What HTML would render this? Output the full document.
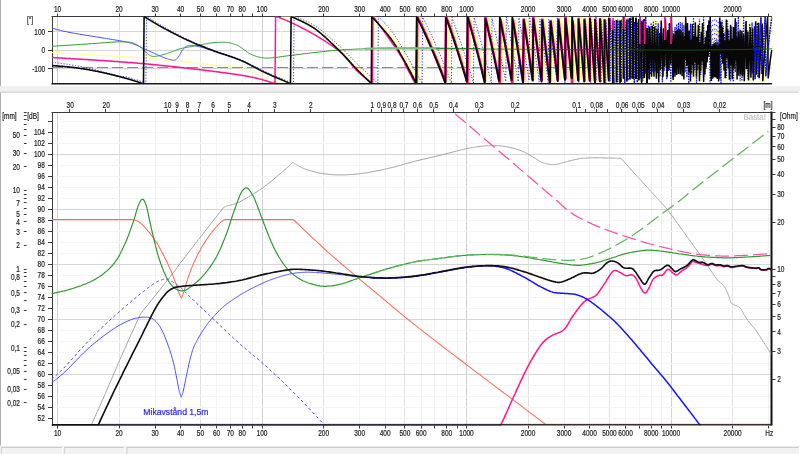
<!DOCTYPE html>
<html><head><meta charset="utf-8"><title>Basta!</title>
<style>html,body{margin:0;padding:0;background:#fff;overflow:hidden}
svg{display:block;font-family:"Liberation Sans",sans-serif}</style></head>
<body><svg width="800" height="454" viewBox="0 0 800 454">
<rect x="0.0" y="0.0" width="800.0" height="454.0" fill="#ffffff" />
<rect x="0.0" y="86.2" width="800.0" height="6.2" fill="#f0f0f0" />
<line x1="0.0" y1="92.2" x2="798.5" y2="92.2" stroke="#c4c4c4" stroke-width="0.8" />
<rect x="0.0" y="0.0" width="0.9" height="86.0" fill="#a8a8a8" />
<rect x="0.0" y="92.5" width="0.9" height="353.0" fill="#a8a8a8" />
<rect x="0.0" y="445.8" width="800.0" height="9.0" fill="#f0f0f0" />
<rect x="1.2" y="447.0" width="61.0" height="7.0" fill="#f2f2f2" />
<line x1="1.2" y1="447.4" x2="62.2" y2="447.4" stroke="#c0c0c0" stroke-width="0.8" />
<line x1="1.5" y1="447.0" x2="1.5" y2="454.0" stroke="#c8c8c8" stroke-width="0.8" />
<line x1="62.5" y1="447.0" x2="62.5" y2="454.0" stroke="#ffffff" stroke-width="1" />
<rect x="64.4" y="447.0" width="59.8" height="7.0" fill="#f2f2f2" />
<line x1="64.4" y1="447.4" x2="124.2" y2="447.4" stroke="#c0c0c0" stroke-width="0.8" />
<line x1="64.7" y1="447.0" x2="64.7" y2="454.0" stroke="#c8c8c8" stroke-width="0.8" />
<line x1="124.5" y1="447.0" x2="124.5" y2="454.0" stroke="#ffffff" stroke-width="1" />
<rect x="126.6" y="447.0" width="671.9" height="7.0" fill="#f2f2f2" />
<line x1="126.6" y1="447.4" x2="798.5" y2="447.4" stroke="#c0c0c0" stroke-width="0.8" />
<line x1="126.9" y1="447.0" x2="126.9" y2="454.0" stroke="#c8c8c8" stroke-width="0.8" />
<line x1="799.5" y1="447.0" x2="799.5" y2="454.0" stroke="#ffffff" stroke-width="1" />
<line x1="57.5" y1="16.5" x2="57.5" y2="83.5" stroke="#d0d0d0" stroke-width="1" />
<line x1="119.5" y1="16.5" x2="119.5" y2="83.5" stroke="#e1e1e1" stroke-width="1" />
<line x1="155.5" y1="16.5" x2="155.5" y2="83.5" stroke="#f3f3f3" stroke-width="1" />
<line x1="180.5" y1="16.5" x2="180.5" y2="83.5" stroke="#f3f3f3" stroke-width="1" />
<line x1="200.5" y1="16.5" x2="200.5" y2="83.5" stroke="#e1e1e1" stroke-width="1" />
<line x1="216.5" y1="16.5" x2="216.5" y2="83.5" stroke="#f3f3f3" stroke-width="1" />
<line x1="230.5" y1="16.5" x2="230.5" y2="83.5" stroke="#f3f3f3" stroke-width="1" />
<line x1="242.5" y1="16.5" x2="242.5" y2="83.5" stroke="#f3f3f3" stroke-width="1" />
<line x1="252.5" y1="16.5" x2="252.5" y2="83.5" stroke="#f3f3f3" stroke-width="1" />
<line x1="262.5" y1="16.5" x2="262.5" y2="83.5" stroke="#d0d0d0" stroke-width="1" />
<line x1="323.5" y1="16.5" x2="323.5" y2="83.5" stroke="#e1e1e1" stroke-width="1" />
<line x1="359.5" y1="16.5" x2="359.5" y2="83.5" stroke="#f3f3f3" stroke-width="1" />
<line x1="385.5" y1="16.5" x2="385.5" y2="83.5" stroke="#f3f3f3" stroke-width="1" />
<line x1="404.5" y1="16.5" x2="404.5" y2="83.5" stroke="#e1e1e1" stroke-width="1" />
<line x1="421.5" y1="16.5" x2="421.5" y2="83.5" stroke="#f3f3f3" stroke-width="1" />
<line x1="434.5" y1="16.5" x2="434.5" y2="83.5" stroke="#f3f3f3" stroke-width="1" />
<line x1="446.5" y1="16.5" x2="446.5" y2="83.5" stroke="#f3f3f3" stroke-width="1" />
<line x1="457.5" y1="16.5" x2="457.5" y2="83.5" stroke="#f3f3f3" stroke-width="1" />
<line x1="466.5" y1="16.5" x2="466.5" y2="83.5" stroke="#d0d0d0" stroke-width="1" />
<line x1="528.5" y1="16.5" x2="528.5" y2="83.5" stroke="#e1e1e1" stroke-width="1" />
<line x1="564.5" y1="16.5" x2="564.5" y2="83.5" stroke="#f3f3f3" stroke-width="1" />
<line x1="589.5" y1="16.5" x2="589.5" y2="83.5" stroke="#f3f3f3" stroke-width="1" />
<line x1="609.5" y1="16.5" x2="609.5" y2="83.5" stroke="#e1e1e1" stroke-width="1" />
<line x1="625.5" y1="16.5" x2="625.5" y2="83.5" stroke="#f3f3f3" stroke-width="1" />
<line x1="639.5" y1="16.5" x2="639.5" y2="83.5" stroke="#f3f3f3" stroke-width="1" />
<line x1="651.5" y1="16.5" x2="651.5" y2="83.5" stroke="#f3f3f3" stroke-width="1" />
<line x1="661.5" y1="16.5" x2="661.5" y2="83.5" stroke="#f3f3f3" stroke-width="1" />
<line x1="671.5" y1="16.5" x2="671.5" y2="83.5" stroke="#d0d0d0" stroke-width="1" />
<line x1="732.5" y1="16.5" x2="732.5" y2="83.5" stroke="#e1e1e1" stroke-width="1" />
<line x1="768.5" y1="16.5" x2="768.5" y2="83.5" stroke="#f3f3f3" stroke-width="1" />
<line x1="52.0" y1="31.5" x2="772.0" y2="31.5" stroke="#d4d4d4" stroke-width="1" />
<line x1="52.0" y1="50.5" x2="772.0" y2="50.5" stroke="#d4d4d4" stroke-width="1" />
<line x1="52.0" y1="68.5" x2="772.0" y2="68.5" stroke="#d4d4d4" stroke-width="1" />
<line x1="57.5" y1="112.0" x2="57.5" y2="424.0" stroke="#d0d0d0" stroke-width="1" />
<line x1="119.5" y1="112.0" x2="119.5" y2="424.0" stroke="#e1e1e1" stroke-width="1" />
<line x1="155.5" y1="112.0" x2="155.5" y2="424.0" stroke="#f3f3f3" stroke-width="1" />
<line x1="180.5" y1="112.0" x2="180.5" y2="424.0" stroke="#f3f3f3" stroke-width="1" />
<line x1="200.5" y1="112.0" x2="200.5" y2="424.0" stroke="#e1e1e1" stroke-width="1" />
<line x1="216.5" y1="112.0" x2="216.5" y2="424.0" stroke="#f3f3f3" stroke-width="1" />
<line x1="230.5" y1="112.0" x2="230.5" y2="424.0" stroke="#f3f3f3" stroke-width="1" />
<line x1="242.5" y1="112.0" x2="242.5" y2="424.0" stroke="#f3f3f3" stroke-width="1" />
<line x1="252.5" y1="112.0" x2="252.5" y2="424.0" stroke="#f3f3f3" stroke-width="1" />
<line x1="262.5" y1="112.0" x2="262.5" y2="424.0" stroke="#d0d0d0" stroke-width="1" />
<line x1="323.5" y1="112.0" x2="323.5" y2="424.0" stroke="#e1e1e1" stroke-width="1" />
<line x1="359.5" y1="112.0" x2="359.5" y2="424.0" stroke="#f3f3f3" stroke-width="1" />
<line x1="385.5" y1="112.0" x2="385.5" y2="424.0" stroke="#f3f3f3" stroke-width="1" />
<line x1="404.5" y1="112.0" x2="404.5" y2="424.0" stroke="#e1e1e1" stroke-width="1" />
<line x1="421.5" y1="112.0" x2="421.5" y2="424.0" stroke="#f3f3f3" stroke-width="1" />
<line x1="434.5" y1="112.0" x2="434.5" y2="424.0" stroke="#f3f3f3" stroke-width="1" />
<line x1="446.5" y1="112.0" x2="446.5" y2="424.0" stroke="#f3f3f3" stroke-width="1" />
<line x1="457.5" y1="112.0" x2="457.5" y2="424.0" stroke="#f3f3f3" stroke-width="1" />
<line x1="466.5" y1="112.0" x2="466.5" y2="424.0" stroke="#d0d0d0" stroke-width="1" />
<line x1="528.5" y1="112.0" x2="528.5" y2="424.0" stroke="#e1e1e1" stroke-width="1" />
<line x1="564.5" y1="112.0" x2="564.5" y2="424.0" stroke="#f3f3f3" stroke-width="1" />
<line x1="589.5" y1="112.0" x2="589.5" y2="424.0" stroke="#f3f3f3" stroke-width="1" />
<line x1="609.5" y1="112.0" x2="609.5" y2="424.0" stroke="#e1e1e1" stroke-width="1" />
<line x1="625.5" y1="112.0" x2="625.5" y2="424.0" stroke="#f3f3f3" stroke-width="1" />
<line x1="639.5" y1="112.0" x2="639.5" y2="424.0" stroke="#f3f3f3" stroke-width="1" />
<line x1="651.5" y1="112.0" x2="651.5" y2="424.0" stroke="#f3f3f3" stroke-width="1" />
<line x1="661.5" y1="112.0" x2="661.5" y2="424.0" stroke="#f3f3f3" stroke-width="1" />
<line x1="671.5" y1="112.0" x2="671.5" y2="424.0" stroke="#d0d0d0" stroke-width="1" />
<line x1="732.5" y1="112.0" x2="732.5" y2="424.0" stroke="#e1e1e1" stroke-width="1" />
<line x1="768.5" y1="112.0" x2="768.5" y2="424.0" stroke="#f3f3f3" stroke-width="1" />
<line x1="52.0" y1="418.5" x2="771.5" y2="418.5" stroke="#f4f4f4" stroke-width="1" />
<line x1="52.0" y1="407.5" x2="771.5" y2="407.5" stroke="#f4f4f4" stroke-width="1" />
<line x1="52.0" y1="396.5" x2="771.5" y2="396.5" stroke="#f4f4f4" stroke-width="1" />
<line x1="52.0" y1="385.5" x2="771.5" y2="385.5" stroke="#f4f4f4" stroke-width="1" />
<line x1="52.0" y1="374.5" x2="771.5" y2="374.5" stroke="#d5d5d5" stroke-width="1" />
<line x1="52.0" y1="363.5" x2="771.5" y2="363.5" stroke="#f4f4f4" stroke-width="1" />
<line x1="52.0" y1="352.5" x2="771.5" y2="352.5" stroke="#f4f4f4" stroke-width="1" />
<line x1="52.0" y1="341.5" x2="771.5" y2="341.5" stroke="#f4f4f4" stroke-width="1" />
<line x1="52.0" y1="330.5" x2="771.5" y2="330.5" stroke="#f4f4f4" stroke-width="1" />
<line x1="52.0" y1="319.5" x2="771.5" y2="319.5" stroke="#d5d5d5" stroke-width="1" />
<line x1="52.0" y1="308.5" x2="771.5" y2="308.5" stroke="#f4f4f4" stroke-width="1" />
<line x1="52.0" y1="297.5" x2="771.5" y2="297.5" stroke="#f4f4f4" stroke-width="1" />
<line x1="52.0" y1="286.5" x2="771.5" y2="286.5" stroke="#f4f4f4" stroke-width="1" />
<line x1="52.0" y1="275.5" x2="771.5" y2="275.5" stroke="#f4f4f4" stroke-width="1" />
<line x1="52.0" y1="264.5" x2="771.5" y2="264.5" stroke="#d5d5d5" stroke-width="1" />
<line x1="52.0" y1="253.5" x2="771.5" y2="253.5" stroke="#f4f4f4" stroke-width="1" />
<line x1="52.0" y1="242.5" x2="771.5" y2="242.5" stroke="#f4f4f4" stroke-width="1" />
<line x1="52.0" y1="231.5" x2="771.5" y2="231.5" stroke="#f4f4f4" stroke-width="1" />
<line x1="52.0" y1="220.5" x2="771.5" y2="220.5" stroke="#f4f4f4" stroke-width="1" />
<line x1="52.0" y1="209.5" x2="771.5" y2="209.5" stroke="#d5d5d5" stroke-width="1" />
<line x1="52.0" y1="198.5" x2="771.5" y2="198.5" stroke="#f4f4f4" stroke-width="1" />
<line x1="52.0" y1="187.5" x2="771.5" y2="187.5" stroke="#f4f4f4" stroke-width="1" />
<line x1="52.0" y1="176.5" x2="771.5" y2="176.5" stroke="#f4f4f4" stroke-width="1" />
<line x1="52.0" y1="165.5" x2="771.5" y2="165.5" stroke="#f4f4f4" stroke-width="1" />
<line x1="52.0" y1="154.5" x2="771.5" y2="154.5" stroke="#d5d5d5" stroke-width="1" />
<line x1="52.0" y1="143.5" x2="771.5" y2="143.5" stroke="#f4f4f4" stroke-width="1" />
<line x1="52.0" y1="132.5" x2="771.5" y2="132.5" stroke="#f4f4f4" stroke-width="1" />
<line x1="52.0" y1="121.5" x2="771.5" y2="121.5" stroke="#f4f4f4" stroke-width="1" />
<line x1="51.5" y1="16.5" x2="772.0" y2="16.5" stroke="#3a3a3a" stroke-width="1" />
<line x1="52.5" y1="16.5" x2="52.5" y2="84.0" stroke="#3a3a3a" stroke-width="1" />
<line x1="57.5" y1="13.5" x2="57.5" y2="16.5" stroke="#3a3a3a" stroke-width="1" />
<line x1="57.5" y1="425.6" x2="57.5" y2="428.5" stroke="#3a3a3a" stroke-width="1" />
<line x1="119.5" y1="13.5" x2="119.5" y2="16.5" stroke="#3a3a3a" stroke-width="1" />
<line x1="119.5" y1="425.6" x2="119.5" y2="428.5" stroke="#3a3a3a" stroke-width="1" />
<line x1="155.5" y1="13.5" x2="155.5" y2="16.5" stroke="#3a3a3a" stroke-width="1" />
<line x1="155.5" y1="425.6" x2="155.5" y2="428.5" stroke="#3a3a3a" stroke-width="1" />
<line x1="180.5" y1="13.5" x2="180.5" y2="16.5" stroke="#3a3a3a" stroke-width="1" />
<line x1="180.5" y1="425.6" x2="180.5" y2="428.5" stroke="#3a3a3a" stroke-width="1" />
<line x1="200.5" y1="13.5" x2="200.5" y2="16.5" stroke="#3a3a3a" stroke-width="1" />
<line x1="200.5" y1="425.6" x2="200.5" y2="428.5" stroke="#3a3a3a" stroke-width="1" />
<line x1="216.5" y1="13.5" x2="216.5" y2="16.5" stroke="#3a3a3a" stroke-width="1" />
<line x1="216.5" y1="425.6" x2="216.5" y2="428.5" stroke="#3a3a3a" stroke-width="1" />
<line x1="230.5" y1="13.5" x2="230.5" y2="16.5" stroke="#3a3a3a" stroke-width="1" />
<line x1="230.5" y1="425.6" x2="230.5" y2="428.5" stroke="#3a3a3a" stroke-width="1" />
<line x1="242.5" y1="13.5" x2="242.5" y2="16.5" stroke="#3a3a3a" stroke-width="1" />
<line x1="242.5" y1="425.6" x2="242.5" y2="428.5" stroke="#3a3a3a" stroke-width="1" />
<line x1="252.5" y1="13.5" x2="252.5" y2="16.5" stroke="#3a3a3a" stroke-width="1" />
<line x1="252.5" y1="425.6" x2="252.5" y2="428.5" stroke="#3a3a3a" stroke-width="1" />
<line x1="262.5" y1="13.5" x2="262.5" y2="16.5" stroke="#3a3a3a" stroke-width="1" />
<line x1="262.5" y1="425.6" x2="262.5" y2="428.5" stroke="#3a3a3a" stroke-width="1" />
<line x1="323.5" y1="13.5" x2="323.5" y2="16.5" stroke="#3a3a3a" stroke-width="1" />
<line x1="323.5" y1="425.6" x2="323.5" y2="428.5" stroke="#3a3a3a" stroke-width="1" />
<line x1="359.5" y1="13.5" x2="359.5" y2="16.5" stroke="#3a3a3a" stroke-width="1" />
<line x1="359.5" y1="425.6" x2="359.5" y2="428.5" stroke="#3a3a3a" stroke-width="1" />
<line x1="385.5" y1="13.5" x2="385.5" y2="16.5" stroke="#3a3a3a" stroke-width="1" />
<line x1="385.5" y1="425.6" x2="385.5" y2="428.5" stroke="#3a3a3a" stroke-width="1" />
<line x1="404.5" y1="13.5" x2="404.5" y2="16.5" stroke="#3a3a3a" stroke-width="1" />
<line x1="404.5" y1="425.6" x2="404.5" y2="428.5" stroke="#3a3a3a" stroke-width="1" />
<line x1="421.5" y1="13.5" x2="421.5" y2="16.5" stroke="#3a3a3a" stroke-width="1" />
<line x1="421.5" y1="425.6" x2="421.5" y2="428.5" stroke="#3a3a3a" stroke-width="1" />
<line x1="434.5" y1="13.5" x2="434.5" y2="16.5" stroke="#3a3a3a" stroke-width="1" />
<line x1="434.5" y1="425.6" x2="434.5" y2="428.5" stroke="#3a3a3a" stroke-width="1" />
<line x1="446.5" y1="13.5" x2="446.5" y2="16.5" stroke="#3a3a3a" stroke-width="1" />
<line x1="446.5" y1="425.6" x2="446.5" y2="428.5" stroke="#3a3a3a" stroke-width="1" />
<line x1="457.5" y1="13.5" x2="457.5" y2="16.5" stroke="#3a3a3a" stroke-width="1" />
<line x1="457.5" y1="425.6" x2="457.5" y2="428.5" stroke="#3a3a3a" stroke-width="1" />
<line x1="466.5" y1="13.5" x2="466.5" y2="16.5" stroke="#3a3a3a" stroke-width="1" />
<line x1="466.5" y1="425.6" x2="466.5" y2="428.5" stroke="#3a3a3a" stroke-width="1" />
<line x1="528.5" y1="13.5" x2="528.5" y2="16.5" stroke="#3a3a3a" stroke-width="1" />
<line x1="528.5" y1="425.6" x2="528.5" y2="428.5" stroke="#3a3a3a" stroke-width="1" />
<line x1="564.5" y1="13.5" x2="564.5" y2="16.5" stroke="#3a3a3a" stroke-width="1" />
<line x1="564.5" y1="425.6" x2="564.5" y2="428.5" stroke="#3a3a3a" stroke-width="1" />
<line x1="589.5" y1="13.5" x2="589.5" y2="16.5" stroke="#3a3a3a" stroke-width="1" />
<line x1="589.5" y1="425.6" x2="589.5" y2="428.5" stroke="#3a3a3a" stroke-width="1" />
<line x1="609.5" y1="13.5" x2="609.5" y2="16.5" stroke="#3a3a3a" stroke-width="1" />
<line x1="609.5" y1="425.6" x2="609.5" y2="428.5" stroke="#3a3a3a" stroke-width="1" />
<line x1="625.5" y1="13.5" x2="625.5" y2="16.5" stroke="#3a3a3a" stroke-width="1" />
<line x1="625.5" y1="425.6" x2="625.5" y2="428.5" stroke="#3a3a3a" stroke-width="1" />
<line x1="639.5" y1="13.5" x2="639.5" y2="16.5" stroke="#3a3a3a" stroke-width="1" />
<line x1="639.5" y1="425.6" x2="639.5" y2="428.5" stroke="#3a3a3a" stroke-width="1" />
<line x1="651.5" y1="13.5" x2="651.5" y2="16.5" stroke="#3a3a3a" stroke-width="1" />
<line x1="651.5" y1="425.6" x2="651.5" y2="428.5" stroke="#3a3a3a" stroke-width="1" />
<line x1="661.5" y1="13.5" x2="661.5" y2="16.5" stroke="#3a3a3a" stroke-width="1" />
<line x1="661.5" y1="425.6" x2="661.5" y2="428.5" stroke="#3a3a3a" stroke-width="1" />
<line x1="671.5" y1="13.5" x2="671.5" y2="16.5" stroke="#3a3a3a" stroke-width="1" />
<line x1="671.5" y1="425.6" x2="671.5" y2="428.5" stroke="#3a3a3a" stroke-width="1" />
<line x1="732.5" y1="13.5" x2="732.5" y2="16.5" stroke="#3a3a3a" stroke-width="1" />
<line x1="732.5" y1="425.6" x2="732.5" y2="428.5" stroke="#3a3a3a" stroke-width="1" />
<line x1="768.5" y1="13.5" x2="768.5" y2="16.5" stroke="#3a3a3a" stroke-width="1" />
<line x1="768.5" y1="425.6" x2="768.5" y2="428.5" stroke="#3a3a3a" stroke-width="1" />
<line x1="48.0" y1="31.5" x2="52.0" y2="31.5" stroke="#3a3a3a" stroke-width="1" />
<line x1="48.0" y1="50.5" x2="52.0" y2="50.5" stroke="#3a3a3a" stroke-width="1" />
<line x1="48.0" y1="68.5" x2="52.0" y2="68.5" stroke="#3a3a3a" stroke-width="1" />
<line x1="51.5" y1="112.5" x2="771.5" y2="112.5" stroke="#3a3a3a" stroke-width="1" />
<line x1="52.5" y1="112.0" x2="52.5" y2="425.6" stroke="#3a3a3a" stroke-width="1" />
<rect x="770.5" y="111.5" width="2.0" height="314.1" fill="#111" />
<line x1="167.5" y1="109.0" x2="167.5" y2="112.0" stroke="#3a3a3a" stroke-width="1" />
<line x1="105.5" y1="109.0" x2="105.5" y2="112.0" stroke="#3a3a3a" stroke-width="1" />
<line x1="69.5" y1="109.0" x2="69.5" y2="112.0" stroke="#3a3a3a" stroke-width="1" />
<line x1="371.5" y1="109.0" x2="371.5" y2="112.0" stroke="#3a3a3a" stroke-width="1" />
<line x1="310.5" y1="109.0" x2="310.5" y2="112.0" stroke="#3a3a3a" stroke-width="1" />
<line x1="274.5" y1="109.0" x2="274.5" y2="112.0" stroke="#3a3a3a" stroke-width="1" />
<line x1="248.5" y1="109.0" x2="248.5" y2="112.0" stroke="#3a3a3a" stroke-width="1" />
<line x1="228.5" y1="109.0" x2="228.5" y2="112.0" stroke="#3a3a3a" stroke-width="1" />
<line x1="212.5" y1="109.0" x2="212.5" y2="112.0" stroke="#3a3a3a" stroke-width="1" />
<line x1="198.5" y1="109.0" x2="198.5" y2="112.0" stroke="#3a3a3a" stroke-width="1" />
<line x1="187.5" y1="109.0" x2="187.5" y2="112.0" stroke="#3a3a3a" stroke-width="1" />
<line x1="176.5" y1="109.0" x2="176.5" y2="112.0" stroke="#3a3a3a" stroke-width="1" />
<line x1="576.5" y1="109.0" x2="576.5" y2="112.0" stroke="#3a3a3a" stroke-width="1" />
<line x1="514.5" y1="109.0" x2="514.5" y2="112.0" stroke="#3a3a3a" stroke-width="1" />
<line x1="478.5" y1="109.0" x2="478.5" y2="112.0" stroke="#3a3a3a" stroke-width="1" />
<line x1="453.5" y1="109.0" x2="453.5" y2="112.0" stroke="#3a3a3a" stroke-width="1" />
<line x1="433.5" y1="109.0" x2="433.5" y2="112.0" stroke="#3a3a3a" stroke-width="1" />
<line x1="417.5" y1="109.0" x2="417.5" y2="112.0" stroke="#3a3a3a" stroke-width="1" />
<line x1="403.5" y1="109.0" x2="403.5" y2="112.0" stroke="#3a3a3a" stroke-width="1" />
<line x1="391.5" y1="109.0" x2="391.5" y2="112.0" stroke="#3a3a3a" stroke-width="1" />
<line x1="381.5" y1="109.0" x2="381.5" y2="112.0" stroke="#3a3a3a" stroke-width="1" />
<line x1="719.5" y1="109.0" x2="719.5" y2="112.0" stroke="#3a3a3a" stroke-width="1" />
<line x1="683.5" y1="109.0" x2="683.5" y2="112.0" stroke="#3a3a3a" stroke-width="1" />
<line x1="657.5" y1="109.0" x2="657.5" y2="112.0" stroke="#3a3a3a" stroke-width="1" />
<line x1="637.5" y1="109.0" x2="637.5" y2="112.0" stroke="#3a3a3a" stroke-width="1" />
<line x1="621.5" y1="109.0" x2="621.5" y2="112.0" stroke="#3a3a3a" stroke-width="1" />
<line x1="607.5" y1="109.0" x2="607.5" y2="112.0" stroke="#3a3a3a" stroke-width="1" />
<line x1="596.5" y1="109.0" x2="596.5" y2="112.0" stroke="#3a3a3a" stroke-width="1" />
<line x1="585.5" y1="109.0" x2="585.5" y2="112.0" stroke="#3a3a3a" stroke-width="1" />
<line x1="48.0" y1="418.5" x2="52.0" y2="418.5" stroke="#3a3a3a" stroke-width="1" />
<line x1="48.0" y1="407.5" x2="52.0" y2="407.5" stroke="#3a3a3a" stroke-width="1" />
<line x1="48.0" y1="396.5" x2="52.0" y2="396.5" stroke="#3a3a3a" stroke-width="1" />
<line x1="48.0" y1="385.5" x2="52.0" y2="385.5" stroke="#3a3a3a" stroke-width="1" />
<line x1="48.0" y1="374.5" x2="52.0" y2="374.5" stroke="#3a3a3a" stroke-width="1" />
<line x1="48.0" y1="363.5" x2="52.0" y2="363.5" stroke="#3a3a3a" stroke-width="1" />
<line x1="48.0" y1="352.5" x2="52.0" y2="352.5" stroke="#3a3a3a" stroke-width="1" />
<line x1="48.0" y1="341.5" x2="52.0" y2="341.5" stroke="#3a3a3a" stroke-width="1" />
<line x1="48.0" y1="330.5" x2="52.0" y2="330.5" stroke="#3a3a3a" stroke-width="1" />
<line x1="48.0" y1="319.5" x2="52.0" y2="319.5" stroke="#3a3a3a" stroke-width="1" />
<line x1="48.0" y1="308.5" x2="52.0" y2="308.5" stroke="#3a3a3a" stroke-width="1" />
<line x1="48.0" y1="297.5" x2="52.0" y2="297.5" stroke="#3a3a3a" stroke-width="1" />
<line x1="48.0" y1="286.5" x2="52.0" y2="286.5" stroke="#3a3a3a" stroke-width="1" />
<line x1="48.0" y1="275.5" x2="52.0" y2="275.5" stroke="#3a3a3a" stroke-width="1" />
<line x1="48.0" y1="264.5" x2="52.0" y2="264.5" stroke="#3a3a3a" stroke-width="1" />
<line x1="48.0" y1="253.5" x2="52.0" y2="253.5" stroke="#3a3a3a" stroke-width="1" />
<line x1="48.0" y1="242.5" x2="52.0" y2="242.5" stroke="#3a3a3a" stroke-width="1" />
<line x1="48.0" y1="231.5" x2="52.0" y2="231.5" stroke="#3a3a3a" stroke-width="1" />
<line x1="48.0" y1="220.5" x2="52.0" y2="220.5" stroke="#3a3a3a" stroke-width="1" />
<line x1="48.0" y1="209.5" x2="52.0" y2="209.5" stroke="#3a3a3a" stroke-width="1" />
<line x1="48.0" y1="198.5" x2="52.0" y2="198.5" stroke="#3a3a3a" stroke-width="1" />
<line x1="48.0" y1="187.5" x2="52.0" y2="187.5" stroke="#3a3a3a" stroke-width="1" />
<line x1="48.0" y1="176.5" x2="52.0" y2="176.5" stroke="#3a3a3a" stroke-width="1" />
<line x1="48.0" y1="165.5" x2="52.0" y2="165.5" stroke="#3a3a3a" stroke-width="1" />
<line x1="48.0" y1="154.5" x2="52.0" y2="154.5" stroke="#3a3a3a" stroke-width="1" />
<line x1="48.0" y1="143.5" x2="52.0" y2="143.5" stroke="#3a3a3a" stroke-width="1" />
<line x1="48.0" y1="132.5" x2="52.0" y2="132.5" stroke="#3a3a3a" stroke-width="1" />
<line x1="48.0" y1="121.5" x2="52.0" y2="121.5" stroke="#3a3a3a" stroke-width="1" />
<line x1="23.8" y1="190.5" x2="26.6" y2="190.5" stroke="#3a3a3a" stroke-width="1" />
<line x1="23.8" y1="166.5" x2="26.6" y2="166.5" stroke="#3a3a3a" stroke-width="1" />
<line x1="23.8" y1="153.5" x2="26.6" y2="153.5" stroke="#3a3a3a" stroke-width="1" />
<line x1="23.8" y1="143.5" x2="26.6" y2="143.5" stroke="#3a3a3a" stroke-width="1" />
<line x1="23.8" y1="135.5" x2="26.6" y2="135.5" stroke="#3a3a3a" stroke-width="1" />
<line x1="23.8" y1="129.5" x2="26.6" y2="129.5" stroke="#3a3a3a" stroke-width="1" />
<line x1="23.8" y1="124.5" x2="26.6" y2="124.5" stroke="#3a3a3a" stroke-width="1" />
<line x1="23.8" y1="119.5" x2="26.6" y2="119.5" stroke="#3a3a3a" stroke-width="1" />
<line x1="23.8" y1="115.5" x2="26.6" y2="115.5" stroke="#3a3a3a" stroke-width="1" />
<line x1="23.8" y1="269.5" x2="26.6" y2="269.5" stroke="#3a3a3a" stroke-width="1" />
<line x1="23.8" y1="245.5" x2="26.6" y2="245.5" stroke="#3a3a3a" stroke-width="1" />
<line x1="23.8" y1="231.5" x2="26.6" y2="231.5" stroke="#3a3a3a" stroke-width="1" />
<line x1="23.8" y1="221.5" x2="26.6" y2="221.5" stroke="#3a3a3a" stroke-width="1" />
<line x1="23.8" y1="214.5" x2="26.6" y2="214.5" stroke="#3a3a3a" stroke-width="1" />
<line x1="23.8" y1="208.5" x2="26.6" y2="208.5" stroke="#3a3a3a" stroke-width="1" />
<line x1="23.8" y1="202.5" x2="26.6" y2="202.5" stroke="#3a3a3a" stroke-width="1" />
<line x1="23.8" y1="198.5" x2="26.6" y2="198.5" stroke="#3a3a3a" stroke-width="1" />
<line x1="23.8" y1="194.5" x2="26.6" y2="194.5" stroke="#3a3a3a" stroke-width="1" />
<line x1="23.8" y1="347.5" x2="26.6" y2="347.5" stroke="#3a3a3a" stroke-width="1" />
<line x1="23.8" y1="324.5" x2="26.6" y2="324.5" stroke="#3a3a3a" stroke-width="1" />
<line x1="23.8" y1="310.5" x2="26.6" y2="310.5" stroke="#3a3a3a" stroke-width="1" />
<line x1="23.8" y1="300.5" x2="26.6" y2="300.5" stroke="#3a3a3a" stroke-width="1" />
<line x1="23.8" y1="292.5" x2="26.6" y2="292.5" stroke="#3a3a3a" stroke-width="1" />
<line x1="23.8" y1="286.5" x2="26.6" y2="286.5" stroke="#3a3a3a" stroke-width="1" />
<line x1="23.8" y1="281.5" x2="26.6" y2="281.5" stroke="#3a3a3a" stroke-width="1" />
<line x1="23.8" y1="276.5" x2="26.6" y2="276.5" stroke="#3a3a3a" stroke-width="1" />
<line x1="23.8" y1="272.5" x2="26.6" y2="272.5" stroke="#3a3a3a" stroke-width="1" />
<line x1="23.8" y1="402.5" x2="26.6" y2="402.5" stroke="#3a3a3a" stroke-width="1" />
<line x1="23.8" y1="389.5" x2="26.6" y2="389.5" stroke="#3a3a3a" stroke-width="1" />
<line x1="23.8" y1="379.5" x2="26.6" y2="379.5" stroke="#3a3a3a" stroke-width="1" />
<line x1="23.8" y1="371.5" x2="26.6" y2="371.5" stroke="#3a3a3a" stroke-width="1" />
<line x1="23.8" y1="365.5" x2="26.6" y2="365.5" stroke="#3a3a3a" stroke-width="1" />
<line x1="23.8" y1="360.5" x2="26.6" y2="360.5" stroke="#3a3a3a" stroke-width="1" />
<line x1="23.8" y1="355.5" x2="26.6" y2="355.5" stroke="#3a3a3a" stroke-width="1" />
<line x1="23.8" y1="351.5" x2="26.6" y2="351.5" stroke="#3a3a3a" stroke-width="1" />
<line x1="23.8" y1="112.5" x2="26.6" y2="112.5" stroke="#3a3a3a" stroke-width="1" />
<line x1="771.5" y1="379.5" x2="775.5" y2="379.5" stroke="#3a3a3a" stroke-width="1" />
<line x1="771.5" y1="351.5" x2="775.5" y2="351.5" stroke="#3a3a3a" stroke-width="1" />
<line x1="771.5" y1="331.5" x2="775.5" y2="331.5" stroke="#3a3a3a" stroke-width="1" />
<line x1="771.5" y1="316.5" x2="775.5" y2="316.5" stroke="#3a3a3a" stroke-width="1" />
<line x1="771.5" y1="304.5" x2="775.5" y2="304.5" stroke="#3a3a3a" stroke-width="1" />
<line x1="771.5" y1="293.5" x2="775.5" y2="293.5" stroke="#3a3a3a" stroke-width="1" />
<line x1="771.5" y1="284.5" x2="775.5" y2="284.5" stroke="#3a3a3a" stroke-width="1" />
<line x1="771.5" y1="276.5" x2="775.5" y2="276.5" stroke="#3a3a3a" stroke-width="1" />
<line x1="771.5" y1="269.5" x2="775.5" y2="269.5" stroke="#3a3a3a" stroke-width="1" />
<line x1="771.5" y1="222.5" x2="775.5" y2="222.5" stroke="#3a3a3a" stroke-width="1" />
<line x1="771.5" y1="194.5" x2="775.5" y2="194.5" stroke="#3a3a3a" stroke-width="1" />
<line x1="771.5" y1="174.5" x2="775.5" y2="174.5" stroke="#3a3a3a" stroke-width="1" />
<line x1="771.5" y1="159.5" x2="775.5" y2="159.5" stroke="#3a3a3a" stroke-width="1" />
<line x1="771.5" y1="146.5" x2="775.5" y2="146.5" stroke="#3a3a3a" stroke-width="1" />
<line x1="771.5" y1="136.5" x2="775.5" y2="136.5" stroke="#3a3a3a" stroke-width="1" />
<line x1="771.5" y1="127.5" x2="775.5" y2="127.5" stroke="#3a3a3a" stroke-width="1" />
<line x1="771.5" y1="119.5" x2="775.5" y2="119.5" stroke="#3a3a3a" stroke-width="1" />
<line x1="771.5" y1="112.5" x2="775.5" y2="112.5" stroke="#3a3a3a" stroke-width="1" />
<clipPath id="cm"><rect x="51.5" y="112.0" width="720.0" height="314.0"/></clipPath>
<g clip-path="url(#cm)">
<path d="M91.5 424.5 L92.2 423.0 L93.0 421.3 L93.9 419.2 L94.9 416.9 L96.1 414.3 L97.3 411.6 L98.6 408.7 L99.9 405.8 L101.3 402.7 L102.6 399.7 L104.0 396.6 L105.3 393.6 L106.6 390.5 L108.0 387.4 L109.4 384.1 L110.9 380.7 L112.4 377.3 L113.9 373.8 L115.4 370.2 L116.9 366.7 L118.4 363.2 L119.9 359.7 L121.4 356.3 L122.9 352.9 L124.4 349.5 L126.0 345.9 L127.7 342.1 L129.4 338.3 L131.1 334.6 L132.8 330.9 L134.4 327.3 L135.9 323.9 L137.3 320.9 L138.6 318.1 L139.6 315.8 L140.5 313.9 L141.7 312.4 L143.2 310.5 L145.0 308.3 L147.0 305.8 L149.2 303.1 L151.5 300.2 L153.9 297.2 L156.4 294.2 L158.8 291.1 L161.2 288.1 L163.5 285.2 L165.6 282.5 L167.6 279.9 L169.6 277.3 L171.5 274.8 L173.5 272.3 L175.4 269.8 L177.3 267.2 L179.2 264.6 L181.2 262.0 L183.3 259.3 L185.4 256.5 L187.7 253.6 L190.0 250.5 L192.6 247.2 L195.4 243.5 L198.5 239.5 L201.7 235.4 L205.0 231.2 L208.2 227.1 L211.4 223.0 L214.4 219.1 L217.2 215.6 L219.7 212.4 L221.8 209.7 L223.4 207.6 L223.6 207.5 L223.8 207.4 L224.0 207.3 L224.3 207.2 L224.6 207.0 L224.9 206.9 L225.2 206.7 L225.6 206.6 L225.9 206.4 L226.3 206.3 L226.6 206.1 L227.0 206.0 L227.4 205.9 L227.7 205.8 L228.1 205.7 L228.5 205.6 L228.8 205.5 L229.2 205.4 L229.6 205.3 L230.1 205.2 L230.5 205.0 L231.0 204.9 L231.5 204.8 L232.0 204.6 L232.5 204.5 L233.0 204.3 L233.4 204.3 L233.9 204.2 L234.4 204.1 L234.9 204.0 L235.5 203.8 L236.1 203.6 L236.9 203.3 L237.8 202.9 L238.8 202.4 L240.0 201.8 L241.4 201.0 L243.0 200.2 L244.7 199.2 L246.5 198.1 L248.5 196.9 L250.5 195.7 L252.6 194.4 L254.7 193.1 L256.8 191.8 L258.8 190.5 L260.8 189.2 L262.6 187.9 L264.4 186.6 L266.2 185.2 L268.0 183.8 L269.9 182.4 L271.7 180.9 L273.4 179.5 L275.2 178.0 L276.8 176.6 L278.4 175.2 L280.0 173.9 L281.4 172.7 L282.7 171.6 L283.9 170.6 L285.1 169.5 L286.2 168.6 L287.2 167.6 L288.1 166.8 L289.0 165.9 L289.8 165.2 L290.6 164.5 L291.2 163.8 L291.8 163.2 L292.3 162.7 L292.8 162.3 L293.0 162.5 L293.3 162.6 L293.7 162.9 L294.1 163.1 L294.5 163.4 L294.9 163.7 L295.4 164.0 L295.9 164.3 L296.4 164.6 L297.0 164.9 L297.5 165.2 L298.0 165.5 L298.5 165.8 L299.0 166.1 L299.4 166.4 L299.9 166.6 L300.4 166.9 L300.9 167.2 L301.4 167.5 L302.0 167.8 L302.7 168.1 L303.5 168.4 L304.3 168.8 L305.3 169.1 L306.4 169.5 L307.6 169.8 L308.9 170.2 L310.3 170.7 L311.8 171.1 L313.3 171.5 L314.9 171.9 L316.5 172.3 L318.1 172.7 L319.7 173.0 L321.3 173.3 L322.9 173.6 L324.5 173.8 L326.1 174.0 L327.7 174.2 L329.3 174.4 L331.0 174.5 L332.6 174.7 L334.3 174.8 L336.0 174.8 L337.7 174.9 L339.5 174.9 L341.2 174.9 L343.0 174.9 L344.8 174.9 L346.6 174.8 L348.4 174.7 L350.3 174.6 L352.1 174.5 L354.0 174.3 L355.9 174.1 L357.8 173.9 L359.7 173.7 L361.7 173.5 L363.6 173.2 L365.6 172.9 L367.6 172.6 L369.7 172.2 L371.7 171.9 L373.8 171.5 L375.9 171.1 L378.0 170.7 L380.2 170.2 L382.3 169.7 L384.4 169.3 L386.6 168.8 L388.7 168.3 L390.8 167.8 L392.9 167.3 L395.0 166.8 L397.1 166.2 L399.2 165.6 L401.3 165.0 L403.4 164.4 L405.5 163.8 L407.6 163.2 L409.7 162.7 L411.8 162.1 L413.8 161.5 L415.9 161.0 L417.9 160.5 L420.0 160.0 L422.0 159.5 L424.0 159.0 L426.0 158.6 L428.0 158.1 L429.9 157.7 L431.9 157.2 L433.9 156.7 L435.9 156.3 L438.0 155.8 L440.0 155.3 L442.1 154.8 L444.2 154.2 L446.4 153.7 L448.6 153.1 L450.9 152.5 L453.1 152.0 L455.2 151.4 L457.4 150.8 L459.4 150.3 L461.4 149.8 L463.3 149.4 L465.0 149.0 L466.6 148.7 L468.1 148.3 L469.6 148.1 L470.9 147.8 L472.2 147.6 L473.4 147.4 L474.6 147.2 L475.7 147.1 L476.8 146.9 L477.9 146.8 L478.9 146.6 L480.0 146.5 L481.0 146.4 L481.9 146.2 L482.8 146.1 L483.6 146.0 L484.4 146.0 L485.1 145.9 L485.9 145.8 L486.7 145.8 L487.5 145.7 L488.4 145.7 L489.3 145.7 L490.3 145.7 L491.4 145.7 L492.5 145.7 L493.7 145.7 L494.9 145.7 L496.1 145.7 L497.3 145.7 L498.6 145.8 L499.9 145.9 L501.3 146.0 L502.6 146.1 L503.9 146.3 L505.3 146.5 L506.7 146.8 L508.1 147.0 L509.5 147.3 L511.0 147.7 L512.5 148.0 L514.0 148.4 L515.5 148.8 L517.0 149.3 L518.5 149.8 L520.0 150.3 L521.5 150.9 L523.0 151.5 L524.5 152.2 L526.1 153.0 L527.6 153.9 L529.3 154.8 L530.9 155.7 L532.5 156.7 L534.0 157.7 L535.5 158.6 L536.9 159.5 L538.2 160.3 L539.4 161.0 L540.5 161.6 L541.4 162.1 L542.2 162.4 L542.9 162.7 L543.5 163.0 L544.0 163.1 L544.5 163.3 L544.9 163.4 L545.3 163.5 L545.7 163.5 L546.1 163.6 L546.5 163.7 L547.0 163.8 L547.5 163.9 L548.0 164.0 L548.5 164.1 L549.0 164.2 L549.5 164.3 L550.0 164.4 L550.5 164.5 L551.0 164.5 L551.5 164.5 L552.0 164.6 L552.5 164.6 L553.0 164.6 L553.5 164.6 L554.0 164.6 L554.5 164.5 L555.0 164.5 L555.5 164.4 L556.0 164.4 L556.5 164.3 L557.0 164.2 L557.5 164.1 L558.0 164.0 L558.5 163.9 L559.0 163.8 L559.5 163.7 L560.0 163.6 L560.4 163.5 L560.8 163.3 L561.3 163.2 L561.7 163.1 L562.2 162.9 L562.7 162.8 L563.3 162.6 L564.0 162.4 L564.8 162.2 L565.6 162.0 L566.6 161.8 L567.6 161.5 L568.8 161.2 L570.0 160.9 L571.3 160.5 L572.7 160.2 L574.0 159.8 L575.4 159.5 L576.8 159.2 L578.1 158.9 L579.4 158.7 L580.7 158.5 L581.9 158.3 L583.1 158.2 L584.4 158.1 L585.6 158.0 L586.8 158.0 L588.0 157.9 L589.2 157.9 L590.3 157.9 L591.5 157.8 L592.7 157.8 L593.8 157.8 L595.0 157.8 L596.1 157.8 L597.3 157.8 L598.4 157.8 L599.5 157.8 L600.6 157.8 L601.7 157.8 L602.9 157.9 L603.9 157.9 L605.0 157.9 L606.1 158.0 L607.2 158.0 L608.3 158.0 L609.4 158.0 L610.6 158.0 L611.8 158.1 L613.0 158.1 L614.3 158.1 L615.5 158.2 L616.6 158.2 L617.7 158.2 L618.7 158.2 L619.6 158.3 L620.4 158.3 L621.0 158.3 L621.6 159.0 L622.4 159.9 L623.4 161.0 L624.5 162.2 L625.6 163.5 L626.8 164.8 L628.1 166.2 L629.4 167.7 L630.7 169.1 L631.9 170.5 L633.1 171.8 L634.2 173.0 L635.2 174.2 L636.3 175.3 L637.3 176.4 L638.3 177.5 L639.3 178.6 L640.3 179.7 L641.3 180.8 L642.3 181.9 L643.3 183.0 L644.3 184.1 L645.3 185.2 L646.3 186.3 L647.3 187.4 L648.3 188.5 L649.4 189.7 L650.4 190.8 L651.5 192.0 L652.5 193.1 L653.5 194.2 L654.5 195.3 L655.5 196.4 L656.5 197.5 L657.5 198.6 L658.4 199.6 L659.3 200.6 L660.2 201.5 L661.0 202.4 L661.8 203.3 L662.6 204.2 L663.4 205.0 L664.2 205.9 L665.0 206.8 L665.7 207.7 L666.5 208.6 L667.3 209.5 L668.1 210.5 L668.9 211.5 L669.7 212.6 L670.5 213.7 L671.3 214.8 L672.1 215.9 L673.0 217.0 L673.8 218.1 L674.6 219.3 L675.4 220.4 L676.2 221.5 L677.0 222.7 L677.8 223.8 L678.6 224.9 L679.4 226.0 L680.2 227.1 L680.9 228.1 L681.7 229.2 L682.5 230.3 L683.3 231.4 L684.1 232.5 L684.9 233.6 L685.7 234.8 L686.6 236.0 L687.5 237.2 L688.4 238.5 L689.4 239.8 L690.4 241.2 L691.4 242.7 L692.5 244.1 L693.5 245.6 L694.6 247.1 L695.6 248.5 L696.7 250.0 L697.7 251.4 L698.7 252.8 L699.6 254.1 L700.5 255.4 L701.4 256.7 L702.3 257.9 L703.1 259.2 L704.0 260.4 L704.8 261.6 L705.6 262.8 L706.4 264.0 L707.2 265.2 L708.0 266.3 L708.7 267.4 L709.5 268.5 L710.2 269.6 L711.0 270.7 L711.7 271.7 L712.4 272.8 L713.1 273.9 L713.8 274.9 L714.5 275.9 L715.1 276.8 L715.8 277.7 L716.4 278.5 L716.9 279.3 L717.5 280.0 L718.0 280.6 L718.5 281.1 L719.0 281.6 L719.4 282.0 L719.9 282.3 L720.3 282.6 L720.7 282.9 L721.0 283.2 L721.4 283.5 L721.8 283.8 L722.1 284.1 L722.5 284.5 L722.9 284.9 L723.2 285.3 L723.5 285.8 L723.9 286.2 L724.2 286.7 L724.5 287.1 L724.8 287.6 L725.1 288.1 L725.4 288.5 L725.7 289.0 L726.0 289.5 L726.2 290.0 L726.5 290.5 L726.8 291.0 L727.0 291.6 L727.3 292.1 L727.5 292.7 L727.7 293.2 L728.0 293.8 L728.2 294.3 L728.4 294.9 L728.6 295.4 L728.8 296.0 L729.0 296.5 L729.2 297.0 L729.4 297.6 L729.5 298.1 L729.7 298.7 L729.8 299.2 L730.0 299.8 L730.1 300.3 L730.3 300.8 L730.4 301.3 L730.6 301.7 L730.8 302.1 L731.0 302.5 L731.2 302.8 L731.4 303.1 L731.7 303.4 L731.9 303.6 L732.2 303.8 L732.4 304.0 L732.7 304.1 L733.0 304.3 L733.2 304.4 L733.5 304.5 L733.7 304.7 L734.0 304.8 L734.2 304.9 L734.5 305.0 L734.7 305.1 L735.0 305.2 L735.2 305.2 L735.5 305.3 L735.7 305.3 L735.9 305.4 L736.2 305.5 L736.5 305.6 L736.7 305.7 L737.0 305.8 L737.3 306.0 L737.6 306.1 L737.9 306.3 L738.2 306.5 L738.5 306.7 L738.9 306.9 L739.2 307.1 L739.5 307.4 L739.8 307.6 L740.1 307.9 L740.4 308.2 L740.7 308.5 L741.0 308.8 L741.2 309.2 L741.4 309.5 L741.6 309.9 L741.8 310.3 L742.0 310.7 L742.2 311.1 L742.4 311.6 L742.6 312.0 L742.9 312.5 L743.2 313.1 L743.5 313.6 L743.9 314.2 L744.2 314.8 L744.7 315.5 L745.1 316.2 L745.5 316.9 L746.0 317.6 L746.5 318.3 L747.0 319.1 L747.5 319.8 L748.0 320.6 L748.5 321.3 L749.0 322.0 L749.5 322.7 L750.1 323.4 L750.7 324.1 L751.2 324.8 L751.8 325.4 L752.4 326.1 L753.0 326.8 L753.6 327.5 L754.2 328.3 L754.8 329.0 L755.4 329.7 L756.0 330.5 L756.6 331.3 L757.1 332.1 L757.7 332.9 L758.2 333.7 L758.7 334.5 L759.3 335.3 L759.8 336.1 L760.3 337.0 L760.9 337.9 L761.5 338.8 L762.1 339.7 L762.7 340.7 L763.4 341.8 L764.1 342.9 L764.9 344.2 L765.7 345.5 L766.5 346.8 L767.4 348.1 L768.2 349.4 L768.9 350.6 L769.6 351.7 L770.3 352.7 L770.8 353.5 L771.2 354.2" fill="none" stroke="#a4a4a4" stroke-width="1" stroke-linejoin="round" />
<path d="M51.5 219.6 L131.0 219.6 L131.2 219.6 L131.5 219.7 L131.9 219.7 L132.3 219.8 L132.7 219.8 L133.2 219.9 L133.7 219.9 L134.1 220.0 L134.6 220.1 L135.1 220.2 L135.6 220.3 L136.0 220.5 L136.4 220.7 L136.8 220.9 L137.2 221.1 L137.7 221.3 L138.1 221.5 L138.5 221.7 L138.9 222.0 L139.3 222.3 L139.8 222.6 L140.2 222.9 L140.6 223.2 L141.0 223.5 L141.4 223.8 L141.8 224.2 L142.2 224.6 L142.6 224.9 L143.0 225.3 L143.4 225.7 L143.8 226.1 L144.3 226.6 L144.7 227.0 L145.1 227.5 L145.5 228.0 L146.0 228.5 L146.5 229.0 L146.9 229.6 L147.4 230.2 L147.9 230.8 L148.4 231.4 L148.9 232.0 L149.4 232.6 L150.0 233.3 L150.5 234.0 L151.0 234.6 L151.5 235.3 L152.0 236.0 L152.5 236.7 L153.0 237.4 L153.5 238.1 L154.0 238.7 L154.4 239.4 L154.9 240.2 L155.4 240.9 L155.9 241.6 L156.4 242.4 L156.9 243.3 L157.5 244.1 L158.0 245.0 L158.6 245.9 L159.1 246.9 L159.7 248.0 L160.3 249.0 L160.9 250.1 L161.5 251.2 L162.1 252.4 L162.7 253.5 L163.3 254.7 L163.9 255.8 L164.4 256.9 L165.0 258.0 L165.5 259.1 L166.1 260.2 L166.6 261.2 L167.1 262.3 L167.6 263.4 L168.1 264.5 L168.6 265.6 L169.1 266.7 L169.6 267.8 L170.1 268.8 L170.5 269.9 L171.0 271.0 L171.5 272.1 L171.9 273.2 L172.4 274.3 L172.8 275.5 L173.3 276.6 L173.7 277.8 L174.1 278.9 L174.5 280.0 L174.9 281.0 L175.3 282.1 L175.7 283.1 L176.0 284.0 L176.3 284.9 L176.6 285.8 L176.9 286.6 L177.2 287.4 L177.4 288.2 L177.7 289.0 L177.9 289.7 L178.1 290.4 L178.4 291.1 L178.6 291.8 L178.8 292.4 L179.0 293.0 L179.2 293.6 L179.4 294.1 L179.7 294.7 L179.9 295.2 L180.1 295.7 L180.3 296.1 L180.5 296.5 L180.7 296.9 L180.8 297.3 L181.0 297.6 L181.1 297.9 L181.2 298.1 L181.3 297.9 L181.4 297.6 L181.6 297.3 L181.8 297.0 L181.9 296.7 L182.1 296.3 L182.3 295.9 L182.6 295.4 L182.8 294.9 L183.0 294.3 L183.3 293.7 L183.5 293.0 L183.7 292.2 L184.0 291.4 L184.3 290.5 L184.5 289.6 L184.8 288.6 L185.1 287.6 L185.4 286.5 L185.7 285.4 L186.0 284.3 L186.3 283.2 L186.7 282.1 L187.0 281.0 L187.4 279.9 L187.7 278.8 L188.1 277.6 L188.5 276.4 L188.9 275.3 L189.3 274.1 L189.8 272.9 L190.2 271.7 L190.6 270.5 L191.1 269.3 L191.5 268.1 L192.0 267.0 L192.5 265.9 L192.9 264.8 L193.4 263.7 L193.9 262.6 L194.4 261.5 L194.9 260.4 L195.4 259.3 L195.9 258.2 L196.4 257.2 L196.9 256.1 L197.5 255.0 L198.0 254.0 L198.5 253.0 L199.1 251.9 L199.7 250.9 L200.3 249.9 L200.8 248.8 L201.4 247.8 L202.0 246.8 L202.6 245.8 L203.2 244.8 L203.8 243.9 L204.4 242.9 L205.0 242.0 L205.6 241.1 L206.2 240.2 L206.8 239.3 L207.4 238.4 L208.0 237.5 L208.6 236.7 L209.2 235.9 L209.7 235.0 L210.3 234.2 L210.9 233.5 L211.5 232.7 L212.0 232.0 L212.5 231.3 L213.1 230.6 L213.6 230.0 L214.1 229.3 L214.7 228.7 L215.2 228.1 L215.7 227.5 L216.2 227.0 L216.7 226.5 L217.1 225.9 L217.6 225.5 L218.0 225.0 L218.4 224.6 L218.8 224.2 L219.2 223.8 L219.5 223.4 L219.9 223.1 L220.2 222.8 L220.5 222.5 L220.8 222.2 L221.1 221.9 L221.4 221.7 L221.7 221.4 L222.0 221.2 L222.3 221.0 L222.6 220.8 L222.9 220.6 L223.2 220.4 L223.5 220.3 L223.8 220.2 L224.0 220.0 L224.3 219.9 L224.5 219.8 L224.7 219.7 L224.9 219.7 L225.0 219.6 L293.3 219.6 L294.8 221.0 L296.7 222.8 L298.9 224.9 L301.4 227.3 L304.1 229.9 L307.0 232.6 L309.9 235.3 L312.8 238.1 L315.6 240.7 L318.3 243.2 L320.8 245.5 L322.9 247.5 L324.8 249.2 L326.5 250.8 L328.1 252.3 L329.7 253.6 L331.1 254.9 L332.5 256.1 L333.8 257.2 L335.1 258.3 L336.4 259.5 L337.7 260.6 L339.1 261.8 L340.5 263.0 L341.9 264.3 L343.4 265.5 L344.8 266.7 L346.1 267.9 L347.5 269.1 L348.9 270.2 L350.3 271.4 L351.8 272.7 L353.3 273.9 L354.8 275.2 L356.4 276.5 L358.0 277.9 L359.7 279.3 L361.5 280.8 L363.4 282.4 L365.3 283.9 L367.2 285.6 L369.2 287.2 L371.2 288.8 L373.1 290.4 L375.1 292.0 L377.0 293.6 L378.9 295.2 L380.7 296.7 L382.4 298.1 L384.0 299.5 L385.5 300.7 L386.9 302.0 L388.3 303.2 L389.7 304.4 L391.2 305.7 L392.8 307.0 L394.5 308.4 L396.4 310.0 L398.5 311.7 L400.8 313.6 L403.3 315.6 L406.0 317.8 L408.8 320.0 L411.7 322.3 L414.7 324.7 L417.9 327.3 L421.2 329.9 L424.7 332.6 L428.3 335.4 L432.0 338.3 L435.9 341.4 L440.0 344.5 L444.3 347.8 L449.0 351.4 L453.9 355.1 L459.0 359.0 L464.3 363.0 L469.6 367.1 L475.0 371.1 L480.3 375.1 L485.6 379.1 L490.6 382.9 L495.5 386.6 L500.0 390.0 L504.4 393.3 L508.9 396.7 L513.4 400.1 L517.8 403.4 L522.1 406.7 L526.2 409.8 L530.2 412.8 L533.9 415.6 L537.3 418.2 L540.3 420.4 L542.9 422.4 L545.0 424.0" fill="none" stroke="#ff6a5a" stroke-width="1.05" stroke-linejoin="round" />
<path d="M51.5 293.7 L52.2 293.6 L53.0 293.4 L54.0 293.2 L55.1 292.9 L56.3 292.7 L57.5 292.4 L58.8 292.1 L60.1 291.8 L61.5 291.5 L62.7 291.2 L64.0 290.9 L65.1 290.6 L66.2 290.3 L67.3 290.0 L68.3 289.7 L69.4 289.4 L70.4 289.1 L71.5 288.8 L72.5 288.5 L73.5 288.2 L74.6 287.9 L75.6 287.5 L76.7 287.2 L77.7 286.8 L78.8 286.4 L79.8 286.1 L80.9 285.7 L81.9 285.3 L83.0 284.9 L84.0 284.5 L85.1 284.1 L86.1 283.7 L87.2 283.3 L88.2 282.8 L89.3 282.3 L90.3 281.8 L91.3 281.3 L92.4 280.7 L93.4 280.2 L94.5 279.6 L95.5 279.1 L96.5 278.5 L97.6 277.8 L98.6 277.2 L99.7 276.5 L100.7 275.8 L101.8 275.0 L102.8 274.2 L103.9 273.4 L104.9 272.5 L106.0 271.6 L107.1 270.6 L108.2 269.7 L109.3 268.7 L110.3 267.6 L111.4 266.5 L112.4 265.4 L113.4 264.2 L114.4 263.0 L115.4 261.7 L116.3 260.4 L117.2 258.9 L118.1 257.5 L119.0 255.9 L119.9 254.3 L120.7 252.7 L121.5 251.1 L122.3 249.4 L123.1 247.8 L123.9 246.1 L124.7 244.4 L125.4 242.8 L126.1 241.2 L126.8 239.5 L127.5 237.8 L128.2 236.0 L128.9 234.3 L129.5 232.6 L130.1 230.9 L130.7 229.2 L131.3 227.5 L131.9 225.8 L132.5 224.2 L133.0 222.7 L133.5 221.2 L134.0 219.6 L134.5 218.1 L135.0 216.6 L135.4 215.1 L135.8 213.6 L136.2 212.2 L136.6 210.9 L137.0 209.6 L137.3 208.4 L137.7 207.4 L138.0 206.4 L138.3 205.6 L138.6 204.8 L138.8 204.2 L139.0 203.7 L139.3 203.2 L139.5 202.8 L139.6 202.4 L139.8 202.1 L140.0 201.8 L140.2 201.6 L140.3 201.3 L140.5 201.0 L140.7 200.7 L140.8 200.5 L141.0 200.2 L141.1 200.0 L141.3 199.9 L141.4 199.7 L141.6 199.6 L141.7 199.5 L141.9 199.4 L142.0 199.4 L142.1 199.3 L142.3 199.3 L142.5 199.3 L142.6 199.3 L142.8 199.3 L142.9 199.4 L143.0 199.4 L143.2 199.5 L143.4 199.6 L143.5 199.8 L143.7 200.0 L143.8 200.2 L144.0 200.5 L144.2 200.8 L144.4 201.1 L144.6 201.4 L144.7 201.8 L144.9 202.1 L145.1 202.5 L145.3 202.9 L145.5 203.4 L145.7 204.0 L146.0 204.7 L146.2 205.5 L146.5 206.5 L146.8 207.6 L147.1 208.9 L147.5 210.4 L147.9 212.1 L148.2 213.9 L148.6 215.8 L149.1 217.8 L149.5 219.9 L149.9 222.0 L150.4 224.1 L150.9 226.2 L151.3 228.3 L151.8 230.3 L152.3 232.3 L152.8 234.4 L153.3 236.5 L153.8 238.7 L154.3 240.8 L154.8 243.0 L155.3 245.2 L155.9 247.3 L156.4 249.4 L157.0 251.5 L157.5 253.5 L158.1 255.4 L158.7 257.3 L159.3 259.1 L159.9 261.0 L160.5 262.8 L161.1 264.6 L161.8 266.3 L162.4 268.0 L163.0 269.6 L163.7 271.2 L164.3 272.7 L165.0 274.1 L165.6 275.5 L166.2 276.8 L166.8 278.0 L167.5 279.1 L168.1 280.2 L168.7 281.2 L169.3 282.2 L169.9 283.1 L170.6 283.9 L171.2 284.7 L171.9 285.4 L172.5 286.1 L173.2 286.8 L173.9 287.4 L174.6 288.0 L175.3 288.5 L176.0 289.0 L176.8 289.4 L177.5 289.8 L178.3 290.1 L179.0 290.3 L179.8 290.5 L180.5 290.7 L181.3 290.8 L182.0 290.8 L182.7 290.8 L183.4 290.7 L184.1 290.5 L184.8 290.3 L185.5 290.1 L186.2 289.8 L186.9 289.4 L187.6 289.0 L188.3 288.5 L189.1 288.0 L189.9 287.4 L190.8 286.8 L191.7 286.1 L192.7 285.4 L193.7 284.6 L194.7 283.8 L195.7 282.9 L196.8 282.0 L197.9 281.0 L199.0 280.0 L200.1 278.9 L201.2 277.8 L202.2 276.7 L203.3 275.5 L204.4 274.3 L205.4 273.0 L206.5 271.7 L207.6 270.3 L208.7 268.9 L209.8 267.4 L210.8 265.9 L211.9 264.4 L212.9 262.8 L213.9 261.2 L214.9 259.6 L215.9 257.9 L216.8 256.2 L217.7 254.4 L218.6 252.6 L219.5 250.7 L220.4 248.8 L221.2 246.9 L222.0 245.0 L222.8 243.0 L223.6 241.1 L224.4 239.1 L225.2 237.2 L225.9 235.3 L226.6 233.4 L227.3 231.5 L228.0 229.5 L228.7 227.6 L229.3 225.6 L229.9 223.7 L230.5 221.8 L231.1 219.9 L231.7 218.0 L232.3 216.2 L232.9 214.4 L233.5 212.7 L234.1 211.0 L234.7 209.3 L235.3 207.7 L235.9 206.0 L236.4 204.4 L237.0 202.8 L237.6 201.3 L238.1 199.9 L238.6 198.5 L239.1 197.3 L239.6 196.1 L240.0 195.1 L240.4 194.2 L240.8 193.4 L241.1 192.8 L241.4 192.2 L241.7 191.7 L242.0 191.3 L242.2 190.9 L242.5 190.6 L242.7 190.3 L243.0 190.1 L243.2 189.8 L243.5 189.5 L243.8 189.2 L244.0 189.0 L244.3 188.7 L244.5 188.6 L244.7 188.4 L244.9 188.2 L245.2 188.1 L245.4 188.0 L245.6 188.0 L245.8 187.9 L246.1 187.9 L246.3 187.9 L246.5 187.9 L246.8 187.9 L247.0 188.0 L247.2 188.1 L247.4 188.2 L247.6 188.3 L247.9 188.5 L248.1 188.6 L248.3 188.8 L248.5 189.0 L248.8 189.3 L249.0 189.5 L249.2 189.8 L249.5 190.1 L249.7 190.4 L250.0 190.7 L250.2 191.1 L250.5 191.5 L250.7 191.9 L251.0 192.3 L251.2 192.7 L251.5 193.1 L251.7 193.6 L252.0 194.0 L252.2 194.4 L252.4 194.8 L252.6 195.1 L252.8 195.4 L253.0 195.7 L253.2 196.0 L253.4 196.4 L253.7 196.9 L253.9 197.5 L254.2 198.2 L254.6 199.0 L255.0 200.0 L255.5 201.2 L256.0 202.5 L256.5 203.9 L257.1 205.4 L257.7 207.1 L258.4 208.8 L259.0 210.6 L259.7 212.4 L260.4 214.3 L261.1 216.2 L261.9 218.1 L262.6 220.0 L263.4 221.9 L264.1 224.0 L265.0 226.1 L265.8 228.3 L266.6 230.5 L267.5 232.8 L268.4 235.0 L269.2 237.2 L270.1 239.3 L271.0 241.4 L271.9 243.3 L272.7 245.2 L273.5 247.0 L274.4 248.6 L275.2 250.3 L276.0 251.9 L276.9 253.4 L277.7 254.9 L278.5 256.3 L279.4 257.7 L280.2 259.0 L281.0 260.3 L281.9 261.6 L282.7 262.8 L283.5 264.0 L284.3 265.1 L285.2 266.2 L286.0 267.2 L286.8 268.1 L287.6 269.1 L288.4 270.0 L289.3 270.8 L290.1 271.7 L291.0 272.5 L291.9 273.3 L292.8 274.1 L293.7 274.9 L294.7 275.6 L295.6 276.3 L296.6 277.0 L297.6 277.7 L298.6 278.3 L299.6 278.9 L300.7 279.5 L301.8 280.1 L302.9 280.7 L304.1 281.2 L305.3 281.7 L306.6 282.2 L307.9 282.7 L309.3 283.2 L310.8 283.7 L312.3 284.1 L313.8 284.6 L315.3 284.9 L316.8 285.3 L318.4 285.6 L319.9 285.9 L321.4 286.1 L322.9 286.2 L324.4 286.3 L325.9 286.3 L327.4 286.2 L328.9 286.1 L330.4 286.0 L331.9 285.8 L333.3 285.6 L334.8 285.3 L336.3 285.1 L337.7 284.8 L339.1 284.5 L340.5 284.2 L341.8 283.9 L343.2 283.5 L344.5 283.1 L345.7 282.7 L347.0 282.3 L348.2 281.8 L349.4 281.4 L350.7 280.9 L351.9 280.4 L353.1 280.0 L354.3 279.5 L355.6 279.1 L356.8 278.7 L358.1 278.3 L359.3 277.9 L360.4 277.5 L361.6 277.1 L362.8 276.7 L364.1 276.3 L365.3 275.9 L366.6 275.4 L367.9 275.0 L369.3 274.6 L370.7 274.1 L372.2 273.6 L373.7 273.1 L375.3 272.6 L376.8 272.1 L378.5 271.6 L380.1 271.0 L381.8 270.5 L383.5 269.9 L385.3 269.4 L387.1 268.9 L388.9 268.3 L390.8 267.8 L392.7 267.3 L394.7 266.7 L396.7 266.2 L398.8 265.6 L401.0 265.1 L403.1 264.5 L405.3 264.0 L407.4 263.4 L409.6 262.9 L411.7 262.5 L413.8 262.0 L415.9 261.6 L417.9 261.2 L420.0 260.9 L422.0 260.6 L424.0 260.3 L426.0 260.0 L428.0 259.8 L429.9 259.5 L431.9 259.3 L433.9 259.0 L435.9 258.8 L438.0 258.6 L440.0 258.3 L442.1 258.0 L444.1 257.8 L446.2 257.5 L448.3 257.2 L450.3 256.9 L452.4 256.6 L454.5 256.4 L456.6 256.1 L458.7 255.9 L460.8 255.7 L462.9 255.5 L465.0 255.3 L467.1 255.1 L469.2 255.0 L471.3 254.9 L473.4 254.8 L475.5 254.7 L477.6 254.6 L479.8 254.6 L481.9 254.5 L484.0 254.5 L486.1 254.5 L488.2 254.5 L490.3 254.5 L492.4 254.5 L494.5 254.6 L496.6 254.6 L498.7 254.7 L500.8 254.8 L502.9 254.8 L505.0 255.0 L507.0 255.1 L509.1 255.2 L511.2 255.4 L513.3 255.6 L515.4 255.8 L517.5 256.0 L519.6 256.3 L521.8 256.6 L524.0 257.0 L526.1 257.3 L528.3 257.7 L530.4 258.0 L532.5 258.4 L534.6 258.8 L536.6 259.1 L538.6 259.5 L540.5 259.8 L542.4 260.1 L544.2 260.4 L545.9 260.7 L547.7 261.1 L549.4 261.4 L551.0 261.7 L552.7 262.0 L554.3 262.3 L555.9 262.5 L557.5 262.8 L559.0 263.1 L560.6 263.3 L562.2 263.5 L563.7 263.8 L565.2 264.0 L566.7 264.2 L568.1 264.5 L569.6 264.7 L571.0 264.9 L572.4 265.0 L573.9 265.2 L575.3 265.2 L576.7 265.3 L578.2 265.3 L579.7 265.3 L581.2 265.2 L582.7 265.0 L584.2 264.9 L585.7 264.7 L587.2 264.5 L588.6 264.2 L590.1 263.9 L591.6 263.7 L593.0 263.4 L594.4 263.1 L595.8 262.8 L597.1 262.5 L598.5 262.2 L599.8 261.8 L601.0 261.5 L602.3 261.1 L603.5 260.7 L604.7 260.3 L606.0 259.9 L607.2 259.5 L608.4 259.1 L609.6 258.7 L610.9 258.3 L612.1 257.9 L613.4 257.5 L614.6 257.1 L615.8 256.7 L617.0 256.2 L618.2 255.8 L619.4 255.4 L620.7 255.0 L621.9 254.6 L623.2 254.2 L624.6 253.8 L626.0 253.5 L627.5 253.2 L629.0 252.8 L630.6 252.5 L632.2 252.2 L633.9 251.9 L635.6 251.6 L637.3 251.3 L639.0 251.0 L640.6 250.8 L642.2 250.6 L643.7 250.4 L645.2 250.3 L646.6 250.2 L647.9 250.2 L649.1 250.1 L650.4 250.2 L651.5 250.2 L652.7 250.3 L653.9 250.3 L655.0 250.5 L656.3 250.6 L657.5 250.7 L658.9 250.8 L660.3 251.0 L661.8 251.2 L663.4 251.4 L665.0 251.6 L666.6 251.8 L668.3 252.1 L670.0 252.4 L671.8 252.7 L673.5 253.0 L675.3 253.2 L677.0 253.5 L678.7 253.8 L680.4 254.0 L682.1 254.2 L683.8 254.5 L685.5 254.7 L687.3 254.9 L689.0 255.2 L690.8 255.4 L692.5 255.6 L694.2 255.8 L695.8 256.0 L697.4 256.2 L699.0 256.3 L700.5 256.5 L701.9 256.6 L703.3 256.8 L704.6 256.9 L705.9 257.0 L707.1 257.1 L708.4 257.1 L709.6 257.2 L710.8 257.3 L711.9 257.3 L713.1 257.4 L714.4 257.4 L715.6 257.5 L716.8 257.6 L718.1 257.6 L719.3 257.7 L720.4 257.7 L721.6 257.7 L722.8 257.8 L724.1 257.8 L725.3 257.8 L726.6 257.8 L727.9 257.8 L729.3 257.8 L730.7 257.8 L732.2 257.8 L733.8 257.7 L735.4 257.7 L737.0 257.6 L738.7 257.5 L740.4 257.4 L742.1 257.3 L743.9 257.2 L745.6 257.1 L747.4 257.0 L749.1 256.9 L750.8 256.8 L752.6 256.7 L754.5 256.6 L756.4 256.4 L758.4 256.3 L760.4 256.1 L762.4 256.0 L764.3 255.8 L766.1 255.7 L767.8 255.6 L769.2 255.5 L770.5 255.4 L771.5 255.3" fill="none" stroke="#2f9a2f" stroke-width="1.2" stroke-linejoin="round" />
<path d="M355.6 279.1 L356.3 278.9 L357.2 278.6 L358.2 278.2 L359.3 277.9 L360.6 277.4 L361.9 277.0 L363.3 276.5 L364.7 276.0 L366.2 275.6 L367.7 275.1 L369.2 274.6 L370.7 274.1 L372.2 273.6 L373.7 273.1 L375.3 272.6 L376.8 272.1 L378.5 271.6 L380.1 271.0 L381.8 270.5 L383.5 269.9 L385.3 269.4 L387.1 268.9 L388.9 268.3 L390.8 267.8 L392.7 267.3 L394.7 266.7 L396.7 266.2 L398.8 265.6 L401.0 265.1 L403.1 264.5 L405.3 264.0 L407.4 263.4 L409.6 262.9 L411.7 262.5 L413.8 262.0 L415.9 261.6 L417.9 261.2 L420.0 260.9 L422.0 260.6 L424.0 260.3 L426.0 260.0 L428.0 259.8 L429.9 259.5 L431.9 259.3 L433.9 259.0 L435.9 258.8 L438.0 258.6 L440.0 258.3 L442.1 258.0 L444.1 257.8 L446.2 257.5 L448.3 257.2 L450.3 256.9 L452.4 256.7 L454.5 256.4 L456.6 256.1 L458.7 255.9 L460.8 255.7 L462.9 255.5 L465.0 255.3 L467.1 255.1 L469.2 255.0 L471.3 254.9 L473.4 254.7 L475.5 254.6 L477.6 254.6 L479.8 254.5 L481.9 254.4 L484.0 254.4 L486.1 254.3 L488.2 254.3 L490.3 254.3 L492.4 254.3 L494.5 254.3 L496.6 254.4 L498.7 254.4 L500.8 254.5 L502.9 254.6 L505.0 254.6 L507.0 254.7 L509.1 254.9 L511.2 255.0 L513.3 255.1 L515.4 255.3 L517.5 255.5 L519.7 255.7 L521.9 255.9 L524.1 256.2 L526.4 256.5 L528.6 256.8 L530.8 257.1 L532.9 257.3 L534.9 257.6 L536.9 257.9 L538.8 258.1 L540.5 258.3 L542.1 258.5 L543.6 258.6 L545.0 258.8 L546.3 258.9 L547.5 259.1 L548.7 259.2 L549.8 259.3 L550.9 259.4 L552.1 259.5 L553.2 259.6 L554.4 259.7 L555.6 259.8 L556.9 259.9 L558.1 260.0 L559.4 260.1 L560.6 260.1 L561.9 260.2 L563.2 260.3 L564.4 260.3 L565.7 260.4 L566.9 260.4 L568.2 260.4 L569.4 260.3 L570.7 260.3 L572.0 260.2 L573.2 260.2 L574.5 260.1 L575.7 259.9 L577.0 259.8 L578.2 259.7 L579.4 259.5 L580.7 259.3 L581.9 259.1 L583.2 258.9 L584.4 258.6 L585.7 258.3 L587.0 258.0 L588.2 257.6 L589.5 257.2 L590.7 256.8 L592.0 256.4 L593.2 255.9 L594.5 255.4 L595.8 254.9 L597.0 254.4 L598.3 253.9 L599.5 253.3 L600.8 252.8 L602.1 252.2 L603.3 251.7 L604.6 251.1 L605.8 250.5 L607.1 249.8 L608.3 249.2 L609.6 248.6 L610.9 247.9 L612.1 247.2 L613.4 246.6 L614.6 245.9 L615.9 245.2 L617.1 244.5 L618.4 243.9 L619.6 243.2 L620.8 242.5 L622.0 241.9 L623.2 241.2 L624.4 240.5 L625.7 239.7 L626.9 239.0 L628.2 238.2 L629.6 237.3 L631.0 236.4 L632.5 235.4 L634.0 234.4 L635.6 233.2 L637.3 232.1 L639.0 230.9 L640.7 229.7 L642.4 228.4 L644.0 227.2 L645.7 226.0 L647.3 224.8 L648.8 223.7 L650.3 222.6 L651.7 221.6 L653.1 220.6 L654.4 219.6 L655.7 218.6 L656.9 217.6 L658.1 216.7 L659.4 215.8 L660.6 214.9 L661.7 214.0 L662.9 213.1 L664.1 212.2 L665.3 211.3 L666.5 210.4 L667.6 209.6 L668.6 208.9 L669.7 208.1 L670.7 207.4 L671.8 206.7 L672.8 205.9 L673.9 205.1 L675.1 204.3 L676.3 203.4 L677.6 202.4 L679.0 201.3 L680.3 200.2 L681.5 199.3 L682.6 198.4 L683.7 197.4 L684.8 196.5 L686.1 195.4 L687.5 194.2 L689.2 192.8 L691.3 191.2 L693.7 189.2 L696.6 186.9 L700.0 184.2 L704.3 180.9 L709.4 176.9 L715.4 172.3 L721.8 167.3 L728.6 162.1 L735.5 156.7 L742.3 151.5 L748.8 146.4 L754.9 141.7 L760.3 137.6 L764.8 134.1 L768.3 131.4" fill="none" stroke="#5cb85c" stroke-width="1.25" stroke-dasharray="14 5" stroke-linejoin="round" />
<path d="M455.0 113.8 L457.1 115.6 L459.8 117.9 L462.9 120.5 L466.3 123.4 L470.1 126.6 L474.1 130.0 L478.3 133.6 L482.6 137.2 L487.0 141.0 L491.4 144.7 L495.8 148.4 L500.0 152.0 L504.3 155.7 L509.0 159.6 L513.8 163.8 L518.8 168.1 L523.9 172.4 L528.9 176.8 L533.9 181.0 L538.7 185.1 L543.2 189.0 L547.3 192.5 L551.1 195.7 L554.3 198.5 L557.0 200.8 L559.2 202.8 L561.0 204.4 L562.4 205.7 L563.6 206.8 L564.6 207.8 L565.5 208.6 L566.4 209.3 L567.2 210.1 L568.2 210.8 L569.3 211.6 L570.7 212.6 L572.2 213.6 L573.8 214.6 L575.5 215.6 L577.1 216.5 L578.8 217.5 L580.5 218.4 L582.2 219.3 L584.0 220.1 L585.7 221.0 L587.4 221.8 L589.1 222.6 L590.8 223.4 L592.5 224.2 L594.1 224.9 L595.8 225.6 L597.5 226.3 L599.2 227.0 L600.8 227.7 L602.5 228.3 L604.2 228.9 L605.9 229.6 L607.5 230.2 L609.2 230.8 L610.9 231.4 L612.6 232.0 L614.3 232.6 L615.9 233.2 L617.6 233.8 L619.3 234.4 L621.0 234.9 L622.7 235.5 L624.4 236.1 L626.0 236.6 L627.7 237.1 L629.4 237.7 L631.0 238.2 L632.6 238.7 L634.3 239.2 L635.9 239.7 L637.5 240.2 L639.1 240.7 L640.6 241.2 L642.2 241.7 L643.8 242.2 L645.4 242.6 L647.0 243.1 L648.7 243.5 L650.3 244.0 L651.9 244.4 L653.6 244.9 L655.3 245.3 L656.9 245.8 L658.6 246.2 L660.3 246.6 L662.0 247.0 L663.7 247.4 L665.4 247.8 L667.0 248.2 L668.7 248.6 L670.4 249.0 L672.1 249.4 L673.8 249.8 L675.5 250.2 L677.2 250.6 L678.9 251.0 L680.6 251.3 L682.3 251.7 L684.0 252.1 L685.7 252.4 L687.3 252.7 L688.9 253.0 L690.5 253.3 L692.0 253.6 L693.6 253.8 L695.1 254.0 L696.5 254.2 L698.0 254.4 L699.4 254.5 L700.8 254.7 L702.3 254.8 L703.7 254.9 L705.1 255.1 L706.5 255.2 L708.0 255.3 L709.5 255.4 L710.9 255.5 L712.3 255.6 L713.8 255.7 L715.2 255.8 L716.6 255.8 L718.1 255.9 L719.5 255.9 L721.0 256.0 L722.5 256.0 L724.0 256.0 L725.6 256.0 L727.2 256.0 L728.7 256.0 L730.3 255.9 L731.9 255.9 L733.5 255.9 L735.2 255.8 L736.8 255.7 L738.5 255.7 L740.3 255.6 L742.0 255.5 L743.8 255.4 L745.7 255.3 L747.7 255.2 L749.9 255.0 L752.2 254.9 L754.7 254.7 L757.1 254.5 L759.6 254.4 L761.9 254.2 L764.2 254.0 L766.3 253.8 L768.1 253.7 L769.7 253.6 L770.9 253.5" fill="none" stroke="#ff4fa8" stroke-width="1.25" stroke-dasharray="14 5" stroke-linejoin="round" />
<path d="M51.5 379.5 L52.1 378.9 L52.8 378.3 L53.7 377.5 L54.6 376.7 L55.6 375.8 L56.7 374.8 L57.9 373.7 L59.2 372.5 L60.6 371.2 L62.0 369.8 L63.5 368.3 L65.1 366.7 L66.8 364.9 L68.6 362.9 L70.6 360.7 L72.6 358.4 L74.8 356.0 L77.0 353.5 L79.2 351.0 L81.5 348.5 L83.7 346.0 L86.0 343.6 L88.2 341.2 L90.3 339.0 L92.4 336.9 L94.5 334.8 L96.6 332.7 L98.7 330.7 L100.8 328.7 L102.9 326.7 L104.9 324.7 L107.0 322.8 L109.1 320.9 L111.2 319.0 L113.3 317.1 L115.4 315.2 L117.5 313.3 L119.7 311.3 L122.0 309.4 L124.3 307.4 L126.5 305.5 L128.8 303.6 L131.0 301.7 L133.1 299.9 L135.2 298.2 L137.1 296.6 L138.9 295.1 L140.5 293.8 L142.0 292.6 L143.3 291.5 L144.5 290.6 L145.5 289.7 L146.5 289.0 L147.4 288.3 L148.3 287.7 L149.1 287.1 L149.8 286.5 L150.6 286.0 L151.3 285.5 L152.0 285.0 L152.7 284.5 L153.3 284.1 L153.9 283.7 L154.4 283.3 L154.9 283.0 L155.3 282.7 L155.8 282.5 L156.2 282.2 L156.6 282.0 L157.1 281.8 L157.6 281.5 L158.1 281.3 L158.6 281.1 L159.2 280.8 L159.8 280.6 L160.3 280.3 L160.9 280.1 L161.5 279.9 L162.1 279.7 L162.7 279.5 L163.2 279.4 L163.8 279.3 L164.4 279.2 L165.0 279.2 L165.6 279.2 L166.1 279.3 L166.7 279.4 L167.3 279.5 L167.8 279.7 L168.4 279.8 L169.0 280.1 L169.5 280.3 L170.1 280.6 L170.7 280.9 L171.4 281.2 L172.0 281.5 L172.7 281.9 L173.3 282.2 L174.0 282.6 L174.7 283.1 L175.4 283.5 L176.2 284.0 L176.9 284.5 L177.6 285.1 L178.4 285.6 L179.1 286.2 L179.9 286.8 L180.7 287.5 L181.4 288.2 L182.1 288.8 L182.8 289.4 L183.4 290.1 L184.0 290.7 L184.7 291.4 L185.5 292.2 L186.3 293.1 L187.2 294.0 L188.2 295.1 L189.4 296.3 L190.8 297.6 L192.4 299.1 L194.1 300.8 L196.0 302.6 L198.1 304.6 L200.2 306.7 L202.5 308.8 L204.8 310.9 L207.1 313.1 L209.3 315.3 L211.6 317.4 L213.8 319.5 L215.9 321.5 L218.0 323.4 L220.0 325.4 L222.0 327.3 L224.1 329.2 L226.1 331.2 L228.1 333.1 L230.2 335.0 L232.2 336.8 L234.1 338.7 L236.1 340.5 L238.1 342.3 L240.0 344.0 L241.9 345.7 L243.8 347.3 L245.7 348.9 L247.5 350.5 L249.4 352.1 L251.2 353.6 L253.1 355.1 L254.9 356.6 L256.7 358.1 L258.5 359.6 L260.2 361.2 L262.0 362.7 L263.8 364.3 L265.5 365.8 L267.3 367.4 L269.0 368.9 L270.7 370.5 L272.4 372.1 L274.1 373.6 L275.8 375.2 L277.5 376.7 L279.1 378.3 L280.8 379.8 L282.4 381.4 L284.0 382.9 L285.6 384.4 L287.1 385.9 L288.6 387.4 L290.1 388.9 L291.6 390.4 L293.1 391.9 L294.6 393.4 L296.2 395.0 L297.7 396.6 L299.3 398.3 L301.0 400.0 L302.8 401.8 L304.6 403.8 L306.6 405.9 L308.6 408.0 L310.7 410.2 L312.7 412.4 L314.7 414.5 L316.7 416.6 L318.5 418.6 L320.2 420.4 L321.7 422.1 L323.0 423.5 L324.1 424.8 L325.1 425.9 L326.0 426.9 L326.7 427.8 L327.3 428.5 L327.9 429.2 L328.3 429.8 L328.7 430.4 L329.1 430.8 L329.4 431.2 L329.7 431.6 L330.0 432.0" fill="none" stroke="#4a4aff" stroke-width="1" stroke-dasharray="3 2.5" stroke-linejoin="round" />
<path d="M51.5 382.8 L52.1 382.3 L52.8 381.8 L53.7 381.1 L54.6 380.4 L55.6 379.7 L56.7 378.8 L57.9 377.9 L59.2 376.8 L60.6 375.7 L62.0 374.5 L63.5 373.2 L65.1 371.7 L66.8 370.1 L68.6 368.3 L70.6 366.3 L72.6 364.1 L74.8 361.9 L77.0 359.6 L79.2 357.3 L81.5 355.0 L83.7 352.8 L86.0 350.6 L88.2 348.5 L90.3 346.6 L92.4 344.8 L94.6 343.0 L96.8 341.2 L99.0 339.5 L101.1 337.8 L103.3 336.1 L105.5 334.5 L107.6 333.0 L109.7 331.6 L111.7 330.2 L113.6 328.9 L115.4 327.7 L117.1 326.6 L118.8 325.6 L120.4 324.6 L122.0 323.8 L123.5 323.0 L125.0 322.3 L126.4 321.6 L127.8 321.0 L129.1 320.5 L130.4 319.9 L131.7 319.5 L133.0 319.0 L134.2 318.6 L135.4 318.3 L136.6 318.0 L137.7 317.8 L138.8 317.6 L139.9 317.4 L140.9 317.3 L141.9 317.3 L142.8 317.2 L143.8 317.2 L144.6 317.2 L145.5 317.2 L146.3 317.2 L147.0 317.2 L147.7 317.2 L148.4 317.3 L149.0 317.3 L149.6 317.4 L150.1 317.6 L150.7 317.8 L151.2 318.0 L151.8 318.3 L152.4 318.6 L153.0 319.0 L153.6 319.5 L154.3 319.9 L154.9 320.5 L155.5 321.1 L156.2 321.7 L156.8 322.4 L157.4 323.1 L158.1 323.9 L158.7 324.7 L159.3 325.7 L160.0 326.6 L160.6 327.7 L161.2 328.9 L161.9 330.1 L162.5 331.5 L163.2 333.0 L163.9 334.5 L164.5 336.1 L165.2 337.7 L165.8 339.2 L166.4 340.8 L167.0 342.4 L167.6 343.9 L168.1 345.3 L168.6 346.7 L169.1 348.0 L169.5 349.4 L170.0 350.7 L170.4 352.0 L170.8 353.2 L171.2 354.5 L171.6 355.8 L171.9 357.1 L172.3 358.4 L172.6 359.7 L173.0 361.0 L173.3 362.3 L173.7 363.7 L174.0 365.0 L174.3 366.4 L174.6 367.8 L174.9 369.2 L175.2 370.5 L175.5 371.9 L175.7 373.2 L176.0 374.5 L176.2 375.8 L176.5 377.0 L176.7 378.2 L177.0 379.4 L177.2 380.6 L177.4 381.8 L177.6 382.9 L177.8 384.0 L178.0 385.1 L178.2 386.2 L178.4 387.2 L178.6 388.2 L178.8 389.1 L179.0 390.0 L179.2 390.8 L179.4 391.6 L179.6 392.4 L179.8 393.1 L180.0 393.8 L180.3 394.5 L180.5 395.1 L180.6 395.6 L180.8 396.1 L181.0 396.6 L181.1 397.0 L181.2 397.3 L181.3 397.0 L181.4 396.6 L181.6 396.2 L181.8 395.8 L181.9 395.3 L182.1 394.7 L182.3 394.1 L182.6 393.4 L182.8 392.7 L183.0 391.9 L183.3 391.0 L183.5 390.0 L183.7 388.9 L184.0 387.8 L184.3 386.5 L184.5 385.2 L184.8 383.8 L185.1 382.4 L185.4 380.9 L185.7 379.3 L186.0 377.8 L186.3 376.2 L186.7 374.6 L187.0 373.0 L187.4 371.4 L187.7 369.6 L188.1 367.8 L188.5 366.0 L188.9 364.1 L189.4 362.2 L189.8 360.4 L190.2 358.5 L190.7 356.8 L191.1 355.1 L191.6 353.5 L192.0 352.0 L192.4 350.7 L192.9 349.4 L193.3 348.3 L193.7 347.2 L194.1 346.2 L194.6 345.3 L195.0 344.3 L195.5 343.4 L196.0 342.5 L196.5 341.5 L197.0 340.5 L197.6 339.4 L198.2 338.3 L198.9 337.1 L199.6 335.9 L200.3 334.7 L201.1 333.5 L201.8 332.2 L202.6 331.0 L203.4 329.8 L204.2 328.6 L205.0 327.5 L205.8 326.4 L206.5 325.3 L207.2 324.3 L208.0 323.3 L208.7 322.4 L209.4 321.4 L210.2 320.5 L210.9 319.7 L211.6 318.8 L212.4 317.9 L213.1 317.1 L213.8 316.3 L214.6 315.5 L215.3 314.7 L216.0 313.9 L216.8 313.1 L217.5 312.4 L218.2 311.6 L219.0 310.9 L219.7 310.2 L220.4 309.5 L221.2 308.8 L221.9 308.1 L222.6 307.5 L223.4 306.8 L224.1 306.2 L224.8 305.6 L225.6 305.0 L226.3 304.4 L227.0 303.9 L227.8 303.3 L228.5 302.8 L229.2 302.3 L230.0 301.7 L230.7 301.2 L231.4 300.7 L232.2 300.2 L232.9 299.7 L233.6 299.2 L234.4 298.7 L235.1 298.2 L235.8 297.7 L236.6 297.2 L237.3 296.8 L238.0 296.3 L238.8 295.8 L239.5 295.3 L240.2 294.9 L241.0 294.4 L241.7 294.0 L242.4 293.6 L243.2 293.1 L243.9 292.7 L244.6 292.3 L245.4 291.9 L246.1 291.5 L246.8 291.1 L247.6 290.7 L248.3 290.3 L249.0 289.9 L249.8 289.5 L250.5 289.1 L251.2 288.7 L252.0 288.3 L252.7 288.0 L253.5 287.6 L254.2 287.2 L255.0 286.8 L255.7 286.5 L256.4 286.1 L257.2 285.8 L257.9 285.4 L258.7 285.0 L259.4 284.7 L260.1 284.4 L260.9 284.0 L261.6 283.7 L262.3 283.3 L263.1 283.0 L263.8 282.7 L264.5 282.4 L265.3 282.0 L266.0 281.7 L266.7 281.4 L267.5 281.1 L268.2 280.8 L268.9 280.5 L269.7 280.2 L270.4 279.9 L271.1 279.7 L271.9 279.4 L272.6 279.1 L273.3 278.9 L274.1 278.6 L274.8 278.3 L275.5 278.1 L276.3 277.8 L277.0 277.6 L277.7 277.4 L278.5 277.1 L279.2 276.9 L279.9 276.7 L280.7 276.4 L281.4 276.2 L282.1 276.0 L282.9 275.8 L283.6 275.6 L284.3 275.4 L285.1 275.2 L285.8 275.0 L286.5 274.8 L287.3 274.6 L288.0 274.5 L288.7 274.3 L289.5 274.1 L290.2 274.0 L290.9 273.8 L291.7 273.7 L292.4 273.6 L293.1 273.4 L293.9 273.3 L294.6 273.2 L295.3 273.1 L296.1 273.0 L296.8 272.9 L297.6 272.8 L298.3 272.7 L299.1 272.6 L299.8 272.6 L300.5 272.5 L301.3 272.4 L302.0 272.4 L302.8 272.3 L303.5 272.3 L304.2 272.3 L305.0 272.2 L305.7 272.2 L306.4 272.2 L307.1 272.2 L307.8 272.2 L308.5 272.2 L309.2 272.2 L310.0 272.2 L310.7 272.2 L311.5 272.3 L312.3 272.3 L313.1 272.3 L313.9 272.4 L314.7 272.4 L315.5 272.4 L316.3 272.5 L317.1 272.6 L318.0 272.6 L318.9 272.7 L319.8 272.7 L320.8 272.8 L321.9 272.9 L323.0 273.0 L324.2 273.1 L325.6 273.2 L327.0 273.3 L328.4 273.5 L329.9 273.6 L331.5 273.7 L333.0 273.9 L334.6 274.0 L336.1 274.2 L337.6 274.3 L339.1 274.4 L340.5 274.6 L341.8 274.8 L343.2 274.9 L344.4 275.1 L345.7 275.3 L347.0 275.4 L348.2 275.6 L349.4 275.8 L350.7 276.0 L351.9 276.1 L353.1 276.3 L354.3 276.5 L355.6 276.6 L356.9 276.7 L358.3 276.9 L359.7 277.0 L361.2 277.1 L362.7 277.2 L364.1 277.3 L365.5 277.4 L366.8 277.5 L368.0 277.6 L369.1 277.7 L370.0 277.7 L370.7 277.8" fill="none" stroke="#4a4aff" stroke-width="1" stroke-linejoin="round" />
<path d="M497.0 428.0 L497.2 427.9 L497.3 427.9 L497.5 427.9 L497.7 427.9 L498.0 427.9 L498.3 427.8 L498.6 427.7 L498.9 427.4 L499.4 427.0 L499.8 426.3 L500.4 425.5 L501.0 424.4 L501.7 423.0 L502.5 421.4 L503.3 419.6 L504.3 417.6 L505.2 415.4 L506.3 413.1 L507.3 410.7 L508.4 408.3 L509.5 405.8 L510.6 403.3 L511.8 400.8 L512.9 398.3 L514.1 395.8 L515.3 393.2 L516.5 390.4 L517.8 387.6 L519.1 384.8 L520.4 381.9 L521.7 379.1 L523.0 376.3 L524.3 373.6 L525.6 371.0 L526.9 368.4 L528.1 366.1 L529.3 363.9 L530.5 361.7 L531.7 359.5 L532.9 357.5 L534.1 355.5 L535.2 353.6 L536.4 351.7 L537.5 350.0 L538.6 348.3 L539.6 346.8 L540.7 345.3 L541.7 344.0 L542.7 342.8 L543.6 341.8 L544.5 340.9 L545.3 340.1 L546.1 339.4 L546.9 338.8 L547.7 338.2 L548.5 337.7 L549.3 337.2 L550.1 336.7 L551.0 336.2 L551.9 335.6 L552.8 335.0 L553.8 334.6 L554.8 334.1 L555.8 333.7 L556.9 333.4 L557.9 333.0 L558.9 332.6 L560.0 332.2 L560.9 331.7 L561.9 331.1 L562.8 330.5 L563.7 329.8 L564.5 329.0 L565.3 328.1 L566.1 327.1 L566.8 326.0 L567.5 324.9 L568.2 323.8 L568.8 322.6 L569.5 321.4 L570.2 320.3 L570.8 319.1 L571.5 318.0 L572.2 317.0 L572.9 316.0 L573.6 314.9 L574.4 313.9 L575.1 312.9 L575.9 311.8 L576.6 310.8 L577.3 309.8 L578.0 308.9 L578.7 307.9 L579.4 307.1 L580.1 306.3 L580.7 305.5 L581.3 304.8 L581.8 304.2 L582.4 303.6 L582.9 303.1 L583.4 302.6 L583.8 302.1 L584.3 301.7 L584.8 301.3 L585.3 300.9 L585.8 300.5 L586.4 300.1 L587.0 299.7 L587.6 299.3 L588.3 299.0 L589.1 298.7 L589.8 298.4 L590.6 298.1 L591.3 297.9 L592.1 297.6 L592.9 297.3 L593.6 296.9 L594.4 296.5 L595.1 296.1 L595.8 295.5 L596.5 294.9 L597.1 294.2 L597.8 293.4 L598.4 292.6 L599.0 291.8 L599.6 290.9 L600.2 290.0 L600.8 289.1 L601.4 288.2 L602.1 287.2 L602.7 286.3 L603.3 285.4 L603.9 284.4 L604.6 283.4 L605.3 282.4 L606.0 281.3 L606.7 280.1 L607.4 279.0 L608.1 278.0 L608.7 276.9 L609.3 276.0 L609.9 275.1 L610.4 274.3 L610.9 273.6 L611.3 273.0 L611.7 272.6 L612.0 272.2 L612.2 271.9 L612.5 271.7 L612.7 271.5 L612.8 271.3 L613.0 271.2 L613.2 271.1 L613.4 271.0 L613.6 270.9 L613.8 270.8 L614.0 270.7 L614.2 270.6 L614.4 270.6 L614.7 270.5 L614.9 270.5 L615.1 270.5 L615.3 270.5 L615.5 270.5 L615.7 270.6 L616.0 270.6 L616.2 270.7 L616.5 270.8 L616.8 270.9 L617.1 271.0 L617.5 271.2 L617.8 271.3 L618.2 271.5 L618.5 271.7 L618.9 271.9 L619.3 272.1 L619.7 272.3 L620.1 272.5 L620.5 272.7 L620.9 272.9 L621.3 273.1 L621.7 273.4 L622.1 273.6 L622.5 273.9 L622.9 274.2 L623.3 274.5 L623.8 274.8 L624.2 275.0 L624.6 275.2 L625.1 275.4 L625.5 275.6 L626.0 275.7 L626.5 275.7 L627.0 275.7 L627.5 275.6 L628.1 275.5 L628.6 275.4 L629.2 275.2 L629.7 275.1 L630.2 274.9 L630.8 274.8 L631.3 274.8 L631.7 274.8 L632.2 274.9 L632.6 275.1 L633.0 275.2 L633.4 275.5 L633.7 275.7 L634.0 276.0 L634.4 276.3 L634.7 276.7 L635.0 277.1 L635.3 277.5 L635.7 278.0 L636.0 278.5 L636.4 279.1 L636.8 279.8 L637.2 280.5 L637.6 281.4 L638.1 282.3 L638.5 283.2 L639.0 284.2 L639.4 285.1 L639.9 286.1 L640.3 287.0 L640.7 287.8 L641.1 288.6 L641.5 289.2 L641.9 289.8 L642.2 290.3 L642.5 290.8 L642.8 291.3 L643.1 291.7 L643.4 292.0 L643.7 292.4 L644.0 292.6 L644.3 292.8 L644.6 293.0 L644.9 293.0 L645.2 293.0 L645.5 292.9 L645.8 292.7 L646.1 292.4 L646.4 292.1 L646.8 291.7 L647.1 291.2 L647.4 290.7 L647.7 290.2 L648.0 289.6 L648.3 289.1 L648.7 288.5 L649.0 287.9 L649.3 287.3 L649.7 286.6 L650.0 285.8 L650.3 285.1 L650.7 284.2 L651.0 283.4 L651.4 282.6 L651.7 281.8 L652.1 281.0 L652.5 280.3 L652.9 279.7 L653.3 279.1 L653.7 278.6 L654.2 278.2 L654.7 277.7 L655.2 277.4 L655.7 277.0 L656.2 276.7 L656.7 276.4 L657.2 276.2 L657.7 276.0 L658.1 275.8 L658.6 275.6 L659.0 275.4 L659.4 275.3 L659.7 275.2 L660.1 275.2 L660.4 275.2 L660.7 275.3 L660.9 275.3 L661.2 275.4 L661.5 275.4 L661.8 275.4 L662.1 275.3 L662.4 275.2 L662.8 275.0 L663.2 274.7 L663.6 274.2 L664.0 273.7 L664.4 273.1 L664.8 272.5 L665.2 271.9 L665.6 271.3 L666.1 270.7 L666.5 270.2 L666.9 269.8 L667.4 269.5 L667.8 269.3 L668.2 269.3 L668.7 269.4 L669.1 269.6 L669.5 269.9 L670.0 270.2 L670.4 270.6 L670.9 271.0 L671.3 271.5 L671.7 271.9 L672.1 272.3 L672.5 272.6 L672.9 272.9 L673.3 273.1 L673.6 273.4 L673.9 273.7 L674.2 273.9 L674.5 274.1 L674.8 274.4 L675.0 274.6 L675.3 274.7 L675.6 274.9 L675.9 274.9 L676.2 274.9 L676.6 274.9 L677.0 274.8 L677.4 274.6 L677.8 274.3 L678.2 274.0 L678.7 273.6 L679.1 273.3 L679.5 272.9 L680.0 272.4 L680.4 272.0 L680.9 271.7 L681.3 271.3 L681.7 271.0 L682.1 270.7 L682.5 270.5 L682.9 270.2 L683.3 270.0 L683.7 269.8 L684.1 269.5 L684.4 269.3 L684.8 269.1 L685.2 268.9 L685.5 268.6 L685.9 268.4 L686.2 268.1 L686.6 267.8 L686.9 267.5 L687.3 267.2 L687.6 266.9 L687.9 266.6 L688.3 266.3 L688.6 266.0 L688.9 265.7 L689.2 265.4 L689.5 265.1 L689.7 264.8 L690.0 264.5 L690.2 264.2 L690.5 263.9 L690.7 263.6 L690.9 263.3 L691.1 263.0 L691.2 262.7 L691.4 262.4 L691.6 262.2 L691.8 261.9 L692.0 261.8 L692.3 261.6 L692.5 261.5 L692.8 261.4 L693.1 261.4 L693.3 261.5 L693.7 261.6 L694.0 261.7 L694.3 261.8 L694.6 261.9 L695.0 262.1 L695.3 262.2 L695.6 262.4 L695.9 262.5 L696.2 262.6 L696.6 262.7 L696.9 262.8 L697.2 262.8 L697.5 262.9 L697.7 263.0 L698.0 263.1 L698.3 263.1 L698.7 263.2 L699.0 263.3 L699.3 263.4 L699.6 263.5 L700.0 263.6 L700.4 263.7 L700.8 263.8 L701.2 264.0 L701.6 264.1 L702.1 264.3 L702.5 264.4 L703.0 264.6 L703.4 264.7 L703.9 264.9 L704.3 265.0 L704.6 265.1 L705.0 265.2 L705.3 265.3 L705.6 265.3 L705.9 265.4 L706.1 265.5 L706.3 265.5 L706.6 265.5 L706.8 265.5 L707.0 265.6 L707.2 265.6 L707.5 265.6 L707.7 265.5 L708.0 265.5 L708.3 265.4 L708.6 265.4 L708.9 265.2 L709.2 265.1 L709.6 265.0 L709.9 264.8 L710.3 264.7 L710.6 264.6 L711.0 264.4 L711.3 264.4 L711.7 264.3 L712.0 264.3 L712.3 264.3 L712.7 264.4 L713.1 264.5 L713.4 264.7 L713.8 264.8 L714.1 265.0 L714.5 265.2 L714.9 265.3 L715.2 265.5 L715.6 265.6 L715.9 265.7 L716.2 265.8 L716.6 265.8 L716.9 265.8 L717.2 265.8 L717.5 265.8 L717.8 265.7 L718.2 265.7 L718.5 265.6 L718.8 265.6 L719.1 265.5 L719.4 265.5 L719.7 265.5 L720.0 265.5 L720.3 265.6 L720.6 265.6 L720.9 265.7 L721.2 265.9 L721.6 266.0 L721.9 266.1 L722.2 266.2 L722.5 266.4 L722.8 266.5 L723.1 266.6 L723.4 266.7 L723.8 266.7 L724.1 266.7 L724.4 266.7 L724.7 266.7 L725.0 266.6 L725.3 266.5 L725.6 266.4 L725.9 266.4 L726.2 266.3 L726.6 266.2 L726.9 266.2 L727.2 266.2 L727.5 266.2 L727.8 266.2 L728.1 266.3 L728.4 266.4 L728.7 266.5 L729.0 266.7 L729.3 266.8 L729.6 266.9 L729.9 267.1 L730.2 267.2 L730.6 267.3 L730.9 267.4 L731.2 267.4 L731.6 267.4 L732.0 267.4 L732.4 267.4 L732.8 267.3 L733.2 267.2 L733.6 267.2 L734.0 267.1 L734.4 267.0 L734.9 266.9 L735.3 266.8 L735.8 266.8 L736.2 266.7 L736.7 266.6 L737.2 266.6 L737.8 266.5 L738.3 266.4 L738.9 266.3 L739.5 266.2 L740.0 266.1 L740.6 266.1 L741.1 266.0 L741.6 266.0 L742.1 266.0 L742.5 266.0 L742.9 266.0 L743.3 266.1 L743.6 266.2 L743.9 266.3 L744.2 266.4 L744.5 266.6 L744.7 266.7 L745.0 266.8 L745.3 267.0 L745.6 267.1 L745.9 267.2 L746.2 267.3 L746.6 267.4 L747.0 267.5 L747.4 267.5 L747.8 267.6 L748.2 267.7 L748.7 267.8 L749.1 267.8 L749.5 267.9 L750.0 267.9 L750.4 268.0 L750.8 268.0 L751.2 268.1 L751.7 268.1 L752.1 268.2 L752.6 268.2 L753.0 268.3 L753.5 268.3 L753.9 268.4 L754.3 268.4 L754.8 268.4 L755.2 268.5 L755.6 268.5 L755.9 268.5 L756.2 268.5 L756.5 268.5 L756.8 268.5 L757.1 268.4 L757.3 268.3 L757.5 268.3 L757.7 268.2 L757.8 268.1 L758.0 268.1 L758.2 268.1 L758.4 268.0 L758.5 268.1 L758.8 268.1 L759.0 268.2 L759.1 268.3 L759.3 268.5 L759.5 268.6 L759.7 268.8 L759.8 269.0 L760.0 269.2 L760.2 269.4 L760.4 269.6 L760.7 269.8 L761.0 269.9 L761.2 270.0 L761.6 270.1 L762.0 270.1 L762.4 270.2 L762.8 270.2 L763.3 270.2 L763.8 270.2 L764.2 270.2 L764.7 270.2 L765.1 270.1 L765.5 270.1 L765.9 270.0 L766.2 270.0 L766.5 269.9 L766.8 269.9 L767.0 269.8 L767.3 269.6 L767.5 269.5 L767.6 269.4 L767.8 269.3 L768.0 269.1 L768.2 269.0 L768.3 269.0 L768.5 268.9 L768.8 268.9 L769.0 268.9 L769.2 269.0 L769.5 269.0 L769.8 269.1 L770.0 269.3 L770.3 269.4 L770.5 269.5 L770.8 269.6 L771.0 269.8 L771.2 269.9 L771.4 269.9 L771.5 270.0" fill="none" stroke="#ff1493" stroke-width="1.5" stroke-linejoin="round" />
<path d="M370.7 277.8 L371.7 277.8 L372.8 277.9 L374.2 277.9 L375.7 278.0 L377.4 278.1 L379.2 278.1 L381.1 278.2 L383.0 278.2 L385.0 278.3 L386.9 278.3 L388.9 278.2 L390.8 278.2 L392.7 278.1 L394.7 278.0 L396.7 277.9 L398.8 277.8 L401.0 277.6 L403.1 277.5 L405.3 277.3 L407.4 277.1 L409.6 276.9 L411.7 276.7 L413.8 276.4 L415.9 276.2 L417.9 275.9 L420.0 275.6 L422.0 275.3 L424.0 275.0 L426.0 274.7 L428.0 274.3 L429.9 273.9 L431.9 273.6 L433.9 273.2 L435.9 272.8 L438.0 272.5 L440.0 272.1 L442.1 271.7 L444.1 271.3 L446.2 270.9 L448.4 270.5 L450.5 270.1 L452.6 269.7 L454.7 269.3 L456.8 268.9 L458.9 268.5 L461.0 268.2 L463.0 267.9 L465.0 267.6 L467.0 267.3 L469.0 267.1 L471.0 266.9 L472.9 266.6 L474.9 266.4 L476.8 266.3 L478.7 266.1 L480.6 266.0 L482.4 265.9 L484.2 265.8 L486.0 265.8 L487.7 265.8 L489.3 265.8 L490.9 265.9 L492.5 266.0 L493.9 266.1 L495.4 266.2 L496.8 266.4 L498.2 266.6 L499.6 266.9 L501.0 267.2 L502.4 267.5 L503.8 267.9 L505.3 268.3 L506.8 268.8 L508.2 269.3 L509.7 269.9 L511.2 270.6 L512.7 271.3 L514.2 272.0 L515.6 272.7 L517.1 273.5 L518.6 274.3 L520.1 275.0 L521.5 275.8 L523.0 276.6 L524.5 277.4 L526.0 278.2 L527.5 279.1 L529.0 280.0 L530.6 280.9 L532.1 281.8 L533.6 282.7 L535.0 283.6 L536.5 284.5 L537.9 285.3 L539.2 286.0 L540.5 286.7 L541.7 287.3 L542.9 287.9 L544.0 288.5 L545.0 289.0 L546.1 289.5 L547.1 290.0 L548.0 290.4 L549.0 290.8 L550.0 291.2 L551.0 291.6 L552.0 291.9 L553.0 292.2 L554.1 292.5 L555.1 292.7 L556.2 292.8 L557.3 293.0 L558.4 293.1 L559.4 293.1 L560.5 293.2 L561.6 293.2 L562.6 293.3 L563.6 293.3 L564.6 293.4 L565.6 293.5 L566.5 293.6 L567.4 293.6 L568.3 293.7 L569.2 293.7 L570.0 293.8 L570.8 293.8 L571.6 293.9 L572.4 294.0 L573.2 294.0 L574.1 294.2 L574.9 294.3 L575.7 294.5 L576.5 294.7 L577.4 295.0 L578.2 295.2 L579.0 295.5 L579.9 295.8 L580.7 296.1 L581.5 296.5 L582.4 296.8 L583.2 297.2 L584.0 297.6 L584.9 298.1 L585.7 298.5 L586.5 299.0 L587.4 299.5 L588.2 300.0 L589.1 300.6 L589.9 301.1 L590.8 301.7 L591.6 302.4 L592.4 303.0 L593.3 303.6 L594.1 304.2 L595.0 304.9 L595.8 305.5 L596.6 306.1 L597.5 306.8 L598.3 307.4 L599.1 308.0 L599.9 308.7 L600.7 309.4 L601.6 310.0 L602.4 310.7 L603.2 311.4 L604.1 312.1 L604.9 312.9 L605.8 313.6 L606.7 314.3 L607.5 315.1 L608.4 315.8 L609.2 316.5 L610.1 317.2 L611.0 318.0 L611.9 318.8 L612.8 319.6 L613.8 320.5 L614.8 321.5 L615.9 322.6 L617.0 323.7 L618.2 325.0 L619.5 326.3 L620.8 327.7 L622.2 329.2 L623.6 330.8 L625.1 332.4 L626.6 334.1 L628.1 335.7 L629.5 337.4 L631.0 339.1 L632.5 340.8 L633.9 342.4 L635.3 344.0 L636.7 345.7 L638.1 347.4 L639.5 349.0 L640.9 350.7 L642.3 352.4 L643.8 354.2 L645.2 355.9 L646.6 357.6 L648.0 359.3 L649.4 361.0 L650.8 362.7 L652.2 364.4 L653.6 366.1 L655.0 367.7 L656.5 369.4 L657.9 371.1 L659.3 372.7 L660.7 374.4 L662.1 376.1 L663.6 377.8 L665.0 379.5 L666.4 381.2 L667.8 383.0 L669.2 384.8 L670.7 386.6 L672.1 388.5 L673.5 390.3 L675.0 392.2 L676.4 394.1 L677.8 396.0 L679.3 397.8 L680.7 399.7 L682.0 401.5 L683.4 403.3 L684.7 405.0 L686.0 406.7 L687.3 408.4 L688.7 410.2 L690.0 411.9 L691.3 413.6 L692.5 415.3 L693.8 416.9 L694.9 418.4 L696.1 419.9 L697.1 421.3 L698.1 422.6 L699.0 423.7 L699.8 424.7 L700.5 425.7 L701.2 426.5 L701.8 427.2 L702.4 427.9 L702.9 428.5 L703.3 429.1 L703.8 429.5 L704.1 430.0 L704.4 430.3 L704.7 430.7 L705.0 431.0" fill="none" stroke="#1414ff" stroke-width="1.5" stroke-linejoin="round" />
<path d="M98.3 424.8 L99.0 423.3 L99.9 421.4 L100.9 419.2 L102.1 416.7 L103.3 414.0 L104.7 411.1 L106.0 408.1 L107.5 405.1 L108.9 402.1 L110.3 399.1 L111.6 396.3 L112.9 393.6 L114.1 391.0 L115.4 388.4 L116.7 385.8 L118.0 383.1 L119.3 380.5 L120.6 377.9 L121.9 375.3 L123.1 372.7 L124.4 370.2 L125.6 367.7 L126.8 365.3 L128.0 362.9 L129.2 360.5 L130.4 358.1 L131.6 355.7 L132.8 353.2 L134.0 350.9 L135.2 348.5 L136.3 346.3 L137.4 344.2 L138.3 342.3 L139.2 340.6 L139.9 339.2 L140.5 338.0 L140.9 337.3 L141.3 336.3 L141.9 335.2 L142.5 334.0 L143.1 332.6 L143.8 331.2 L144.5 329.7 L145.3 328.2 L146.0 326.8 L146.7 325.3 L147.4 324.0 L148.0 322.7 L148.6 321.5 L149.2 320.3 L149.8 319.0 L150.4 317.8 L151.0 316.6 L151.6 315.4 L152.2 314.3 L152.8 313.2 L153.4 312.1 L153.9 311.0 L154.5 310.0 L155.0 309.0 L155.5 308.1 L156.0 307.2 L156.5 306.4 L157.0 305.6 L157.5 304.8 L158.0 304.0 L158.4 303.3 L158.9 302.6 L159.3 302.0 L159.8 301.3 L160.2 300.7 L160.6 300.1 L161.0 299.5 L161.4 298.9 L161.8 298.4 L162.2 297.9 L162.6 297.4 L163.0 296.9 L163.3 296.5 L163.7 296.1 L164.0 295.7 L164.4 295.3 L164.7 294.9 L165.0 294.5 L165.3 294.1 L165.6 293.8 L165.8 293.5 L166.1 293.2 L166.3 293.0 L166.6 292.7 L166.8 292.5 L167.1 292.2 L167.3 292.0 L167.6 291.8 L167.8 291.5 L168.1 291.3 L168.4 291.1 L168.7 290.8 L169.0 290.6 L169.3 290.4 L169.6 290.1 L169.9 289.9 L170.3 289.7 L170.6 289.5 L170.9 289.3 L171.3 289.1 L171.6 288.9 L172.0 288.7 L172.4 288.5 L172.7 288.4 L173.0 288.2 L173.3 288.1 L173.6 287.9 L173.9 287.8 L174.2 287.6 L174.6 287.5 L175.1 287.4 L175.6 287.3 L176.3 287.1 L177.0 287.0 L177.8 286.9 L178.7 286.7 L179.6 286.6 L180.5 286.5 L181.6 286.4 L182.6 286.2 L183.8 286.1 L185.0 286.0 L186.3 285.9 L187.7 285.8 L189.2 285.6 L190.8 285.5 L192.5 285.4 L194.3 285.2 L196.3 285.1 L198.4 285.0 L200.5 284.9 L202.7 284.8 L204.9 284.6 L207.2 284.5 L209.4 284.3 L211.6 284.2 L213.8 284.0 L215.9 283.8 L217.9 283.6 L220.0 283.4 L222.0 283.1 L224.0 282.9 L226.0 282.7 L228.0 282.4 L229.9 282.1 L231.9 281.8 L233.9 281.5 L235.9 281.2 L238.0 280.8 L240.0 280.4 L242.1 280.0 L244.1 279.5 L246.2 279.0 L248.3 278.4 L250.3 277.9 L252.4 277.3 L254.5 276.7 L256.6 276.2 L258.7 275.6 L260.8 275.1 L262.9 274.6 L265.0 274.1 L267.1 273.6 L269.3 273.2 L271.5 272.7 L273.8 272.3 L276.0 271.9 L278.3 271.5 L280.5 271.1 L282.6 270.7 L284.7 270.4 L286.7 270.1 L288.6 269.8 L290.3 269.6 L291.9 269.4 L293.4 269.3 L294.7 269.2 L296.0 269.2 L297.1 269.2 L298.3 269.2 L299.4 269.3 L300.5 269.3 L301.6 269.4 L302.8 269.5 L304.0 269.5 L305.3 269.6 L306.7 269.7 L308.1 269.8 L309.5 269.8 L311.0 270.0 L312.4 270.1 L313.9 270.2 L315.4 270.3 L316.9 270.5 L318.4 270.6 L319.9 270.8 L321.4 270.9 L322.9 271.1 L324.4 271.3 L325.9 271.5 L327.4 271.7 L328.9 271.9 L330.4 272.1 L331.9 272.3 L333.3 272.5 L334.8 272.7 L336.3 273.0 L337.7 273.2 L339.1 273.4 L340.5 273.6 L341.8 273.8 L343.2 274.0 L344.5 274.2 L345.7 274.4 L347.0 274.6 L348.2 274.8 L349.4 275.0 L350.7 275.2 L351.9 275.4 L353.1 275.6 L354.3 275.7 L355.6 275.9 L356.8 276.1 L358.1 276.2 L359.3 276.4 L360.4 276.5 L361.6 276.6 L362.8 276.8 L364.1 276.9 L365.3 277.0 L366.6 277.1 L367.9 277.2 L369.3 277.3 L370.7 277.4 L372.2 277.5 L373.7 277.6 L375.3 277.7 L376.8 277.7 L378.5 277.8 L380.1 277.9 L381.8 277.9 L383.5 278.0 L385.3 278.0 L387.1 278.0 L388.9 277.9 L390.8 277.9 L392.7 277.8 L394.7 277.7 L396.7 277.6 L398.8 277.5 L401.0 277.4 L403.1 277.2 L405.3 277.0 L407.4 276.8 L409.6 276.6 L411.7 276.4 L413.8 276.1 L415.9 275.9 L417.9 275.6 L420.0 275.3 L422.0 275.0 L424.0 274.7 L426.0 274.4 L428.0 274.0 L429.9 273.6 L431.9 273.3 L433.9 272.9 L435.9 272.5 L438.0 272.2 L440.0 271.8 L442.1 271.4 L444.1 271.0 L446.2 270.6 L448.4 270.2 L450.5 269.8 L452.6 269.4 L454.7 269.0 L456.8 268.6 L458.9 268.2 L461.0 267.9 L463.0 267.6 L465.0 267.3 L467.0 267.1 L469.0 266.8 L471.0 266.6 L472.9 266.4 L474.9 266.2 L476.8 266.1 L478.7 266.0 L480.6 265.8 L482.4 265.8 L484.2 265.7 L486.0 265.6 L487.7 265.6 L489.3 265.6 L490.9 265.6 L492.5 265.6 L493.9 265.7 L495.4 265.7 L496.8 265.8 L498.2 265.9 L499.6 266.0 L501.0 266.2 L502.4 266.4 L503.8 266.6 L505.3 266.8 L506.8 267.1 L508.2 267.4 L509.7 267.7 L511.2 268.0 L512.7 268.4 L514.2 268.8 L515.6 269.2 L517.1 269.6 L518.6 270.1 L520.1 270.5 L521.5 271.0 L523.0 271.4 L524.5 271.9 L526.0 272.3 L527.5 272.8 L529.0 273.4 L530.6 273.9 L532.1 274.4 L533.6 275.0 L535.0 275.5 L536.5 276.0 L537.9 276.5 L539.2 277.0 L540.5 277.4 L541.7 277.8 L542.9 278.2 L544.1 278.6 L545.2 279.0 L546.3 279.4 L547.4 279.7 L548.4 280.1 L549.4 280.4 L550.3 280.7 L551.3 280.9 L552.1 281.2 L553.0 281.4 L553.8 281.6 L554.5 281.8 L555.2 281.9 L555.8 282.1 L556.4 282.2 L556.9 282.3 L557.5 282.4 L558.1 282.4 L558.6 282.4 L559.2 282.4 L559.9 282.3 L560.6 282.2 L561.4 282.0 L562.1 281.8 L563.0 281.6 L563.8 281.3 L564.6 281.0 L565.5 280.6 L566.4 280.3 L567.2 279.9 L568.1 279.5 L569.0 279.1 L569.9 278.8 L570.7 278.4 L571.5 278.0 L572.4 277.6 L573.3 277.2 L574.2 276.7 L575.1 276.3 L575.9 275.8 L576.8 275.4 L577.6 274.9 L578.5 274.5 L579.2 274.2 L580.0 273.9 L580.7 273.6 L581.4 273.4 L582.0 273.2 L582.5 273.1 L583.1 273.0 L583.6 273.0 L584.1 272.9 L584.6 272.9 L585.0 272.9 L585.5 272.9 L586.0 272.9 L586.5 272.9 L587.0 272.9 L587.5 272.9 L588.0 272.9 L588.5 273.0 L589.1 273.1 L589.6 273.1 L590.1 273.2 L590.6 273.3 L591.1 273.3 L591.6 273.3 L592.2 273.3 L592.7 273.2 L593.3 273.1 L593.9 272.9 L594.5 272.7 L595.1 272.4 L595.8 272.1 L596.4 271.7 L597.1 271.4 L597.8 271.0 L598.4 270.6 L599.0 270.2 L599.7 269.7 L600.2 269.3 L600.8 268.9 L601.3 268.5 L601.8 268.0 L602.3 267.5 L602.8 267.0 L603.3 266.5 L603.7 266.0 L604.1 265.5 L604.6 265.0 L605.0 264.5 L605.4 264.1 L605.9 263.7 L606.3 263.3 L606.7 263.0 L607.1 262.7 L607.6 262.4 L608.0 262.1 L608.4 261.9 L608.7 261.7 L609.1 261.5 L609.6 261.3 L610.0 261.2 L610.4 261.1 L610.8 261.0 L611.3 261.0 L611.8 261.0 L612.3 261.0 L612.8 261.1 L613.3 261.2 L613.8 261.3 L614.4 261.4 L614.9 261.6 L615.5 261.8 L616.0 262.0 L616.5 262.3 L617.1 262.5 L617.6 262.8 L618.1 263.1 L618.6 263.5 L619.1 263.9 L619.7 264.4 L620.2 264.9 L620.7 265.4 L621.2 265.9 L621.7 266.3 L622.2 266.8 L622.8 267.2 L623.3 267.5 L623.9 267.8 L624.5 268.0 L625.1 268.1 L625.8 268.2 L626.4 268.2 L627.1 268.2 L627.8 268.2 L628.5 268.1 L629.1 268.1 L629.8 268.1 L630.4 268.1 L630.9 268.2 L631.4 268.3 L631.8 268.5 L632.2 268.6 L632.6 268.8 L632.9 269.0 L633.2 269.3 L633.5 269.5 L633.7 269.8 L634.0 270.1 L634.3 270.4 L634.5 270.8 L634.9 271.2 L635.2 271.6 L635.6 272.1 L636.0 272.6 L636.4 273.2 L636.8 273.9 L637.2 274.5 L637.7 275.2 L638.1 275.9 L638.5 276.6 L639.0 277.3 L639.4 277.9 L639.8 278.5 L640.2 279.1 L640.6 279.6 L641.0 280.2 L641.4 280.8 L641.7 281.4 L642.1 282.0 L642.5 282.5 L642.9 283.0 L643.2 283.4 L643.6 283.8 L644.0 284.0 L644.3 284.2 L644.7 284.2 L645.1 284.1 L645.4 283.8 L645.8 283.4 L646.1 283.0 L646.5 282.4 L646.8 281.8 L647.2 281.1 L647.5 280.5 L647.9 279.8 L648.2 279.1 L648.6 278.5 L649.0 277.9 L649.4 277.3 L649.8 276.7 L650.2 276.1 L650.6 275.5 L651.0 274.8 L651.4 274.2 L651.8 273.6 L652.2 273.0 L652.6 272.4 L653.1 271.9 L653.5 271.5 L654.0 271.1 L654.5 270.8 L655.0 270.6 L655.5 270.5 L656.0 270.4 L656.5 270.3 L657.0 270.3 L657.6 270.3 L658.1 270.3 L658.6 270.2 L659.2 270.1 L659.7 270.0 L660.3 269.8 L660.9 269.5 L661.5 269.1 L662.1 268.7 L662.7 268.3 L663.3 267.8 L663.9 267.3 L664.5 266.8 L665.1 266.4 L665.7 266.0 L666.3 265.7 L666.8 265.4 L667.3 265.3 L667.8 265.3 L668.2 265.4 L668.6 265.5 L669.0 265.7 L669.3 266.0 L669.6 266.3 L670.0 266.6 L670.3 267.0 L670.6 267.4 L670.9 267.7 L671.3 268.0 L671.6 268.3 L671.9 268.6 L672.2 268.9 L672.6 269.2 L672.9 269.6 L673.2 270.0 L673.5 270.3 L673.8 270.6 L674.1 270.9 L674.4 271.2 L674.7 271.4 L675.0 271.5 L675.4 271.6 L675.8 271.6 L676.2 271.5 L676.6 271.3 L677.0 271.1 L677.5 270.9 L677.9 270.6 L678.4 270.3 L678.8 270.0 L679.2 269.7 L679.6 269.4 L680.0 269.2 L680.4 269.0 L680.7 268.8 L681.1 268.7 L681.4 268.5 L681.7 268.4 L682.0 268.3 L682.3 268.1 L682.6 268.0 L682.9 267.9 L683.1 267.7 L683.4 267.6 L683.7 267.5 L684.0 267.3 L684.3 267.1 L684.6 267.0 L684.9 266.8 L685.2 266.6 L685.5 266.4 L685.8 266.2 L686.1 266.1 L686.4 265.9 L686.7 265.7 L686.9 265.4 L687.2 265.2 L687.5 265.0 L687.8 264.8 L688.0 264.5 L688.3 264.2 L688.6 264.0 L688.8 263.7 L689.1 263.4 L689.3 263.1 L689.6 262.8 L689.8 262.5 L690.0 262.3 L690.3 262.0 L690.5 261.8 L690.7 261.6 L690.9 261.4 L691.2 261.1 L691.4 260.9 L691.6 260.7 L691.8 260.5 L692.0 260.3 L692.2 260.2 L692.4 260.0 L692.6 259.9 L692.8 259.8 L693.0 259.8 L693.2 259.7 L693.4 259.7 L693.7 259.8 L693.9 259.9 L694.1 259.9 L694.4 260.1 L694.6 260.2 L694.8 260.3 L695.1 260.4 L695.3 260.6 L695.6 260.7 L695.8 260.8 L696.0 260.9 L696.3 261.0 L696.5 261.2 L696.7 261.3 L697.0 261.4 L697.2 261.6 L697.4 261.7 L697.7 261.8 L697.9 262.0 L698.2 262.1 L698.5 262.2 L698.8 262.2 L699.1 262.3 L699.4 262.3 L699.8 262.4 L700.1 262.4 L700.5 262.4 L700.9 262.4 L701.3 262.4 L701.7 262.4 L702.0 262.4 L702.4 262.4 L702.7 262.4 L703.0 262.5 L703.3 262.6 L703.5 262.7 L703.7 262.8 L704.0 262.9 L704.2 263.0 L704.4 263.1 L704.5 263.2 L704.7 263.4 L704.9 263.5 L705.1 263.6 L705.3 263.7 L705.5 263.8 L705.7 263.9 L705.9 264.0 L706.1 264.1 L706.4 264.2 L706.6 264.3 L706.8 264.4 L707.0 264.5 L707.2 264.6 L707.4 264.6 L707.6 264.7 L707.8 264.7 L708.0 264.8 L708.2 264.7 L708.4 264.7 L708.5 264.7 L708.7 264.6 L708.9 264.5 L709.0 264.5 L709.2 264.4 L709.4 264.3 L709.5 264.2 L709.7 264.1 L709.8 264.1 L710.0 264.0 L710.2 263.9 L710.3 263.9 L710.5 263.8 L710.7 263.8 L710.8 263.7 L711.0 263.7 L711.2 263.6 L711.3 263.6 L711.5 263.5 L711.7 263.5 L711.8 263.5 L712.0 263.5 L712.2 263.5 L712.3 263.6 L712.5 263.6 L712.7 263.7 L712.8 263.7 L713.0 263.8 L713.1 263.9 L713.3 264.0 L713.5 264.1 L713.7 264.2 L713.8 264.2 L714.0 264.3 L714.2 264.4 L714.3 264.4 L714.5 264.5 L714.7 264.6 L714.8 264.6 L715.0 264.7 L715.2 264.8 L715.4 264.8 L715.6 264.9 L715.8 264.9 L716.0 265.0 L716.2 265.0 L716.5 265.0 L716.8 265.0 L717.1 265.0 L717.4 264.9 L717.7 264.9 L718.0 264.8 L718.4 264.8 L718.7 264.8 L719.0 264.7 L719.4 264.7 L719.7 264.7 L720.0 264.8 L720.3 264.8 L720.6 264.9 L720.9 265.0 L721.2 265.1 L721.6 265.2 L721.9 265.4 L722.2 265.5 L722.5 265.6 L722.8 265.8 L723.1 265.9 L723.4 265.9 L723.8 266.0 L724.1 266.0 L724.4 266.0 L724.7 266.0 L725.0 265.9 L725.3 265.9 L725.6 265.8 L725.9 265.7 L726.2 265.7 L726.6 265.6 L726.9 265.6 L727.2 265.6 L727.5 265.6 L727.8 265.7 L728.1 265.7 L728.4 265.9 L728.7 266.0 L729.0 266.1 L729.3 266.3 L729.6 266.4 L729.9 266.5 L730.2 266.7 L730.6 266.8 L730.9 266.9 L731.2 266.9 L731.6 266.9 L732.0 266.9 L732.4 266.9 L732.8 266.8 L733.2 266.8 L733.6 266.7 L734.0 266.6 L734.4 266.5 L734.9 266.5 L735.3 266.4 L735.8 266.3 L736.2 266.2 L736.7 266.2 L737.2 266.1 L737.8 266.0 L738.3 266.0 L738.9 265.9 L739.5 265.8 L740.0 265.7 L740.6 265.7 L741.1 265.6 L741.6 265.6 L742.1 265.6 L742.5 265.6 L742.9 265.6 L743.3 265.7 L743.6 265.8 L743.9 265.9 L744.2 266.0 L744.5 266.2 L744.7 266.3 L745.0 266.4 L745.3 266.6 L745.6 266.7 L745.9 266.8 L746.2 266.9 L746.6 267.0 L747.0 267.1 L747.4 267.2 L747.8 267.2 L748.2 267.3 L748.7 267.4 L749.1 267.5 L749.5 267.5 L750.0 267.6 L750.4 267.6 L750.8 267.7 L751.2 267.8 L751.7 267.8 L752.1 267.8 L752.6 267.9 L753.0 267.9 L753.5 268.0 L753.9 268.0 L754.3 268.0 L754.8 268.1 L755.2 268.1 L755.6 268.1 L755.9 268.1 L756.2 268.1 L756.5 268.1 L756.8 268.1 L757.1 268.0 L757.3 268.0 L757.5 267.9 L757.7 267.8 L757.8 267.8 L758.0 267.7 L758.2 267.7 L758.4 267.7 L758.5 267.7 L758.8 267.8 L759.0 267.8 L759.1 268.0 L759.3 268.1 L759.5 268.3 L759.7 268.5 L759.8 268.7 L760.0 268.8 L760.2 269.0 L760.4 269.2 L760.7 269.4 L761.0 269.5 L761.2 269.6 L761.6 269.7 L762.0 269.7 L762.4 269.8 L762.8 269.8 L763.3 269.8 L763.8 269.8 L764.2 269.8 L764.7 269.8 L765.1 269.7 L765.5 269.7 L765.9 269.6 L766.2 269.6 L766.5 269.5 L766.8 269.5 L767.0 269.4 L767.3 269.2 L767.5 269.1 L767.6 269.0 L767.8 268.9 L768.0 268.7 L768.2 268.6 L768.3 268.6 L768.5 268.5 L768.8 268.5 L769.0 268.5 L769.2 268.6 L769.5 268.6 L769.8 268.7 L770.0 268.9 L770.3 269.0 L770.5 269.1 L770.8 269.2 L771.0 269.4 L771.2 269.5 L771.4 269.5 L771.5 269.6" fill="none" stroke="#111" stroke-width="1.65" stroke-linejoin="round" />
<line x1="98.5" y1="425.3" x2="500.5" y2="425.3" stroke="#a00050" stroke-width="1.0" />
<line x1="500.5" y1="425.3" x2="771.5" y2="425.3" stroke="#8c8c00" stroke-width="1.0" />
<line x1="98.5" y1="424.4" x2="771.5" y2="424.4" stroke="#1c1c1c" stroke-width="1.0" />
<line x1="51.5" y1="424.9" x2="99.0" y2="424.9" stroke="#111" stroke-width="1.8" />
</g>
<clipPath id="ct"><rect x="52.0" y="16.5" width="720.8" height="68.0"/></clipPath>
<g clip-path="url(#ct)">
<path d="M52.0 52.5 L52.6 52.5 L53.2 52.6 L53.8 52.6 L54.4 52.6 L55.0 52.7 L55.6 52.7 L56.2 52.8 L56.8 52.8 L57.4 52.8 L58.0 52.9 L58.6 52.9 L59.2 52.9 L59.8 53.0 L60.4 53.0 L61.0 53.0 L61.6 53.1 L62.2 53.1 L62.8 53.1 L63.4 53.2 L64.0 53.2 L64.6 53.2 L65.2 53.3 L65.8 53.3 L66.4 53.3 L67.0 53.4 L67.5 53.4 L68.1 53.4 L68.7 53.5 L69.3 53.5 L69.9 53.5 L70.5 53.6 L71.1 53.6 L71.7 53.6 L72.3 53.7 L72.9 53.7 L73.5 53.7 L74.1 53.8 L74.7 53.8 L75.3 53.8 L75.9 53.9 L76.5 53.9 L77.1 53.9 L77.7 54.0 L78.3 54.0 L78.9 54.0 L79.5 54.1 L80.1 54.1 L80.7 54.1 L81.3 54.2 L81.9 54.2 L82.5 54.2 L83.1 54.3 L83.7 54.3 L84.3 54.3 L84.9 54.4 L85.5 54.4 L86.1 54.4 L86.7 54.5 L87.3 54.5 L87.9 54.5 L88.5 54.6 L89.1 54.6 L89.7 54.6 L90.3 54.7 L90.9 54.7 L91.5 54.7 L92.1 54.8 L92.7 54.8 L93.3 54.9 L93.9 54.9 L94.5 54.9 L95.0 55.0 L95.6 55.0 L96.2 55.0 L96.8 55.1 L97.4 55.1 L98.0 55.1 L98.6 55.2 L99.2 55.2 L99.8 55.2 L100.4 55.3 L101.0 55.3 L101.6 55.3 L102.2 55.4 L102.8 55.4 L103.4 55.4 L104.0 55.5 L104.6 55.5 L105.2 55.5 L105.8 55.6 L106.4 55.6 L107.0 55.6 L107.6 55.7 L108.2 55.7 L108.8 55.7 L109.4 55.8 L110.0 55.8 L110.6 55.8 L111.2 55.9 L111.8 55.9 L112.4 55.9 L113.0 56.0 L113.6 56.0 L114.2 56.0 L114.8 56.1 L115.4 56.1 L116.0 56.1 L116.6 56.2 L117.2 56.2 L117.8 56.2 L118.4 56.3 L119.0 56.3 L119.6 56.3 L120.2 56.4 L120.8 56.4 L121.4 56.4 L122.0 56.5 L122.5 56.5 L123.1 56.5 L123.7 56.6 L124.3 56.6 L124.9 56.6 L125.5 56.7 L126.1 56.7 L126.7 56.7 L127.3 56.8 L127.9 56.8 L128.5 56.8 L129.1 56.9 L129.7 56.9 L130.3 57.0 L130.9 57.0 L131.5 57.0 L132.1 57.1 L132.7 57.1 L133.3 57.1 L133.9 57.2 L134.5 57.2 L135.1 57.2 L135.7 57.3 L136.3 57.3 L136.9 57.3 L137.5 57.4 L138.1 57.4 L138.7 57.4 L139.3 57.5 L139.9 57.5 L140.5 57.5 L141.1 57.6 L141.7 57.7 L142.3 57.7 L142.9 57.8 L143.5 57.8 L144.1 57.9 L144.7 58.0 L145.3 58.0 L145.9 58.1 L146.5 58.1 L147.1 58.2 L147.7 58.3 L148.3 58.3 L148.9 58.4 L149.5 58.4 L150.1 58.5 L150.6 58.6 L151.2 58.6 L151.8 58.7 L152.4 58.7 L153.0 58.8 L153.6 58.9 L154.2 58.9 L154.8 59.0 L155.4 59.0 L156.0 59.1 L156.6 59.2 L157.2 59.2 L157.8 59.3 L158.4 59.3 L159.0 59.4 L159.6 59.5 L160.2 59.5 L160.8 59.6 L161.4 59.6 L162.0 59.7 L162.6 59.8 L163.2 59.8 L163.8 59.9 L164.4 59.9 L165.0 60.0 L165.6 60.1 L166.2 60.1 L166.8 60.2 L167.4 60.2 L168.0 60.3 L168.6 60.4 L169.2 60.4 L169.8 60.5 L170.4 60.5 L171.0 60.6 L171.6 60.7 L172.2 60.7 L172.8 60.8 L173.4 60.8 L174.0 60.9 L174.6 61.0 L175.2 61.0 L175.8 61.1 L176.4 61.1 L177.0 61.2 L177.6 61.3 L178.1 61.3 L178.7 61.4 L179.3 61.4 L179.9 61.5 L180.5 61.6 L181.1 61.6 L181.7 61.7 L182.3 61.7 L182.9 61.8 L183.5 61.9 L184.1 61.9 L184.7 62.0 L185.3 62.0 L185.9 62.1 L186.5 62.2 L187.1 62.2 L187.7 62.3 L188.3 62.3 L188.9 62.4 L189.5 62.5 L190.1 62.5 L190.7 62.6 L191.3 62.6 L191.9 62.7 L192.5 62.7 L193.1 62.8 L193.7 62.9 L194.3 62.9 L194.9 63.0 L195.5 63.0 L196.1 63.1 L196.7 63.2 L197.3 63.2 L197.9 63.3 L198.5 63.3 L199.1 63.4 L199.7 63.5 L200.3 63.5 L200.9 63.6 L201.5 63.6 L202.1 63.7 L202.7 63.8 L203.3 63.8 L203.9 63.9 L204.5 63.9 L205.1 64.0 L205.6 64.1 L206.2 64.1 L206.8 64.2 L207.4 64.2 L208.0 64.3 L208.6 64.4 L209.2 64.4 L209.8 64.5 L210.4 64.5 L211.0 64.6 L211.6 64.7 L212.2 64.7 L212.8 64.8 L213.4 64.8 L214.0 64.9 L214.6 65.0 L215.2 65.0 L215.8 65.1 L216.4 65.1 L217.0 65.2 L217.6 65.3 L218.2 65.3 L218.8 65.4 L219.4 65.4 L220.0 65.5 L220.6 65.6 L221.2 65.6 L221.8 65.7 L222.4 65.7 L223.0 65.8 L223.6 65.9 L224.2 65.9 L224.8 66.0 L225.4 66.0 L226.0 66.1 L226.6 66.2 L227.2 66.2 L227.8 66.3 L228.4 66.3 L229.0 66.4 L229.6 66.5 L230.2 66.5 L230.8 66.6 L231.4 66.6 L232.0 66.7 L232.6 66.8 L233.1 66.8 L233.7 66.9 L234.3 66.9 L234.9 67.0 L235.5 67.1 L236.1 67.1 L236.7 67.2 L237.3 67.2 L237.9 67.3 L238.5 67.4 L239.1 67.4 L239.7 67.5 L240.3 67.6 L240.9 67.9 L241.5 68.1 L242.1 68.3 L242.7 68.6 L243.3 68.8 L243.9 69.1 L244.5 69.3 L245.1 69.5 L245.7 69.8 L246.3 70.0 L246.9 70.2 L247.5 70.5 L248.1 70.7 L248.7 70.9 L249.3 71.2 L249.9 71.4 L250.5 71.7 L251.1 71.9 L251.7 72.1 L252.3 72.4 L252.9 72.6 L253.5 72.8 L254.1 73.1 L254.7 73.3 L255.3 73.6 L255.9 73.8 L256.5 74.0 L257.1 74.3 L257.7 74.5 L258.3 74.7 L258.9 75.0 L259.5 75.2 L260.1 75.4 L260.7 75.7 L261.2 75.9 L261.8 76.2 L262.4 76.4 L263.0 76.6 L263.6 76.9 L264.2 77.1 L264.8 77.3 L265.4 77.6 L266.0 77.8 L266.6 78.1 L267.2 78.3 L267.8 78.5 L268.4 78.8 L269.0 79.0 L269.6 79.2 L270.2 79.5 L270.8 79.7 L271.4 79.9 L272.0 80.2 L272.6 80.4 L273.2 80.7 L273.8 80.9 L274.4 81.1 L275.0 81.4 L275.6 81.6 L276.2 81.8 L276.8 82.1 L277.4 82.3 L278.0 82.6 L278.6 82.8 L279.2 83.0 L279.8 83.3 L280.4 83.5 L281.0 83.7 L281.6 16.3 L282.2 16.3 L282.8 16.3 L283.4 16.3 L284.0 16.3 L284.6 16.3 L285.2 16.3 L285.8 16.3 L286.4 16.3 L287.0 16.3 L287.6 16.3 L288.2 16.3 L288.7 16.3 L289.3 16.3 L289.9 16.3 L290.5 16.3 L291.1 16.3 L291.7 16.3 L292.3 16.3 L292.9 16.3 L293.5 16.3 L294.1 16.6 L294.7 16.9 L295.3 17.2 L295.9 17.5 L296.5 17.7 L297.1 18.0 L297.7 18.3 L298.3 18.5 L298.9 18.8 L299.5 19.1 L300.1 19.3 L300.7 19.6 L301.3 19.9 L301.9 20.2 L302.5 20.5 L303.1 20.7 L303.7 21.0 L304.3 21.3 L304.9 21.6 L305.5 21.9 L306.1 22.2 L306.7 22.5 L307.3 22.8 L307.9 23.1 L308.5 23.4 L309.1 23.7 L309.7 24.0 L310.3 24.3 L310.9 24.6 L311.5 25.0 L312.1 25.3 L312.7 25.7 L313.3 26.0 L313.9 26.4 L314.5 26.7 L315.1 27.1 L315.7 27.5 L316.2 27.9 L316.8 28.3 L317.4 28.7 L318.0 29.1 L318.6 29.6 L319.2 30.0 L319.8 30.5 L320.4 30.9 L321.0 31.4 L321.6 31.9 L322.2 32.4 L322.8 32.9 L323.4 33.4 L324.0 33.9 L324.6 34.4 L325.2 34.9 L325.8 35.4 L326.4 35.9 L327.0 36.5 L327.6 37.0 L328.2 37.6 L328.8 38.1 L329.4 38.6 L330.0 39.2 L330.6 39.7 L331.2 40.3 L331.8 40.9 L332.4 41.4 L333.0 42.0 L333.6 42.6 L334.2 43.1 L334.8 43.7 L335.4 44.3 L336.0 44.9 L336.6 45.4 L337.2 46.0 L337.8 46.6 L338.4 47.2 L339.0 47.8 L339.6 48.3 L340.2 48.9 L340.8 49.5 L341.4 50.1 L342.0 50.7 L342.6 51.3 L343.2 51.8 L343.8 52.4 L344.3 53.0 L344.9 53.6 L345.5 54.2 L346.1 54.9 L346.7 55.5 L347.3 56.1 L347.9 56.7 L348.5 57.4 L349.1 58.0 L349.7 58.7 L350.3 59.3 L350.9 60.0 L351.5 60.6 L352.1 61.3 L352.7 61.9 L353.3 62.6 L353.9 63.3 L354.5 63.9 L355.1 64.6 L355.7 65.3 L356.3 65.9 L356.9 66.6 L357.5 67.2 L358.1 67.9 L358.7 68.5 L359.3 69.1 L359.9 69.8 L360.5 70.4 L361.1 71.0 L361.7 71.6 L362.3 72.2 L362.9 72.8 L363.5 73.4 L364.1 74.0 L364.7 74.6 L365.3 75.2 L365.9 75.8 L366.5 76.4 L367.1 77.0 L367.7 77.6 L368.3 78.2 L368.9 78.7 L369.5 79.3 L370.1 79.9 L370.7 80.5 L371.3 81.1 L371.8 81.7 L372.4 82.2 L373.0 82.8 L373.6 83.4 L374.2 16.4 L374.8 17.1 L375.4 17.7 L376.0 18.4 L376.6 19.1 L377.2 19.7 L377.8 20.4 L378.4 21.0 L379.0 21.7 L379.6 22.4 L380.2 23.0 L380.8 23.7 L381.4 24.3 L382.0 25.0 L382.6 25.7 L383.2 26.3 L383.8 27.0 L384.4 27.7 L385.0 28.4" fill="none" stroke="#ffffa0" stroke-width="1.1" stroke-linejoin="bevel"/>
<path d="M384.4 27.7 L385.0 28.4 L385.6 29.0 L386.2 29.7 L386.8 30.4 L387.4 31.1 L388.0 31.8 L388.6 32.5 L389.2 33.2 L389.8 34.0 L390.4 34.7 L391.0 35.4 L391.6 36.2 L392.2 37.0 L392.8 37.7 L393.4 38.6 L394.0 39.4 L394.6 40.2 L395.2 41.1 L395.8 41.9 L396.4 42.8 L397.0 43.7 L397.6 44.6 L398.2 45.6 L398.8 46.6 L399.3 47.5 L399.9 48.5 L400.5 49.5 L401.1 50.6 L401.7 51.6 L402.3 52.7 L402.9 53.7 L403.5 54.7 L404.1 55.8 L404.7 56.8 L405.3 57.9 L405.9 59.0 L406.5 60.0 L407.1 61.1 L407.7 62.2 L408.3 63.3 L408.9 64.5 L409.5 65.6 L410.1 66.7 L410.7 67.8 L411.3 69.0 L411.9 70.1 L412.5 71.2 L413.1 72.4 L413.7 73.5 L414.3 74.7 L414.9 75.8 L415.5 77.0 L416.1 78.2 L416.7 79.3 L417.3 80.5 L417.9 81.6 L418.5 82.8 L419.1 16.3 L419.7 17.5 L420.3 18.7 L420.9 19.9 L421.5 21.1 L422.1 22.3 L422.7 23.5 L423.3 24.7 L423.9 25.9 L424.5 27.2 L425.1 28.4 L425.7 29.7 L426.3 31.0 L426.8 32.2 L427.4 33.5 L428.0 34.8 L428.6 36.1 L429.2 37.4 L429.8 38.7 L430.4 40.1 L431.0 41.4 L431.6 42.7 L432.2 44.1 L432.8 45.5 L433.4 46.8 L434.0 48.2 L434.6 49.6 L435.2 51.0 L435.8 52.4 L436.4 53.8 L437.0 55.3 L437.6 56.7 L438.2 58.2 L438.8 59.6 L439.4 61.1 L440.0 62.6 L440.6 64.1 L441.2 65.6 L441.8 67.1 L442.4 68.6 L443.0 70.1 L443.6 71.7 L444.2 73.2 L444.8 74.8 L445.4 76.3 L446.0 77.9 L446.6 79.5 L447.2 81.1 L447.8 82.7 L448.4 16.8 L449.0 18.5 L449.6 20.1 L450.2 21.8 L450.8 23.5 L451.4 25.1 L452.0 26.8 L452.6 28.5 L453.2 30.2 L453.8 32.0 L454.4 33.7 L454.9 35.5 L455.5 37.2 L456.1 39.0 L456.7 40.8 L457.3 42.6 L457.9 44.4 L458.5 46.2 L459.1 48.0 L459.7 49.9 L460.3 51.8 L460.9 53.6 L461.5 55.5 L462.1 57.4 L462.7 59.3 L463.3 61.2 L463.9 63.2 L464.5 65.1 L465.1 67.1 L465.7 69.1 L466.3 71.0 L466.9 73.0 L467.5 75.1 L468.1 77.1 L468.7 79.1 L469.3 81.2 L469.9 83.3 L470.5 17.8 L471.1 19.9 L471.7 22.1 L472.3 24.2 L472.9 26.3 L473.5 28.5 L474.1 30.6 L474.7 32.8 L475.3 35.0 L475.9 37.2 L476.5 39.5 L477.1 41.7 L477.7 44.0 L478.3 46.3 L478.9 48.5 L479.5 50.9 L480.1 53.2 L480.7 55.5 L481.3 57.9 L481.9 60.2 L482.4 62.6 L483.0 65.0 L483.6 67.4 L484.2 69.9 L484.8 72.3 L485.4 74.8 L486.0 77.3 L486.6 79.8 L487.2 82.3 L487.8 17.3 L488.4 19.9 L489.0 22.4 L489.6 25.0 L490.2 27.6 L490.8 30.2 L491.4 32.9 L492.0 35.5 L492.6 38.2 L493.2 40.9 L493.8 43.6 L494.4 46.3 L495.0 49.1 L495.6 51.9 L496.2 54.6 L496.8 57.4 L497.4 60.3 L498.0 63.1 L498.6 66.0 L499.2 68.8 L499.8 71.7 L500.4 74.7 L501.0 77.6 L501.6 80.6 L502.2 83.5 L502.8 19.0 L503.4 22.0 L504.0 25.1 L504.6 28.1 L505.2 31.2 L505.8 34.3 L506.4 37.4 L507.0 40.6 L507.6 43.8 L508.2 46.9 L508.8 50.1 L509.4 53.4 L509.9 56.6 L510.5 59.9 L511.1 63.2 L511.7 66.5 L512.3 69.8 L512.9 73.2 L513.5 76.6 L514.1 80.0 L514.7 83.4 L515.3 19.4 L515.9 22.9 L516.5 26.4 L517.1 29.9 L517.7 33.4 L518.3 37.0 L518.9 40.6 L519.5 44.2 L520.1 47.9 L520.7 51.5 L521.3 55.2 L521.9 58.9 L522.5 62.7 L523.1 66.5 L523.7 70.2 L524.3 74.1 L524.9 77.9 L525.5 81.8 L526.1 18.2 L526.7 22.1 L527.3 26.1 L527.9 30.0 L528.5 34.0 L529.1 38.1 L529.7 42.1 L530.3 46.2 L530.9 50.3 L531.5 54.5 L532.1 58.6 L532.7 62.8 L533.3 67.1 L533.9 71.3 L534.5 75.6 L535.1 79.9 L535.7 16.8 L536.3 21.1 L536.9 25.5 L537.5 30.0 L538.0 34.4 L538.6 38.9 L539.2 43.4 L539.8 48.0 L540.4 52.6 L541.0 57.2 L541.6 61.8 L542.2 66.5 L542.8 71.2 L543.4 75.9 L544.0 80.7 L544.6 18.0 L545.2 22.8 L545.8 27.7 L546.4 32.6 L547.0 37.5 L547.6 42.5 L548.2 47.5 L548.8 52.5 L549.4 57.6 L550.0 62.7 L550.6 67.8 L551.2 72.5 L551.8 77.3 L552.4 82.1 L553.0 19.4 L553.6 24.2 L554.2 29.1 L554.8 34.1 L555.4 39.0 L556.0 44.0 L556.6 49.1 L557.2 54.1 L557.8 59.2 L558.4 64.4 L559.0 69.5 L559.6 74.7 L560.2 80.0 L560.8 17.7 L561.4 23.0 L562.0 28.4 L562.6 33.8 L563.2 39.2 L563.8 44.6 L564.4 50.1 L565.0 55.6 L565.5 61.2 L566.1 66.8 L566.7 72.5 L567.3 78.1 L567.9 78.5 L567.9 16.3 L567.9 16.3 L568.5 22.1 L569.1 27.9 L569.7 33.7 L570.3 39.6 L570.9 45.5 L571.5 51.5 L572.1 57.5 L572.7 63.5 L573.3 69.6 L573.9 75.7 L574.5 81.8 L574.7 82.2 L574.7 19.7 L575.1 20.5 L575.7 26.8 L576.3 33.0 L576.9 39.4 L577.5 45.7 L578.1 52.1 L578.7 58.6 L579.3 65.1 L579.9 71.6 L580.5 78.2 L581.0 79.8 L581.0 17.0 L581.1 17.3 L581.7 24.0 L582.3 30.7 L582.9 37.5 L583.5 44.3 L584.1 51.2 L584.7 58.1 L585.3 65.0 L585.9 72.0 L586.5 79.0 L586.9 81.0 L586.9 17.7 L587.1 18.6 L587.7 25.8 L588.3 33.0 L588.9 40.2 L589.5 47.5 L590.1 54.8 L590.7 62.2 L591.3 69.6 L591.9 77.1 L592.4 80.5 L592.4 16.7 L592.5 17.1 L593.0 24.7 L593.6 32.4 L594.2 40.0 L594.8 47.8 L595.4 55.6 L596.0 63.4 L596.6 71.3 L597.2 79.3 L597.6 81.7 L597.6 17.8 L597.8 19.8 L598.4 27.8 L599.0 35.9 L599.6 44.1 L600.2 52.3 L600.8 60.6 L601.4 68.9 L602.0 77.3 L602.5 80.9 L602.5 17.2 L602.6 18.3 L603.2 26.8 L603.8 35.3 L604.4 43.9 L605.0 52.6 L605.6 61.4 L606.2 70.2 L606.8 79.0 L607.1 81.6 L607.1 18.1 L607.4 20.4 L608.0 29.4 L608.6 38.4 L609.2 47.5 L609.8 56.7 L610.4 65.9 L611.0 75.2 L611.5 79.9 L611.5 16.6 L611.6 17.0 L612.2 26.6 L612.8 37.0 L613.4 47.4 L614.0 57.9 L614.6 68.4 L615.2 79.1 L615.4 81.6 L615.4 19.0 L615.8 22.3 L616.4 33.0 L617.0 43.9 L617.6 54.8 L618.2 65.8 L618.8 76.8 L619.1 80.6 L619.1 18.2 L619.4 20.5 L620.0 31.7 L620.5 43.0 L621.1 54.4 L621.7 65.8 L622.3 77.3 L622.7 80.9 L622.7 18.6 L622.9 21.4 L623.5 33.1 L624.1 44.9 L624.7 56.7 L625.3 68.6 L625.9 80.6 L626.1 82.3 L626.1 20.3 L626.5 25.2 L627.1 37.3 L627.7 49.6 L628.3 61.9 L628.9 74.3 L629.4 79.5 L629.4 17.6 L629.5 19.3 L630.1 31.9 L630.7 44.5 L631.3 57.3 L631.9 70.1 L632.5 83.0 L632.5 83.4 L632.5 21.8 L633.1 28.5 L633.7 41.6 L634.3 54.8 L634.9 68.1 L635.5 81.4 L635.6 82.7 L635.6 21.3 L636.1 27.4 L636.7 40.9 L637.3 54.6 L637.9 68.3 L638.5 82.1 L638.6 83.0 L638.6 21.8 L639.1 28.5 L639.7 42.5 L640.3 56.6 L640.9 70.8 L641.4 77.9 L641.4 16.9 L641.5 17.6 L642.1 32.0 L642.7 46.5 L643.3 61.1 L643.9 75.7 L644.2 79.3 L644.2 20.0 L644.5 23.0 L645.1 37.9 L645.7 52.9 L646.3 68.0 L646.9 83.2 L646.9 83.3 L646.9 27.9 L647.5 30.9 L648.1 46.3 L648.6 61.8 L649.2 77.4 L649.5 77.5 L649.5 25.5 L649.8 25.6 L650.4 41.4 L651.0 57.3 L651.6 73.4 L652.2 22.0 L652.8 38.2 L653.4 54.6 L654.0 71.1 L654.6 20.1 L655.2 36.9 L655.8 53.8 L656.4 70.8 L657.0 20.4 L657.6 37.7 L658.2 55.1 L658.8 72.5 L659.4 22.6 L660.0 40.4 L660.6 58.2 L661.2 76.1 L661.8 26.7 L662.4 44.9 L663.0 63.2 L663.6 81.7 L664.2 32.7 L664.8 51.4 L665.4 70.3 L666.0 21.7 L666.6 40.8 L667.2 60.0 L667.8 79.3 L668.4 31.2 L669.0 50.8 L669.6 70.6 L670.2 22.9 L670.8 42.9 L671.4 63.0 L672.0 83.3 L672.6 36.1 L673.2 56.7 L673.8 77.3 L674.4 30.6 L675.0 51.6 L675.6 72.7 L676.1 26.4 L676.7 47.8 L677.3 69.3 L677.9 23.4 L678.5 45.2 L679.1 67.2 L679.7 21.8 L680.3 44.0 L680.9 66.3 L681.5 21.2 L682.1 43.8 L682.7 66.6 L683.3 22.0 L683.9 45.0 L684.5 68.2 L685.1 24.1 L685.7 47.6 L686.3 71.3 L686.9 27.6 L687.5 51.6 L688.1 75.8 L688.7 32.6 L689.3 57.1 L689.9 81.7 L690.5 39.0 L691.1 64.0 L691.7 21.7 L692.3 47.0 L692.9 72.5 L693.5 30.7 L694.1 56.5 L694.7 82.5 L695.3 41.2 L695.9 67.6 L696.5 26.6 L697.1 53.4 L697.7 80.3 L698.3 39.8 L698.9 67.1 L699.5 27.1 L700.1 54.7 L700.7 82.5 L701.3 43.1 L701.9 71.3 L702.5 32.2 L703.1 60.7 L703.6 22.0 L704.2 51.0 L704.8 80.2 L705.4 42.0 L706.0 71.6 L706.6 33.9 L707.2 63.8 L707.8 26.5 L708.4 56.9 L709.0 20.0 L709.6 50.7 L710.2 81.7 L710.8 45.4 L711.4 76.8 L712.0 41.0 L712.6 72.8 L713.2 37.4 L713.8 69.6 L714.4 34.6 L715.0 67.3 L715.6 32.7 L716.2 65.9 L716.8 31.8 L717.4 65.4 L718.0 31.7 L718.6 65.7 L719.2 32.5 L719.8 67.0 L720.4 34.3 L721.0 69.3 L721.6 37.0 L722.2 72.5 L722.8 40.7 L723.4 76.6 L724.0 45.3 L724.6 81.7 L725.2 50.9 L725.8 20.3 L726.4 57.5 L727.0 27.4 L727.6 65.1 L728.2 35.5 L728.8 73.7 L729.4 44.6 L730.0 83.3 L730.6 54.8 L731.2 26.5 L731.7 66.0 L732.3 38.2 L732.9 78.3 L733.5 51.1 L734.1 24.1 L734.7 65.0 L735.3 38.6 L735.9 80.0 L736.5 54.2 L737.1 28.6 L737.7 70.9 L738.3 45.9 L738.9 21.2 L739.5 64.3 L740.1 40.2 L740.7 16.4 L741.3 60.4 L741.9 37.1 L742.5 81.7 L743.1 59.1 L743.7 36.8 L744.3 82.3 L744.9 60.6 L745.5 39.2 L746.1 18.1 L746.7 64.8 L747.3 44.3 L747.9 24.2 L748.5 71.9 L749.1 52.4 L749.7 33.2 L750.3 81.9 L750.9 63.3 L751.5 45.2 L752.1 27.3 L752.7 77.3 L753.3 60.1 L753.9 43.3 L754.5 26.8 L755.1 78.1 L755.7 62.3 L756.3 46.8 L756.9 31.7 L757.5 17.0 L758.1 70.1 L758.7 56.1 L759.2 42.4 L759.8 29.1 L760.4 83.6 L761.0 71.0 L761.6 58.8 L762.2 47.0 L762.8 35.5 L763.4 24.5 L764.0 81.3 L764.6 70.9 L765.2 61.0 L765.8 51.5 L766.4 42.3 L767.0 33.6 L767.6 25.2 L768.2 17.2 L768.8 77.2 L769.4 70.0 L770.0 63.3 L770.6 57.0 L771.2 51.0 L771.8 45.5" fill="none" stroke="#ffff9a" stroke-width="1.9" stroke-linejoin="bevel"/>
<path d="M52.0 28.2 L52.8 28.4 L53.8 28.7 L55.0 29.0 L56.2 29.3 L57.6 29.7 L59.1 30.0 L60.7 30.4 L62.4 30.9 L64.2 31.3 L66.1 31.7 L68.0 32.1 L70.0 32.5 L72.1 32.9 L74.4 33.3 L76.8 33.7 L79.4 34.2 L82.0 34.6 L84.7 35.0 L87.4 35.5 L90.1 35.9 L92.7 36.3 L95.3 36.7 L97.7 37.1 L100.0 37.5 L102.2 37.9 L104.3 38.2 L106.4 38.5 L108.4 38.9 L110.4 39.2 L112.3 39.5 L114.2 39.8 L116.0 40.1 L117.8 40.4 L119.4 40.7 L121.0 41.0 L122.5 41.3 L123.9 41.6 L125.2 41.8 L126.4 42.1 L127.5 42.4 L128.5 42.6 L129.5 42.8 L130.5 43.1 L131.4 43.3 L132.3 43.6 L133.2 43.9 L134.1 44.2 L135.0 44.5 L135.9 44.8 L136.8 45.2 L137.7 45.6 L138.6 46.0 L139.5 46.5 L140.3 46.9 L141.1 47.3 L141.9 47.8 L142.7 48.2 L143.5 48.6 L144.3 49.0 L145.0 49.3 L145.7 49.6 L146.4 49.9 L147.0 50.2 L147.6 50.4 L148.2 50.7 L148.8 50.9 L149.3 51.2 L149.9 51.4 L150.5 51.6 L151.1 51.9 L151.8 52.2 L152.5 52.5 L153.3 52.8 L154.1 53.2 L154.9 53.6 L155.7 54.0 L156.6 54.4 L157.5 54.8 L158.4 55.2 L159.3 55.6 L160.1 56.0 L160.9 56.4 L161.7 56.7 L162.5 57.0 L163.2 57.3 L163.9 57.6 L164.6 57.8 L165.3 58.1 L165.9 58.3 L166.6 58.5 L167.2 58.7 L167.8 58.9 L168.4 59.1 L168.9 59.2 L169.5 59.4 L170.0 59.5 L170.5 59.6 L171.0 59.7 L171.5 59.9 L171.9 60.0 L172.3 60.1 L172.7 60.1 L173.1 60.2 L173.5 60.2 L173.9 60.2 L174.3 60.2 L174.6 60.1 L175.0 60.0 L175.4 59.8 L175.7 59.7 L176.0 59.4 L176.4 59.2 L176.7 58.9 L177.0 58.6 L177.3 58.2 L177.6 57.9 L177.9 57.5 L178.2 57.1 L178.5 56.7 L178.8 56.3 L179.1 55.9 L179.4 55.4 L179.7 54.9 L180.0 54.3 L180.3 53.8 L180.6 53.2 L180.9 52.6 L181.2 52.0 L181.5 51.5 L181.8 51.0 L182.1 50.5 L182.5 50.0 L182.9 49.6 L183.3 49.1 L183.7 48.7 L184.1 48.3 L184.5 47.9 L184.9 47.5 L185.4 47.2 L185.8 46.8 L186.2 46.5 L186.7 46.3 L187.1 46.0 L187.5 45.8 L187.9 45.6 L188.3 45.5 L188.6 45.4 L189.0 45.3 L189.3 45.3 L189.7 45.3 L190.1 45.3 L190.5 45.3 L190.9 45.3 L191.4 45.4 L191.9 45.4 L192.5 45.5 L193.2 45.6 L193.8 45.7 L194.6 45.8 L195.4 45.9 L196.2 46.1 L197.0 46.2 L197.9 46.4 L198.8 46.6 L199.7 46.8 L200.6 47.0 L201.6 47.3 L202.5 47.5 L203.4 47.7 L204.3 48.0 L205.2 48.2 L206.0 48.5 L206.9 48.7 L207.8 49.0 L208.8 49.3 L209.8 49.6 L210.9 50.0 L212.2 50.4 L213.5 50.8 L215.0 51.3 L216.7 51.9 L218.7 52.6 L221.0 53.3 L223.3 54.2 L225.8 55.0 L228.3 55.9 L230.7 56.7 L233.1 57.6 L235.2 58.3 L237.1 59.0 L238.8 59.6 L240.0 60.0" fill="none" stroke="#4a4aff" stroke-width="1" stroke-linejoin="round" />
<path d="M52.0 46.3 L53.9 46.2 L56.3 46.0 L59.1 45.8 L62.3 45.6 L65.8 45.4 L69.4 45.2 L73.2 44.9 L76.9 44.7 L80.5 44.4 L84.0 44.2 L87.2 44.0 L90.0 43.8 L92.6 43.6 L95.1 43.4 L97.5 43.3 L99.8 43.1 L102.0 42.9 L104.1 42.7 L106.1 42.6 L108.1 42.4 L109.9 42.3 L111.7 42.2 L113.4 42.1 L115.0 42.0 L116.5 41.9 L117.9 41.9 L119.1 41.8 L120.3 41.8 L121.3 41.8 L122.3 41.8 L123.3 41.8 L124.2 41.8 L125.0 41.8 L125.9 41.9 L126.7 41.9 L127.5 42.0 L128.3 42.1 L129.0 42.2 L129.7 42.2 L130.4 42.3 L131.0 42.5 L131.6 42.6 L132.1 42.7 L132.7 42.9 L133.2 43.1 L133.8 43.3 L134.4 43.5 L135.0 43.8 L135.6 44.1 L136.3 44.4 L136.9 44.8 L137.6 45.2 L138.3 45.7 L138.9 46.1 L139.6 46.6 L140.2 47.0 L140.8 47.5 L141.4 47.9 L142.0 48.4 L142.5 48.8 L143.0 49.2 L143.5 49.7 L143.9 50.1 L144.4 50.6 L144.8 51.0 L145.2 51.5 L145.5 51.9 L145.9 52.3 L146.3 52.7 L146.7 53.1 L147.1 53.5 L147.5 53.8 L147.9 54.1 L148.3 54.4 L148.7 54.7 L149.1 54.9 L149.5 55.2 L149.8 55.4 L150.2 55.6 L150.6 55.8 L151.1 56.0 L151.5 56.1 L152.0 56.2 L152.5 56.3 L153.0 56.4 L153.6 56.4 L154.1 56.4 L154.7 56.4 L155.3 56.3 L155.9 56.2 L156.6 56.2 L157.2 56.1 L157.9 55.9 L158.6 55.8 L159.3 55.7 L160.0 55.5 L160.7 55.3 L161.5 55.1 L162.3 54.9 L163.1 54.7 L164.0 54.4 L164.8 54.2 L165.7 53.9 L166.6 53.6 L167.4 53.4 L168.3 53.1 L169.2 52.8 L170.0 52.5 L170.8 52.2 L171.7 51.9 L172.5 51.6 L173.3 51.3 L174.2 50.9 L175.0 50.6 L175.8 50.3 L176.7 49.9 L177.5 49.6 L178.3 49.3 L179.2 49.1 L180.0 48.8 L180.8 48.6 L181.6 48.4 L182.4 48.2 L183.2 48.0 L184.0 47.9 L184.8 47.7 L185.7 47.6 L186.5 47.4 L187.3 47.3 L188.2 47.1 L189.1 47.0 L190.0 46.8 L191.0 46.6 L191.9 46.4 L192.9 46.2 L194.0 46.0 L195.0 45.8 L196.1 45.6 L197.2 45.5 L198.2 45.3 L199.3 45.1 L200.4 44.9 L201.5 44.7 L202.5 44.5 L203.5 44.3 L204.6 44.1 L205.6 43.9 L206.7 43.7 L207.7 43.5 L208.8 43.4 L209.8 43.2 L210.8 43.0 L211.9 42.9 L212.9 42.7 L214.0 42.6 L215.0 42.5 L216.1 42.4 L217.1 42.4 L218.2 42.3 L219.4 42.3 L220.5 42.3 L221.6 42.2 L222.6 42.3 L223.7 42.3 L224.7 42.3 L225.7 42.4 L226.6 42.4 L227.5 42.5 L228.3 42.6 L229.1 42.7 L229.8 42.9 L230.5 43.0 L231.1 43.2 L231.7 43.4 L232.3 43.5 L232.9 43.7 L233.4 43.9 L234.0 44.1 L234.5 44.3 L235.0 44.5 L235.5 44.7 L235.9 44.8 L236.3 44.9 L236.7 45.1 L237.0 45.2 L237.3 45.3 L237.7 45.5 L238.1 45.7 L238.5 45.9 L238.9 46.1 L239.4 46.4 L240.0 46.8 L240.7 47.2 L241.4 47.7 L242.1 48.3 L243.0 48.9 L243.8 49.6 L244.7 50.2 L245.6 50.9 L246.5 51.6 L247.4 52.2 L248.3 52.8 L249.2 53.3 L250.0 53.8 L250.8 54.2 L251.7 54.6 L252.5 55.0 L253.3 55.3 L254.2 55.6 L255.0 55.9 L255.8 56.2 L256.7 56.5 L257.5 56.7 L258.3 56.9 L259.2 57.1 L260.0 57.3 L260.8 57.5 L261.6 57.6 L262.3 57.7 L263.0 57.9 L263.7 58.0 L264.4 58.0 L265.1 58.1 L265.9 58.1 L266.8 58.1 L267.8 58.1 L268.8 58.1 L270.0 58.0 L271.3 57.9 L272.7 57.8 L274.2 57.6 L275.7 57.4 L277.4 57.2 L279.1 57.0 L280.8 56.7 L282.6 56.5 L284.4 56.2 L286.3 56.0 L288.1 55.7 L290.0 55.5 L291.9 55.3 L293.9 55.0 L295.9 54.8 L298.0 54.5 L300.1 54.3 L302.2 54.0 L304.3 53.7 L306.5 53.5 L308.6 53.2 L310.8 53.0 L312.9 52.7 L315.0 52.5 L317.1 52.3 L319.2 52.0 L321.2 51.8 L323.3 51.6 L325.4 51.4 L327.5 51.1 L329.6 50.9 L331.7 50.7 L333.8 50.5 L335.8 50.3 L337.9 50.2 L340.0 50.0 L342.1 49.9 L344.2 49.7 L346.2 49.6 L348.3 49.5 L350.4 49.4 L352.5 49.3 L354.6 49.2 L356.7 49.1 L358.8 49.0 L360.8 49.0 L362.9 48.9 L365.0 48.8 L367.0 48.7 L368.9 48.7 L370.7 48.6 L372.4 48.5 L374.2 48.5 L375.9 48.4 L377.8 48.4 L379.8 48.3 L382.0 48.3 L384.4 48.3 L387.0 48.2 L390.0 48.2 L393.3 48.2 L397.0 48.2 L401.0 48.1 L405.2 48.1 L409.6 48.1 L414.1 48.1 L418.6 48.1 L423.1 48.1 L427.6 48.2 L432.0 48.2 L436.1 48.2 L440.0 48.2 L443.8 48.2 L447.7 48.2 L451.6 48.3 L455.6 48.3 L459.4 48.4 L463.1 48.4 L466.7 48.4 L470.0 48.5 L473.0 48.5 L475.8 48.6 L478.1 48.6 L480.0 48.6" fill="none" stroke="#2f9a2f" stroke-width="1" stroke-linejoin="round" />
<line x1="52.0" y1="67.5" x2="700.0" y2="67.5" stroke="#ff4fa8" stroke-width="1" stroke-dasharray="11 4"/>
<path d="M52.0 62.2 L52.6 62.3 L53.2 62.4 L53.8 62.5 L54.4 62.6 L55.0 62.6 L55.6 62.7 L56.2 62.8 L56.8 62.9 L57.4 62.9 L58.0 63.0 L58.6 63.1 L59.2 63.2 L59.8 63.3 L60.4 63.3 L61.0 63.4 L61.6 63.5 L62.2 63.6 L62.8 63.7 L63.4 63.7 L64.0 63.8 L64.6 63.9 L65.2 64.0 L65.8 64.1 L66.4 64.2 L67.0 64.2 L67.5 64.3 L68.1 64.4 L68.7 64.5 L69.3 64.6 L69.9 64.7 L70.5 64.8 L71.1 64.9 L71.7 65.0 L72.3 65.1 L72.9 65.2 L73.5 65.3 L74.1 65.3 L74.7 65.5 L75.3 65.6 L75.9 65.7 L76.5 65.8 L77.1 65.9 L77.7 66.0 L78.3 66.1 L78.9 66.2 L79.5 66.3 L80.1 66.4 L80.7 66.6 L81.3 66.7 L81.9 66.8 L82.5 66.9 L83.1 67.1 L83.7 67.2 L84.3 67.3 L84.9 67.5 L85.5 67.6 L86.1 67.7 L86.7 67.8 L87.3 68.0 L87.9 68.1 L88.5 68.3 L89.1 68.4 L89.7 68.5 L90.3 68.7 L90.9 68.8 L91.5 68.9 L92.1 69.1 L92.7 69.2 L93.3 69.4 L93.9 69.5 L94.5 69.7 L95.0 69.8 L95.6 70.0 L96.2 70.1 L96.8 70.3 L97.4 70.4 L98.0 70.6 L98.6 70.7 L99.2 70.9 L99.8 71.0 L100.4 71.2 L101.0 71.4 L101.6 71.5 L102.2 71.7 L102.8 71.8 L103.4 72.0 L104.0 72.1 L104.6 72.2 L105.2 72.4 L105.8 72.5 L106.4 72.7 L107.0 72.8 L107.6 73.0 L108.2 73.1 L108.8 73.3 L109.4 73.4 L110.0 73.6 L110.6 73.7 L111.2 73.9 L111.8 74.0 L112.4 74.2 L113.0 74.3 L113.6 74.5 L114.2 74.6 L114.8 74.8 L115.4 75.0 L116.0 75.1 L116.6 75.3 L117.2 75.4 L117.8 75.6 L118.4 75.8 L119.0 75.9 L119.6 76.1 L120.2 76.2 L120.8 76.3 L121.4 76.4 L122.0 76.4 L122.5 76.5 L123.1 76.5 L123.7 76.6 L124.3 76.7 L124.9 76.7 L125.5 76.8 L126.1 76.9 L126.7 76.9 L127.3 77.1 L127.9 77.2 L128.5 77.4 L129.1 77.6 L129.7 77.7 L130.3 77.9 L130.9 78.1 L131.5 78.3 L132.1 78.5 L132.7 78.6 L133.3 78.8 L133.9 79.0 L134.5 79.2 L135.1 79.4 L135.7 79.6 L136.3 79.8 L136.9 79.9 L137.5 80.1 L138.1 80.3 L138.7 80.5 L139.3 80.7 L139.9 80.9 L140.5 81.1 L141.1 81.3 L141.7 81.5 L142.3 81.7 L142.9 81.9 L143.5 82.1 L144.1 82.4 L144.7 82.8 L145.3 83.2 L145.9 83.5 L146.5 16.4 L147.1 16.8 L147.7 17.1 L148.3 17.5 L148.9 17.9 L149.5 18.3 L150.1 18.6 L150.6 19.0 L151.2 19.4 L151.8 19.7 L152.4 20.1 L153.0 20.5 L153.6 20.8 L154.2 21.2 L154.8 21.6 L155.4 21.9 L156.0 22.3 L156.6 22.6 L157.2 23.0 L157.8 23.4 L158.4 23.7 L159.0 24.1 L159.6 24.4 L160.2 24.8 L160.8 25.1 L161.4 25.5 L162.0 25.8 L162.6 26.2 L163.2 26.5 L163.8 26.9 L164.4 27.2 L165.0 27.5 L165.6 27.9 L166.2 28.2 L166.8 28.5 L167.4 28.9 L168.0 29.2 L168.6 29.5 L169.2 29.8 L169.8 30.2 L170.4 30.5 L171.0 30.8 L171.6 31.1 L172.2 31.5 L172.8 31.8 L173.4 32.1 L174.0 32.4 L174.6 32.7 L175.2 33.1 L175.8 33.4 L176.4 33.7 L177.0 34.0 L177.6 34.3 L178.1 34.6 L178.7 34.9 L179.3 35.2 L179.9 35.6 L180.5 35.9 L181.1 36.2 L181.7 36.5 L182.3 36.8 L182.9 37.1 L183.5 37.4 L184.1 37.7 L184.7 38.0 L185.3 38.3 L185.9 38.6 L186.5 38.8 L187.1 39.1 L187.7 39.4 L188.3 39.7 L188.9 40.0 L189.5 40.3 L190.1 40.6 L190.7 40.8 L191.3 41.1 L191.9 41.4 L192.5 41.7 L193.1 41.9 L193.7 42.2 L194.3 42.5 L194.9 42.7 L195.5 43.0 L196.1 43.3 L196.7 43.5 L197.3 43.8 L197.9 44.0 L198.5 44.3 L199.1 44.6 L199.7 44.8 L200.3 45.1 L200.9 45.3 L201.5 45.6 L202.1 45.8 L202.7 46.1 L203.3 46.3 L203.9 46.5 L204.5 46.8 L205.1 47.0 L205.6 47.3 L206.2 47.5 L206.8 47.8 L207.4 48.0 L208.0 48.2 L208.6 48.5 L209.2 48.7 L209.8 48.9 L210.4 49.2 L211.0 49.4 L211.6 49.7 L212.2 49.9 L212.8 50.1 L213.4 50.4 L214.0 50.6 L214.6 50.8 L215.2 51.1 L215.8 51.3 L216.4 51.5 L217.0 51.7 L217.6 51.9 L218.2 52.1 L218.8 52.3 L219.4 52.5 L220.0 52.7 L220.6 52.9 L221.2 53.1 L221.8 53.3 L222.4 53.5 L223.0 53.7 L223.6 53.9 L224.2 54.0 L224.8 54.2 L225.4 54.4 L226.0 54.6 L226.6 54.8 L227.2 55.0 L227.8 55.1 L228.4 55.3 L229.0 55.5 L229.6 55.7 L230.2 55.9 L230.8 56.1 L231.4 56.3 L232.0 56.5 L232.6 56.7 L233.1 56.9 L233.7 57.1 L234.3 57.3 L234.9 57.5 L235.5 57.7 L236.1 57.9 L236.7 58.1 L237.3 58.4 L237.9 58.6 L238.5 58.8 L239.1 59.1 L239.7 59.3 L240.3 59.5 L240.9 59.8 L241.5 60.0 L242.1 60.3 L242.7 60.6 L243.3 60.8 L243.9 61.1 L244.5 61.4 L245.1 61.7 L245.7 61.9 L246.3 62.2 L246.9 62.5 L247.5 62.8 L248.1 63.1 L248.7 63.4 L249.3 63.7 L249.9 64.0 L250.5 64.3 L251.1 64.6 L251.7 64.9 L252.3 65.2 L252.9 65.5 L253.5 65.8 L254.1 66.1 L254.7 66.4 L255.3 66.8 L255.9 67.1 L256.5 67.4 L257.1 67.7 L257.7 68.0 L258.3 68.3 L258.9 68.6 L259.5 68.9 L260.1 69.2 L260.7 69.5 L261.2 69.8 L261.8 70.1 L262.4 70.3 L263.0 70.6 L263.6 70.9 L264.2 71.2 L264.8 71.5 L265.4 71.7 L266.0 72.0 L266.6 72.3 L267.2 72.5 L267.8 72.8 L268.4 73.1 L269.0 73.3 L269.6 73.6 L270.2 73.8 L270.8 74.1 L271.4 74.4 L272.0 74.6 L272.6 74.9 L273.2 75.1 L273.8 75.4 L274.4 75.6 L275.0 75.9 L275.6 76.1 L276.2 76.4 L276.8 76.7 L277.4 76.9 L278.0 77.2 L278.6 77.4 L279.2 77.7 L279.8 77.9 L280.4 78.2 L281.0 78.4 L281.6 78.6 L282.2 78.9 L282.8 79.1 L283.4 79.4 L284.0 79.6 L284.6 79.9 L285.2 80.1 L285.8 80.4 L286.4 80.6 L287.0 80.9 L287.6 81.1 L288.2 81.4 L288.7 81.6 L289.3 81.9 L289.9 82.1 L290.5 82.4 L291.1 82.6 L291.7 82.8 L292.3 83.1 L292.9 83.3 L293.5 83.5 L294.1 16.3 L294.7 16.5 L295.3 16.7 L295.9 17.0 L296.5 17.2 L297.1 17.4 L297.7 17.7 L298.3 17.9 L298.9 18.1 L299.5 18.4 L300.1 18.6 L300.7 18.8 L301.3 19.1 L301.9 19.3 L302.5 19.6 L303.1 19.8 L303.7 20.1 L304.3 20.3 L304.9 20.6 L305.5 20.9 L306.1 21.1 L306.7 21.4 L307.3 21.7 L307.9 22.0 L308.5 22.2 L309.1 22.5 L309.7 22.9 L310.3 23.2 L310.9 23.5 L311.5 23.8 L312.1 24.1 L312.7 24.5 L313.3 24.8 L313.9 25.2 L314.5 25.5 L315.1 25.9 L315.7 26.3 L316.2 26.7 L316.8 27.1 L317.4 27.5 L318.0 27.9 L318.6 28.4 L319.2 28.8 L319.8 29.3 L320.4 29.7 L321.0 30.2 L321.6 30.6 L322.2 31.1 L322.8 31.6 L323.4 32.1 L324.0 32.6 L324.6 33.1 L325.2 33.6 L325.8 34.1 L326.4 34.6 L327.0 35.1 L327.6 35.6 L328.2 36.1 L328.8 36.6 L329.4 37.1 L330.0 37.7 L330.6 38.2 L331.2 38.7 L331.8 39.3 L332.4 39.8 L333.0 40.3 L333.6 40.9 L334.2 41.4 L334.8 41.9 L335.4 42.5 L336.0 43.0 L336.6 43.6 L337.2 44.1 L337.8 44.6 L338.4 45.2 L339.0 45.7 L339.6 46.3 L340.2 46.8 L340.8 47.4 L341.4 47.9 L342.0 48.5 L342.6 49.0 L343.2 49.6 L343.8 50.2 L344.3 50.8 L344.9 51.3 L345.5 51.9 L346.1 52.6 L346.7 53.2 L347.3 53.8 L347.9 54.4 L348.5 55.0 L349.1 55.6 L349.7 56.2 L350.3 56.8 L350.9 57.5 L351.5 58.1 L352.1 58.7 L352.7 59.3 L353.3 60.0 L353.9 60.6 L354.5 61.2 L355.1 61.8 L355.7 62.4 L356.3 63.0 L356.9 63.6 L357.5 64.2 L358.1 64.8 L358.7 65.3 L359.3 65.9 L359.9 66.5 L360.5 67.0 L361.1 67.6 L361.7 68.1 L362.3 68.7 L362.9 69.3 L363.5 69.8 L364.1 70.4 L364.7 70.9 L365.3 71.4 L365.9 72.0 L366.5 72.5 L367.1 73.1 L367.7 73.6 L368.3 74.2 L368.9 74.7 L369.5 75.2 L370.1 75.8 L370.7 76.3 L371.3 76.9 L371.8 77.4 L372.4 78.0 L373.0 78.6 L373.6 79.2 L374.2 79.8 L374.8 80.4 L375.4 81.0 L376.0 81.6 L376.6 82.2 L377.2 82.8 L377.8 83.4 L378.4 16.6 L379.0 17.2 L379.6 17.8 L380.2 18.4 L380.8 19.0 L381.4 19.6 L382.0 20.3 L382.6 20.9 L383.2 21.5 L383.8 22.2 L384.4 22.8 L385.0 23.4 L385.6 24.1 L386.2 24.7 L386.8 25.4 L387.4 26.1 L388.0 26.7 L388.6 27.5 L389.2 28.2 L389.8 28.9 L390.4 29.6 L391.0 30.4 L391.6 31.2 L392.2 31.9 L392.8 32.8 L393.4 33.6 L394.0 34.4 L394.6 35.3 L395.2 36.2 L395.8 37.1 L396.4 38.0 L397.0 38.9 L397.6 39.9 L398.2 40.8 L398.8 41.8 L399.3 42.8 L399.9 43.8 L400.5 44.8 L401.1 45.8 L401.7 46.8 L402.3 47.8 L402.9 48.8 L403.5 49.8 L404.1 50.8 L404.7 51.9 L405.3 52.9 L405.9 54.0 L406.5 55.0 L407.1 56.1 L407.7 57.2 L408.3 58.3 L408.9 59.3 L409.5 60.4 L410.1 61.5 L410.7 62.6 L411.3 63.7 L411.9 64.8 L412.5 65.9 L413.1 67.0 L413.7 68.1 L414.3 69.2 L414.9 70.3 L415.5 71.4 L416.1 72.5 L416.7 73.5 L417.3 74.6 L417.9 75.7 L418.5 76.8 L419.1 77.9 L419.7 79.0 L420.3 80.1 L420.9 81.2 L421.5 82.4 L422.1 83.5 L422.7 17.2 L423.3 18.3 L423.9 19.5 L424.5 20.7 L425.1 21.9 L425.7 23.1 L426.3 24.3 L426.8 25.5 L427.4 26.7 L428.0 28.0 L428.6 29.2 L429.2 30.4 L429.8 31.7 L430.4 33.0 L431.0 34.2 L431.6 35.5 L432.2 36.8 L432.8 38.1 L433.4 39.5 L434.0 40.8 L434.6 42.1 L435.2 43.5 L435.8 44.8 L436.4 46.2 L437.0 47.5 L437.6 48.9 L438.2 50.3 L438.8 51.7 L439.4 53.1 L440.0 54.6 L440.6 56.0 L441.2 57.4 L441.8 58.9 L442.4 60.4 L443.0 61.8 L443.6 63.3 L444.2 64.8 L444.8 66.3 L445.4 67.8 L446.0 69.3 L446.6 70.8 L447.2 72.3 L447.8 73.9 L448.4 75.4 L449.0 77.0 L449.6 78.5 L450.2 80.1 L450.8 81.7 L451.4 83.3 L452.0 17.4 L452.6 19.0 L453.2 20.6 L453.8 22.3 L454.4 23.9 L454.9 25.6 L455.5 27.3 L456.1 29.0 L456.7 30.7 L457.3 32.4 L457.9 34.1 L458.5 35.9 L459.1 37.6 L459.7 39.4 L460.3 41.2 L460.9 43.0 L461.5 44.8 L462.1 46.6 L462.7 48.4 L463.3 50.3 L463.9 52.1 L464.5 54.0 L465.1 55.9 L465.7 57.8 L466.3 59.7 L466.9 61.6 L467.5 63.5 L468.1 65.4 L468.7 67.3 L469.3 69.2 L469.9 71.1 L470.5 73.1 L471.1 75.0 L471.7 77.0 L472.3 79.0 L472.9 81.0 L473.5 83.0 L474.1 17.5 L474.7 19.6 L475.3 21.6 L475.9 23.7 L476.5 25.8 L477.1 27.9 L477.7 30.1 L478.3 32.2 L478.9 34.4 L479.5 36.5 L480.1 38.7 L480.7 40.9 L481.3 43.1 L481.9 45.4 L482.4 47.6 L483.0 49.9 L483.6 52.2 L484.2 54.5 L484.8 56.8 L485.4 59.1 L486.0 61.5 L486.6 63.8 L487.2 66.2 L487.8 68.6 L488.4 71.0 L489.0 73.4 L489.6 75.9 L490.2 78.3 L490.8 80.8 L491.4 83.3 L492.0 18.3 L492.6 20.8 L493.2 23.4 L493.8 26.0 L494.4 28.6 L495.0 31.2 L495.6 33.8 L496.2 36.4 L496.8 39.1 L497.4 41.8 L498.0 44.5 L498.6 47.2 L499.2 50.0 L499.8 52.7 L500.4 55.5 L501.0 58.3 L501.6 61.2 L502.2 64.0 L502.8 66.9 L503.4 69.8 L504.0 72.7 L504.6 75.6 L505.2 78.6 L505.8 81.5 L506.4 17.0 L507.0 20.0 L507.6 23.1 L508.2 26.1 L508.8 29.2 L509.4 32.3 L509.9 35.5 L510.5 38.6 L511.1 41.8 L511.7 45.0 L512.3 48.2 L512.9 51.4 L513.5 54.7 L514.1 58.0 L514.7 61.3 L515.3 64.6 L515.9 68.0 L516.5 71.4 L517.1 74.8 L517.7 78.2 L518.3 81.7 L518.9 17.7 L519.5 21.2 L520.1 24.7 L520.7 28.3 L521.3 31.9 L521.9 35.5 L522.5 39.1 L523.1 42.8 L523.7 46.5 L524.3 50.2 L524.9 53.9 L525.5 57.7 L526.1 61.5 L526.7 65.3 L527.3 69.1 L527.9 73.0 L528.5 76.8 L529.1 80.6 L529.7 17.0 L530.3 20.8 L530.9 24.7 L531.5 28.6 L532.1 32.5 L532.7 36.5 L533.3 40.5 L533.9 44.5 L534.5 48.6 L535.1 52.7 L535.7 56.8 L536.3 60.9 L536.9 65.1 L537.5 69.3 L538.0 73.5 L538.6 77.8 L539.2 82.1 L539.8 18.9 L540.4 23.3 L541.0 27.7 L541.6 32.1 L542.2 36.6 L542.8 41.1 L543.4 45.6 L544.0 50.2 L544.6 54.7 L545.2 59.4 L545.8 64.0 L546.4 68.7 L547.0 73.4 L547.6 78.2 L548.2 82.7 L548.8 19.6 L549.4 24.1 L550.0 28.5 L550.6 33.0 L551.2 37.5 L551.8 42.1 L552.4 46.7 L553.0 51.3 L553.6 55.9 L554.2 60.6 L554.8 65.3 L555.4 70.1 L556.0 74.9 L556.6 79.7 L557.2 17.1 L557.8 22.0 L558.4 26.9 L559.0 31.9 L559.6 36.9 L560.2 41.9 L560.8 47.0 L561.4 52.1 L562.0 57.2 L562.6 62.4 L563.2 67.6 L563.8 72.9 L564.4 78.2 L565.0 83.5 L565.0 83.5 L565.0 21.3 L565.5 21.4 L566.1 26.8 L566.7 32.3 L567.3 37.8 L567.9 43.3 L568.5 48.9 L569.1 54.5 L569.7 60.1 L570.3 65.8 L570.9 71.5 L571.5 77.3 L572.1 83.1 L572.2 83.2 L572.2 20.7 L572.7 21.5 L573.3 27.4" fill="none" stroke="#3030ff" stroke-width="1" stroke-dasharray="1.2 1.7" stroke-linejoin="bevel"/>
<path d="M572.7 21.5 L573.3 27.4 L573.9 33.3 L574.5 39.3 L575.1 45.3 L575.7 51.4 L576.3 57.5 L576.9 63.7 L577.5 69.9 L578.1 76.1 L578.7 82.4 L578.8 82.7 L578.8 20.0 L579.3 21.2 L579.9 27.6 L580.5 34.0 L581.1 40.5 L581.7 47.0 L582.3 53.6 L582.9 60.2 L583.5 66.9 L584.1 73.6 L584.7 80.3 L585.0 81.6 L585.0 18.4 L585.3 19.6 L585.9 26.5 L586.5 33.4 L587.1 40.3 L587.7 47.3 L588.3 54.3 L588.9 61.4 L589.5 68.6 L590.1 75.8 L590.7 83.2 L590.7 83.5 L590.7 19.7 L591.3 23.1 L591.9 30.5 L592.5 38.0 L593.0 45.6 L593.6 53.2 L594.2 60.9 L594.8 68.6 L595.4 76.3 L596.0 80.4 L596.0 16.4 L596.0 16.7 L596.6 24.5 L597.2 32.5 L597.8 40.5 L598.4 48.5 L599.0 56.6 L599.6 64.7 L600.2 73.0 L600.8 81.2 L601.0 82.6 L601.0 18.9 L601.4 22.0 L602.0 30.4 L602.6 38.9 L603.2 47.4 L603.8 55.9 L604.4 64.6 L605.0 73.2 L605.6 82.0 L605.7 82.9 L605.7 19.4 L606.2 23.3 L606.8 32.1 L607.4 41.1 L608.0 50.0 L608.6 59.1 L609.2 68.2 L609.8 77.9" fill="none" stroke="#1818f8" stroke-width="1.15" stroke-dasharray="1.3 1.5" stroke-linejoin="bevel"/>
<path d="M609.8 77.9 L610.1 81.1 L610.1 18.2 L610.4 20.5 L611.0 30.7 L611.6 40.9 L612.2 51.3 L612.8 61.7 L613.4 72.1 L614.0 82.7 L614.0 83.3 L614.0 20.5 L614.6 25.8 L615.2 36.5 L615.8 47.2 L616.4 58.1 L617.0 69.0 L617.6 80.0 L617.8 82.0 L617.8 19.5 L618.2 23.5 L618.8 34.7 L619.4 45.9 L620.0 57.2 L620.5 68.6 L621.1 80.0 L621.3 82.1 L621.3 19.8 L621.7 24.0 L622.3 35.6 L622.9 47.3 L623.5 59.1 L624.1 70.9 L624.7 82.9 L624.8 83.4 L624.8 21.3 L625.3 27.4 L625.9 39.5 L626.5 51.7 L627.1 63.9 L627.7 76.3 L628.1 80.4 L628.1 18.5 L628.3 21.2 L628.9 33.7 L629.5 46.4 L630.1 59.0 L630.7 71.8 L631.3 78.4 L631.3 16.7 L631.3 17.2 L631.9 30.2 L632.5 43.2 L633.1 56.3 L633.7 69.6 L634.3 82.9 L634.3 83.4 L634.3 21.9 L634.9 28.8 L635.5 42.3 L636.1 55.9 L636.7 69.6 L637.3 83.4 L637.3 83.6 L637.3 22.3 L637.9 29.7 L638.5 43.7 L639.1 57.8 L639.7 71.9 L640.2 78.4 L640.2 17.4 L640.3 18.7 L640.9 33.1 L641.5 47.5 L642.1 62.1 L642.7 76.8 L643.0 80.5 L643.0 19.9 L643.3 24.0 L643.9 38.9 L644.5 53.8 L645.1 68.9 L645.6 74.1 L645.6 16.5 L645.7 16.6 L646.3 31.9 L646.9 47.2 L647.5 62.7" fill="none" stroke="#1414f4" stroke-width="1.45" stroke-dasharray="1.5 1.1" stroke-linejoin="bevel"/>
<path d="M646.9 47.2 L647.5 62.7 L648.1 78.3 L648.3 78.9 L648.3 25.3 L648.6 26.5 L649.2 42.3 L649.8 58.2 L650.4 74.3 L651.0 22.9 L651.6 39.1 L652.2 55.4 L652.8 71.9 L653.4 21.1 L654.0 37.8 L654.6 54.7 L655.2 71.7 L655.8 21.2 L656.4 38.5 L657.0 55.8 L657.6 73.2 L658.2 23.3 L658.8 41.0 L659.4 58.8 L660.0 76.7 L660.6 27.3 L661.2 45.5 L661.8 63.8 L662.4 82.2 L663.0 33.2 L663.6 51.9 L664.2 70.7 L664.8 22.1 L665.4 41.2 L666.0 60.4 L666.6 79.7 L667.2 31.7 L667.8 51.3 L668.4 71.0 L669.0 23.3 L669.6 43.3 L670.2 63.5 L670.8 83.7 L671.4 36.6 L672.0 57.2 L672.6 77.9 L673.2 31.2 L673.8 52.1 L674.4 73.3 L675.0 27.0 L675.6 48.4 L676.1 69.9 L676.7 24.1 L677.3 46.0 L677.9 67.9 L678.5 22.5 L679.1 44.6 L679.7 67.0 L680.3 21.9 L680.9 44.6 L681.5 67.4 L682.1 22.8 L682.7 45.9 L683.3 69.2 L683.9 25.1 L684.5 48.7 L685.1 72.4 L685.7 28.8 L686.3 52.9 L686.9 77.2 L687.5 34.1 L688.1 58.6 L688.7 83.4 L689.3 40.8 L689.9 65.8 L690.5 23.6 L691.1 49.0 L691.7 74.6 L692.3 32.9 L692.9 58.8 L693.5 17.4 L694.1 43.7 L694.7 70.2 L695.3 29.4 L695.9 56.2 L696.5 83.2 L697.1 42.9 L697.7 70.3 L698.3 30.4 L698.9 58.2 L699.5 18.7 L700.1 46.8 L700.7 75.1 L701.3 36.2 L701.9 64.9 L702.5 26.3 L703.1 55.5 L703.6 17.3 L704.2 46.8 L704.8 76.6 L705.4 39.0 L706.0 69.1 L706.6 32.0 L707.2 62.5 L707.8 25.8 L708.4 56.7 L709.0 20.4 L709.6 51.8 L710.2 83.4 L710.8 47.7 L711.4 79.7 L712.0 44.5 L712.6 77.0 L713.2 42.2 L713.8 75.1 L714.4 40.7 L715.0 74.1 L715.6 40.2 L716.2 74.0 L716.8 40.6 L717.4 74.9 L718.0 41.9 L718.6 76.6 L719.2 44.1 L719.8 79.4 L720.4 47.3 L721.0 83.0 L721.6 51.5 L722.2 20.2 L722.8 56.7 L723.4 25.9 L724.0 62.8 L724.6 32.5 L725.2 70.0 L725.8 40.2 L726.4 78.1 L727.0 48.8 L727.6 19.8 L728.2 58.6 L728.8 30.1 L729.4 69.4 L730.0 41.4 L730.6 81.2 L731.2 53.8 L731.7 26.6 L732.3 67.3 L732.9 40.7 L733.5 81.9 L734.1 55.8 L734.7 30.1 L735.3 72.1 L735.9 46.9 L736.5 22.0 L737.1 64.9 L737.7 40.6 L738.3 16.6 L738.9 60.3 L739.5 36.9 L740.1 81.3 L740.7 58.5 L741.3 35.9 L741.9 81.2 L742.5 59.3 L743.1 37.7 L743.7 16.4 L744.3 63.0 L744.9 42.3 L745.5 22.0 L746.1 69.5 L746.7 49.8 L747.3 30.4 L747.9 78.8 L748.5 60.1 L749.1 41.8 L749.7 23.7 L750.3 73.5 L750.9 56.1 L751.5 39.1 L752.1 22.4 L752.7 73.6 L753.3 57.6 L753.9 41.9 L754.5 26.6 L755.1 79.2 L755.7 64.6 L756.3 50.4 L756.9 36.5 L757.5 23.0 L758.1 77.4 L758.7 64.6 L759.2 52.3 L759.8 40.2 L760.4 28.6 L761.0 17.3 L761.6 74.0 L762.2 63.5 L762.8 53.4 L763.4 43.7 L764.0 34.3 L764.6 25.4 L765.2 16.9 L765.8 76.3 L766.4 68.5 L767.0 61.2 L767.6 54.3 L768.2 47.8 L768.8 41.7 L769.4 36.1 L770.0 30.8 L770.6 26.0 L771.2 21.6 L771.8 17.6" fill="none" stroke="#1010f0" stroke-width="1.2" stroke-dasharray="1.4 1.3" stroke-linejoin="bevel"/>
<path d="M52.0 57.5 L52.6 57.5 L53.2 57.6 L53.8 57.6 L54.4 57.7 L55.0 57.7 L55.6 57.7 L56.2 57.8 L56.8 57.8 L57.4 57.8 L58.0 57.9 L58.6 57.9 L59.2 58.0 L59.8 58.0 L60.4 58.0 L61.0 58.1 L61.6 58.1 L62.2 58.1 L62.8 58.2 L63.4 58.2 L64.0 58.2 L64.6 58.3 L65.2 58.3 L65.8 58.3 L66.4 58.4 L67.0 58.4 L67.5 58.5 L68.1 58.5 L68.7 58.5 L69.3 58.6 L69.9 58.6 L70.5 58.6 L71.1 58.7 L71.7 58.7 L72.3 58.7 L72.9 58.8 L73.5 58.8 L74.1 58.8 L74.7 58.9 L75.3 58.9 L75.9 59.0 L76.5 59.0 L77.1 59.0 L77.7 59.1 L78.3 59.1 L78.9 59.1 L79.5 59.2 L80.1 59.2 L80.7 59.2 L81.3 59.3 L81.9 59.3 L82.5 59.3 L83.1 59.4 L83.7 59.4 L84.3 59.5 L84.9 59.5 L85.5 59.5 L86.1 59.6 L86.7 59.6 L87.3 59.6 L87.9 59.7 L88.5 59.7 L89.1 59.7 L89.7 59.8 L90.3 59.8 L90.9 59.9 L91.5 59.9 L92.1 59.9 L92.7 60.0 L93.3 60.0 L93.9 60.0 L94.5 60.1 L95.0 60.1 L95.6 60.2 L96.2 60.2 L96.8 60.2 L97.4 60.3 L98.0 60.3 L98.6 60.3 L99.2 60.4 L99.8 60.4 L100.4 60.5 L101.0 60.5 L101.6 60.5 L102.2 60.6 L102.8 60.6 L103.4 60.6 L104.0 60.7 L104.6 60.7 L105.2 60.8 L105.8 60.8 L106.4 60.8 L107.0 60.9 L107.6 60.9 L108.2 61.0 L108.8 61.0 L109.4 61.0 L110.0 61.1 L110.6 61.1 L111.2 61.2 L111.8 61.2 L112.4 61.3 L113.0 61.3 L113.6 61.3 L114.2 61.4 L114.8 61.4 L115.4 61.5 L116.0 61.5 L116.6 61.5 L117.2 61.6 L117.8 61.6 L118.4 61.7 L119.0 61.7 L119.6 61.7 L120.2 61.8 L120.8 61.8 L121.4 61.9 L122.0 61.9 L122.5 62.0 L123.1 62.0 L123.7 62.1 L124.3 62.1 L124.9 62.2 L125.5 62.2 L126.1 62.2 L126.7 62.3 L127.3 62.3 L127.9 62.4 L128.5 62.4 L129.1 62.5 L129.7 62.5 L130.3 62.6 L130.9 62.6 L131.5 62.6 L132.1 62.7 L132.7 62.7 L133.3 62.8 L133.9 62.8 L134.5 62.9 L135.1 62.9 L135.7 63.0 L136.3 63.1 L136.9 63.1 L137.5 63.2 L138.1 63.2 L138.7 63.3 L139.3 63.3 L139.9 63.4 L140.5 63.4 L141.1 63.5 L141.7 63.5 L142.3 63.6 L142.9 63.6 L143.5 63.7 L144.1 63.7 L144.7 63.8 L145.3 63.8 L145.9 63.9 L146.5 63.9 L147.1 64.0 L147.7 64.1 L148.3 64.1 L148.9 64.2 L149.5 64.2 L150.1 64.3 L150.6 64.3 L151.2 64.4 L151.8 64.5 L152.4 64.5 L153.0 64.6 L153.6 64.6 L154.2 64.7 L154.8 64.8 L155.4 64.8 L156.0 64.9 L156.6 64.9 L157.2 65.0 L157.8 65.0 L158.4 65.1 L159.0 65.2 L159.6 65.2 L160.2 65.3 L160.8 65.4 L161.4 65.4 L162.0 65.5 L162.6 65.5 L163.2 65.6 L163.8 65.7 L164.4 65.7 L165.0 65.8 L165.6 65.9 L166.2 65.9 L166.8 66.0 L167.4 66.0 L168.0 66.1 L168.6 66.2 L169.2 66.2 L169.8 66.3 L170.4 66.4 L171.0 66.4 L171.6 66.5 L172.2 66.6 L172.8 66.6 L173.4 66.7 L174.0 66.7 L174.6 66.8 L175.2 66.9 L175.8 66.9 L176.4 67.0 L177.0 67.1 L177.6 67.1 L178.1 67.2 L178.7 67.3 L179.3 67.3 L179.9 67.4 L180.5 67.5 L181.1 67.5 L181.7 67.6 L182.3 67.7 L182.9 67.7 L183.5 67.8 L184.1 67.9 L184.7 67.9 L185.3 68.0 L185.9 68.1 L186.5 68.1 L187.1 68.2 L187.7 68.3 L188.3 68.3 L188.9 68.4 L189.5 68.5 L190.1 68.6 L190.7 68.6 L191.3 68.7 L191.9 68.8 L192.5 68.8 L193.1 68.9 L193.7 69.0 L194.3 69.0 L194.9 69.1 L195.5 69.2 L196.1 69.2 L196.7 69.3 L197.3 69.4 L197.9 69.5 L198.5 69.5 L199.1 69.6 L199.7 69.7 L200.3 69.8 L200.9 69.8 L201.5 69.9 L202.1 70.0 L202.7 70.0 L203.3 70.1 L203.9 70.2 L204.5 70.3 L205.1 70.3 L205.6 70.4 L206.2 70.5 L206.8 70.5 L207.4 70.6 L208.0 70.7 L208.6 70.8 L209.2 70.8 L209.8 70.9 L210.4 71.0 L211.0 71.1 L211.6 71.1 L212.2 71.2 L212.8 71.3 L213.4 71.4 L214.0 71.4 L214.6 71.5 L215.2 71.6 L215.8 71.7 L216.4 71.8 L217.0 71.8 L217.6 71.9 L218.2 72.0 L218.8 72.1 L219.4 72.1 L220.0 72.2 L220.6 72.3 L221.2 72.4 L221.8 72.4 L222.4 72.5 L223.0 72.6 L223.6 72.7 L224.2 72.8 L224.8 72.8 L225.4 72.9 L226.0 73.0 L226.6 73.1 L227.2 73.2 L227.8 73.3 L228.4 73.3 L229.0 73.4 L229.6 73.5 L230.2 73.6 L230.8 73.7 L231.4 73.7 L232.0 73.8 L232.6 73.9 L233.1 74.0 L233.7 74.1 L234.3 74.2 L234.9 74.3 L235.5 74.4 L236.1 74.4 L236.7 74.5 L237.3 74.6 L237.9 74.7 L238.5 74.8 L239.1 74.9 L239.7 75.0 L240.3 75.1 L240.9 75.2 L241.5 75.3 L242.1 75.4 L242.7 75.5 L243.3 75.6 L243.9 75.7 L244.5 75.8 L245.1 75.9 L245.7 76.0 L246.3 76.1 L246.9 76.2 L247.5 76.3 L248.1 76.4 L248.7 76.5 L249.3 76.6 L249.9 76.8 L250.5 76.9 L251.1 77.0 L251.7 77.1 L252.3 77.2 L252.9 77.4 L253.5 77.5 L254.1 77.6 L254.7 77.8 L255.3 77.9 L255.9 78.0 L256.5 78.2 L257.1 78.3 L257.7 78.5 L258.3 78.6 L258.9 78.8 L259.5 78.9 L260.1 79.1 L260.7 79.2 L261.2 79.4 L261.8 79.6 L262.4 79.7 L263.0 79.9 L263.6 80.1 L264.2 80.3 L264.8 80.4 L265.4 80.6 L266.0 80.8 L266.6 81.0 L267.2 81.2 L267.8 81.4 L268.4 81.6 L269.0 81.8 L269.6 82.0 L270.2 82.2 L270.8 82.4 L271.4 82.6 L272.0 82.7 L272.6 82.9 L273.2 83.1 L273.8 83.3 L274.4 83.5 L275.0 83.6 L275.6 16.3 L276.2 16.5 L276.8 16.7 L277.4 16.9 L278.0 17.2 L278.6 17.4 L279.2 17.6 L279.8 17.8 L280.4 18.0 L281.0 18.2 L281.6 18.5 L282.2 18.7 L282.8 18.9 L283.4 19.1 L284.0 19.4 L284.6 19.6 L285.2 19.9 L285.8 20.1 L286.4 20.4 L287.0 20.6 L287.6 20.9 L288.2 21.2 L288.7 21.4 L289.3 21.7 L289.9 22.0 L290.5 22.3 L291.1 22.5 L291.7 22.8 L292.3 23.1 L292.9 23.4 L293.5 23.7 L294.1 24.0 L294.7 24.3 L295.3 24.6 L295.9 24.9 L296.5 25.1 L297.1 25.4 L297.7 25.7 L298.3 26.0 L298.9 26.3 L299.5 26.6 L300.1 26.9 L300.7 27.2 L301.3 27.5 L301.9 27.8 L302.5 28.1 L303.1 28.5 L303.7 28.8 L304.3 29.1 L304.9 29.4 L305.5 29.7 L306.1 30.0 L306.7 30.3 L307.3 30.7 L307.9 31.0 L308.5 31.3 L309.1 31.6 L309.7 32.0 L310.3 32.3 L310.9 32.6 L311.5 33.0 L312.1 33.3 L312.7 33.6 L313.3 34.0 L313.9 34.3 L314.5 34.7 L315.1 35.0 L315.7 35.4 L316.2 35.7 L316.8 36.1 L317.4 36.5 L318.0 36.8 L318.6 37.2 L319.2 37.5 L319.8 37.9 L320.4 38.3 L321.0 38.6 L321.6 39.0 L322.2 39.4 L322.8 39.7 L323.4 40.1 L324.0 40.5 L324.6 40.9 L325.2 41.2 L325.8 41.6 L326.4 42.0 L327.0 42.4 L327.6 42.8 L328.2 43.2 L328.8 43.6 L329.4 44.0 L330.0 44.4 L330.6 44.8 L331.2 45.2 L331.8 45.6 L332.4 46.0 L333.0 46.4 L333.6 46.8 L334.2 47.3 L334.8 47.7 L335.4 48.2 L336.0 48.6 L336.6 49.1 L337.2 49.5 L337.8 50.0 L338.4 50.5 L339.0 51.0 L339.6 51.4 L340.2 52.0 L340.8 52.5 L341.4 53.1 L342.0 53.6 L342.6 54.2 L343.2 54.8 L343.8 55.4 L344.3 56.0 L344.9 56.6 L345.5 57.3 L346.1 58.0 L346.7 58.7 L347.3 59.4 L347.9 60.1 L348.5 60.8 L349.1 61.6 L349.7 62.3 L350.3 63.0 L350.9 63.8 L351.5 64.5 L352.1 65.2 L352.7 66.0 L353.3 66.7 L353.9 67.4 L354.5 68.1 L355.1 68.8 L355.7 69.4 L356.3 70.1 L356.9 70.7 L357.5 71.3 L358.1 71.9 L358.7 72.4 L359.3 73.0 L359.9 73.5 L360.5 74.0 L361.1 74.5 L361.7 75.1 L362.3 75.5 L362.9 76.0 L363.5 76.5 L364.1 77.0 L364.7 77.5 L365.3 77.9 L365.9 78.4 L366.5 78.9 L367.1 79.3 L367.7 79.8 L368.3 80.2 L368.9 80.7 L369.5 81.1 L370.1 81.6 L370.7 82.0 L371.3 82.5 L371.8 82.9 L372.4 83.4 L373.0 16.3 L373.6 17.1 L374.2 18.0 L374.8 18.8 L375.4 19.6 L376.0 20.5 L376.6 21.3 L377.2 22.1 L377.8 22.9 L378.4 23.8 L379.0 24.6 L379.6 25.4 L380.2 26.3 L380.8 27.1 L381.4 27.9 L382.0 28.7 L382.6 29.6 L383.2 30.4 L383.8 31.2 L384.4 32.1 L385.0 32.9 L385.6 33.8 L386.2 34.6 L386.8 35.4 L387.4 36.3 L388.0 37.1 L388.6 38.0 L389.2 38.8 L389.8 39.7 L390.4 40.5 L391.0 41.4 L391.6 42.3 L392.2 43.1 L392.8 44.0 L393.4 44.8 L394.0 45.7 L394.6 46.6 L395.2 47.4 L395.8 48.3 L396.4 49.2 L397.0 50.0 L397.6 50.9 L398.2 51.8 L398.8 52.8 L399.3 53.7 L399.9 54.6 L400.5 55.6 L401.1 56.6 L401.7 57.5 L402.3 58.5 L402.9 59.6 L403.5 60.6 L404.1 61.6 L404.7 62.7 L405.3 63.8" fill="none" stroke="#ff1493" stroke-width="1.5" stroke-linejoin="bevel"/>
<path d="M405.3 63.8 L405.9 64.9 L406.5 66.0 L407.1 67.1 L407.7 68.2 L408.3 69.3 L408.9 70.4 L409.5 71.6 L410.1 72.7 L410.7 73.8 L411.3 75.0 L411.9 76.1 L412.5 77.3 L413.1 78.4 L413.7 79.6 L414.3 80.7 L414.9 81.8 L415.5 83.0 L416.1 82.0 L416.7 83.1 L417.3 16.8 L417.9 18.0 L418.5 19.2 L419.1 20.4 L419.7 21.6 L420.3 22.8 L420.9 24.0 L421.5 25.2 L422.1 26.5 L422.7 27.7 L423.3 29.0 L423.9 30.3 L424.5 31.6 L425.1 32.8 L425.7 34.1 L426.3 35.4 L426.8 36.8 L427.4 38.1 L428.0 39.4 L428.6 40.7 L429.2 42.1 L429.8 43.5 L430.4 44.8 L431.0 46.2 L431.6 47.6 L432.2 49.0 L432.8 50.4 L433.4 51.8 L434.0 53.2 L434.6 54.6 L435.2 56.1 L435.8 57.5 L436.4 59.0 L437.0 60.5 L437.6 62.0 L438.2 63.5 L438.8 65.0 L439.4 66.5 L440.0 68.0 L440.6 69.5 L441.2 71.1 L441.8 72.6 L442.4 74.2 L443.0 75.8 L443.6 77.3 L444.2 78.9 L444.8 80.5 L445.4 82.2 L446.0 16.3 L446.6 17.9 L447.2 19.6 L447.8 21.2 L448.4 22.9 L449.0 24.6 L449.6 26.3 L450.2 28.0 L450.8 29.7 L451.4 31.5 L452.0 33.2 L452.6 35.0 L453.2 36.7 L453.8 38.5 L454.4 40.3 L454.9 42.1 L455.5 43.9 L456.1 45.7 L456.7 47.6 L457.3 49.4 L457.9 51.3 L458.5 53.2 L459.1 55.0 L459.7 56.9 L460.3 58.9 L460.9 60.8 L461.5 62.7 L462.1 64.7 L462.7 66.6 L463.3 68.6 L463.9 70.6 L464.5 72.6 L465.1 74.6 L465.7 76.7 L466.3 78.7 L466.9 80.8 L467.5 82.9 L468.1 17.4 L468.7 19.6 L469.3 21.7 L469.9 23.8 L470.5 25.9 L471.1 28.1 L471.7 30.3 L472.3 32.5 L472.9 34.7 L473.5 36.9 L474.1 39.1 L474.7 41.4 L475.3 43.6 L475.9 45.9 L476.5 48.2 L477.1 50.5 L477.7 52.9 L478.3 55.2 L478.9 57.6 L479.5 59.9 L480.1 62.3 L480.7 64.7 L481.3 67.2 L481.9 69.6 L482.4 72.1 L483.0 74.5 L483.6 77.0 L484.2 79.5 L484.8 82.0 L485.4 17.1 L486.0 19.6 L486.6 22.2 L487.2 24.8 L487.8 27.4 L488.4 30.0 L489.0 32.7 L489.6 35.3 L490.2 38.0 L490.8 40.7 L491.4 43.4 L492.0 46.2 L492.6 48.9 L493.2 51.7 L493.8 54.5 L494.4 57.3 L495.0 60.1 L495.6 63.0 L496.2 65.8 L496.8 68.7 L497.4 71.6 L498.0 74.6 L498.6 77.5 L499.2 80.5 L499.8 83.4 L500.4 19.0 L501.0 22.0 L501.6 25.0 L502.2 28.1 L502.8 31.2 L503.4 34.3 L504.0 37.4 L504.6 40.6 L505.2 43.7 L505.8 46.9 L506.4 50.1 L507.0 53.4 L507.6 56.6 L508.2 59.9 L508.8 63.2 L509.4 66.5 L509.9 69.9 L510.5 73.3 L511.1 76.7 L511.7 80.1 L512.3 83.5 L512.9 19.5 L513.5 23.0 L514.1 26.5 L514.7 30.0 L515.3 33.5 L515.9 37.1 L516.5 40.7 L517.1 44.4 L517.7 48.0 L518.3 51.7 L518.9 55.4 L519.5 59.1 L520.1 62.9 L520.7 66.6 L521.3 70.5 L521.9 74.3 L522.5 78.1 L523.1 82.0 L523.7 18.4 L524.3 22.4 L524.9 26.3 L525.5 30.3 L526.1 34.3 L526.7 38.4 L527.3 42.4 L527.9 46.5 L528.5 50.6 L529.1 54.8 L529.7 59.0 L530.3 63.2 L530.9 67.4 L531.5 71.7 L532.1 76.0 L532.7 80.3 L533.3 17.1 L533.9 21.5 L534.5 25.9 L535.1 30.4 L535.7 34.9 L536.3 39.4 L536.9 43.9 L537.5 48.4 L538.0 53.0 L538.6 57.7 L539.2 62.3 L539.8 67.0 L540.4 71.7 L541.0 76.5 L541.6 81.2 L542.2 18.6 L542.8 23.4 L543.4 28.3 L544.0 33.2 L544.6 38.1 L545.2 43.1 L545.8 48.1 L546.4 53.2 L547.0 58.3 L547.6 63.4 L548.2 68.3 L548.8 73.0 L549.4 77.8 L550.0 82.6 L550.6 20.0 L551.2 24.8 L551.8 29.7 L552.4 34.7 L553.0 39.7 L553.6 44.7 L554.2 49.7 L554.8 54.8 L555.4 59.9 L556.0 65.0 L556.6 70.2 L557.2 75.4 L557.8 80.7 L558.4 18.5 L559.0 23.8 L559.6 29.1 L560.2 34.5 L560.8 40.0 L561.4 45.4 L562.0 50.9 L562.6 56.5 L563.2 62.0 L563.8 67.7 L564.4 73.3 L565.0 79.0 L565.4 79.1 L565.4 17.2 L565.5 17.2 L566.1 23.0 L566.7 28.8 L567.3 34.6 L567.9 40.5 L568.5 46.5 L569.1 52.4 L569.7 58.4 L570.3 64.5 L570.9 70.6 L571.5 76.7 L572.1 82.9 L572.2 83.0 L572.2 20.8 L572.7 21.6 L573.3 27.8" fill="none" stroke="#ff1493" stroke-width="2.6" stroke-linejoin="bevel"/>
<path d="M572.7 21.6 L573.3 27.8 L573.9 34.1 L574.5 40.5 L575.1 46.8 L575.7 53.3 L576.3 59.7 L576.9 66.2 L577.5 72.8 L578.1 79.4 L578.5 80.5 L578.5 18.0 L578.7 18.5 L579.3 25.2 L579.9 32.0 L580.5 38.7 L581.1 45.6 L581.7 52.4 L582.3 59.4 L582.9 66.3 L583.5 73.3 L584.1 80.4 L584.4 81.6 L584.4 18.7 L584.7 20.0 L585.3 27.2 L585.9 34.4 L586.5 41.6 L587.1 48.9 L587.7 56.3 L588.3 63.7 L588.9 71.1 L589.5 78.6 L589.9 81.0 L589.9 17.5 L590.1 18.7 L590.7 26.3 L591.3 33.9 L591.9 41.6 L592.5 49.4 L593.0 57.2 L593.6 65.0 L594.2 73.0 L594.8 80.9 L595.1 82.5 L595.1 18.6 L595.4 21.4 L596.0 29.5 L596.6 37.7 L597.2 45.8 L597.8 54.1 L598.4 62.4 L599.0 70.7 L599.6 79.1 L600.0 81.7 L600.0 18.0 L600.2 20.1 L600.8 28.6 L601.4 37.2 L602.0 45.8 L602.6 54.5 L603.2 63.3 L603.8 72.1 L604.4 81.0 L604.6 82.5 L604.6 19.0 L605.0 22.4 L605.6 31.4 L606.2 40.5 L606.8 49.6 L607.4 58.8 L608.0 68.0 L608.6 77.3 L609.0 80.8 L609.0 17.6 L609.2 19.2 L609.8 29.1" fill="none" stroke="#ff1493" stroke-width="2.2" stroke-linejoin="bevel"/>
<path d="M52.0 65.5 L52.6 65.6 L53.2 65.6 L53.8 65.7 L54.4 65.7 L55.0 65.8 L55.6 65.8 L56.2 65.9 L56.8 65.9 L57.4 66.0 L58.0 66.0 L58.6 66.1 L59.2 66.1 L59.8 66.2 L60.4 66.2 L61.0 66.3 L61.6 66.3 L62.2 66.4 L62.8 66.4 L63.4 66.5 L64.0 66.5 L64.6 66.6 L65.2 66.7 L65.8 66.7 L66.4 66.8 L67.0 66.8 L67.5 66.9 L68.1 66.9 L68.7 67.0 L69.3 67.1 L69.9 67.1 L70.5 67.2 L71.1 67.2 L71.7 67.3 L72.3 67.4 L72.9 67.4 L73.5 67.5 L74.1 67.6 L74.7 67.6 L75.3 67.7 L75.9 67.8 L76.5 67.9 L77.1 68.0 L77.7 68.0 L78.3 68.1 L78.9 68.2 L79.5 68.3 L80.1 68.4 L80.7 68.5 L81.3 68.6 L81.9 68.6 L82.5 68.7 L83.1 68.8 L83.7 68.9 L84.3 69.0 L84.9 69.1 L85.5 69.2 L86.1 69.3 L86.7 69.4 L87.3 69.5 L87.9 69.6 L88.5 69.7 L89.1 69.8 L89.7 69.9 L90.3 70.1 L90.9 70.2 L91.5 70.3 L92.1 70.4 L92.7 70.5 L93.3 70.6 L93.9 70.7 L94.5 70.8 L95.0 71.0 L95.6 71.1 L96.2 71.2 L96.8 71.3 L97.4 71.4 L98.0 71.6 L98.6 71.7 L99.2 71.8 L99.8 71.9 L100.4 72.1 L101.0 72.2 L101.6 72.3 L102.2 72.4 L102.8 72.6 L103.4 72.7 L104.0 72.8 L104.6 73.0 L105.2 73.1 L105.8 73.2 L106.4 73.4 L107.0 73.5 L107.6 73.7 L108.2 73.8 L108.8 73.9 L109.4 74.1 L110.0 74.2 L110.6 74.4 L111.2 74.5 L111.8 74.7 L112.4 74.8 L113.0 75.0 L113.6 75.1 L114.2 75.3 L114.8 75.4 L115.4 75.6 L116.0 75.7 L116.6 75.9 L117.2 76.0 L117.8 76.2 L118.4 76.3 L119.0 76.5 L119.6 76.7 L120.2 76.8 L120.8 77.0 L121.4 77.1 L122.0 77.3 L122.5 77.5 L123.1 77.6 L123.7 77.8 L124.3 77.9 L124.9 78.1 L125.5 78.3 L126.1 78.4 L126.7 78.6 L127.3 78.8 L127.9 78.9 L128.5 79.1 L129.1 79.3 L129.7 79.4 L130.3 79.6 L130.9 79.8 L131.5 80.0 L132.1 80.1 L132.7 80.3 L133.3 80.5 L133.9 80.7 L134.5 80.9 L135.1 81.1 L135.7 81.3 L136.3 81.4 L136.9 81.6 L137.5 81.8 L138.1 82.0 L138.7 82.2 L139.3 82.4 L139.9 82.6 L140.5 82.8 L141.1 83.0 L141.7 83.2 L142.3 83.4 L142.9 83.6 L143.5 83.8 L144.1 16.6 L144.7 16.9 L145.3 17.3 L145.9 17.7 L146.5 18.0 L147.1 18.4 L147.7 18.7 L148.3 19.1 L148.9 19.5 L149.5 19.8 L150.1 20.2 L150.6 20.5 L151.2 20.9 L151.8 21.2 L152.4 21.6 L153.0 22.0 L153.6 22.3 L154.2 22.7 L154.8 23.0 L155.4 23.4 L156.0 23.7 L156.6 24.1 L157.2 24.4 L157.8 24.8 L158.4 25.1 L159.0 25.5 L159.6 25.8 L160.2 26.1 L160.8 26.5 L161.4 26.8 L162.0 27.2 L162.6 27.5 L163.2 27.8 L163.8 28.1 L164.4 28.5 L165.0 28.8 L165.6 29.1 L166.2 29.4 L166.8 29.8 L167.4 30.1 L168.0 30.4 L168.6 30.7 L169.2 31.0 L169.8 31.3 L170.4 31.7 L171.0 32.0 L171.6 32.3 L172.2 32.6 L172.8 32.9 L173.4 33.2 L174.0 33.5 L174.6 33.8 L175.2 34.1 L175.8 34.4 L176.4 34.7 L177.0 35.0 L177.6 35.3 L178.1 35.6 L178.7 35.9 L179.3 36.2 L179.9 36.5 L180.5 36.8 L181.1 37.1 L181.7 37.4 L182.3 37.7 L182.9 38.0 L183.5 38.3 L184.1 38.6 L184.7 38.9 L185.3 39.1 L185.9 39.4 L186.5 39.7 L187.1 40.0 L187.7 40.3 L188.3 40.5 L188.9 40.8 L189.5 41.1 L190.1 41.3 L190.7 41.6 L191.3 41.9 L191.9 42.1 L192.5 42.4 L193.1 42.7 L193.7 42.9 L194.3 43.2 L194.9 43.4 L195.5 43.7 L196.1 43.9 L196.7 44.2 L197.3 44.4 L197.9 44.7 L198.5 44.9 L199.1 45.2 L199.7 45.4 L200.3 45.6 L200.9 45.9 L201.5 46.1 L202.1 46.4 L202.7 46.6 L203.3 46.8 L203.9 47.1 L204.5 47.3 L205.1 47.5 L205.6 47.8 L206.2 48.0 L206.8 48.2 L207.4 48.5 L208.0 48.7 L208.6 48.9 L209.2 49.1 L209.8 49.4 L210.4 49.6 L211.0 49.8 L211.6 50.0 L212.2 50.3 L212.8 50.5 L213.4 50.7 L214.0 50.9 L214.6 51.2 L215.2 51.4 L215.8 51.6 L216.4 51.8 L217.0 52.0 L217.6 52.2 L218.2 52.5 L218.8 52.7 L219.4 52.9 L220.0 53.1 L220.6 53.3 L221.2 53.5 L221.8 53.7 L222.4 53.8 L223.0 54.0 L223.6 54.2 L224.2 54.4 L224.8 54.6 L225.4 54.8 L226.0 55.0 L226.6 55.2 L227.2 55.4 L227.8 55.6 L228.4 55.8 L229.0 56.0 L229.6 56.2 L230.2 56.4 L230.8 56.6 L231.4 56.8 L232.0 57.0 L232.6 57.2 L233.1 57.4 L233.7 57.6 L234.3 57.8 L234.9 58.0 L235.5 58.2 L236.1 58.5 L236.7 58.7 L237.3 58.9 L237.9 59.2 L238.5 59.4 L239.1 59.6 L239.7 59.9 L240.3 60.1 L240.9 60.4 L241.5 60.7 L242.1 60.9 L242.7 61.2 L243.3 61.5 L243.9 61.8 L244.5 62.1 L245.1 62.3 L245.7 62.6 L246.3 62.9 L246.9 63.2 L247.5 63.5 L248.1 63.8 L248.7 64.1 L249.3 64.4 L249.9 64.7 L250.5 65.1 L251.1 65.4 L251.7 65.7 L252.3 66.0 L252.9 66.3 L253.5 66.6 L254.1 66.9 L254.7 67.3 L255.3 67.6 L255.9 67.9 L256.5 68.2 L257.1 68.5 L257.7 68.8 L258.3 69.1 L258.9 69.5 L259.5 69.8 L260.1 70.1 L260.7 70.4 L261.2 70.7 L261.8 71.0 L262.4 71.3 L263.0 71.6 L263.6 71.8 L264.2 72.1 L264.8 72.4 L265.4 72.7 L266.0 73.0 L266.6 73.2 L267.2 73.5 L267.8 73.8 L268.4 74.1 L269.0 74.3 L269.6 74.6 L270.2 74.9 L270.8 75.1 L271.4 75.4 L272.0 75.7 L272.6 75.9 L273.2 76.2 L273.8 76.5 L274.4 76.7 L275.0 77.0 L275.6 77.3 L276.2 77.5 L276.8 77.8 L277.4 78.0 L278.0 78.3 L278.6 78.5 L279.2 78.8 L279.8 79.1 L280.4 79.3 L281.0 79.6 L281.6 79.8 L282.2 80.1 L282.8 80.3 L283.4 80.6 L284.0 80.9 L284.6 81.1 L285.2 81.4 L285.8 81.6 L286.4 81.9 L287.0 82.1 L287.6 82.4 L288.2 82.7 L288.7 82.9 L289.3 83.2 L289.9 83.4 L290.5 83.7 L291.1 16.4 L291.7 16.7 L292.3 17.0 L292.9 17.3 L293.5 17.5 L294.1 17.8 L294.7 18.1 L295.3 18.4 L295.9 18.6 L296.5 18.9 L297.1 19.2 L297.7 19.4 L298.3 19.7 L298.9 20.0 L299.5 20.3 L300.1 20.5 L300.7 20.8 L301.3 21.1 L301.9 21.4 L302.5 21.7 L303.1 22.0 L303.7 22.3 L304.3 22.6 L304.9 22.9 L305.5 23.2 L306.1 23.5 L306.7 23.8 L307.3 24.1 L307.9 24.4 L308.5 24.8 L309.1 25.1 L309.7 25.5 L310.3 25.8 L310.9 26.1 L311.5 26.5 L312.1 26.9 L312.7 27.3 L313.3 27.7 L313.9 28.0 L314.5 28.4 L315.1 28.8 L315.7 29.3 L316.2 29.7 L316.8 30.2 L317.4 30.6 L318.0 31.1 L318.6 31.6 L319.2 32.1 L319.8 32.6 L320.4 33.0 L321.0 33.5 L321.6 34.0 L322.2 34.6 L322.8 35.1 L323.4 35.6 L324.0 36.1 L324.6 36.7 L325.2 37.2 L325.8 37.7 L326.4 38.3 L327.0 38.8 L327.6 39.4 L328.2 39.9 L328.8 40.5 L329.4 41.1 L330.0 41.6 L330.6 42.2 L331.2 42.8 L331.8 43.3 L332.4 43.9 L333.0 44.5 L333.6 45.1 L334.2 45.6 L334.8 46.2 L335.4 46.8 L336.0 47.4 L336.6 48.0 L337.2 48.5 L337.8 49.1 L338.4 49.7 L339.0 50.3 L339.6 50.9 L340.2 51.5 L340.8 52.1 L341.4 52.6 L342.0 53.2 L342.6 53.8 L343.2 54.5 L343.8 55.1 L344.3 55.7 L344.9 56.3 L345.5 57.0 L346.1 57.6 L346.7 58.2 L347.3 58.9 L347.9 59.5 L348.5 60.2 L349.1 60.9 L349.7 61.5 L350.3 62.2 L350.9 62.8 L351.5 63.5 L352.1 64.2 L352.7 64.8 L353.3 65.5 L353.9 66.2 L354.5 66.8 L355.1 67.5 L355.7 68.1 L356.3 68.7 L356.9 69.4 L357.5 70.0 L358.1 70.6 L358.7 71.2 L359.3 71.8 L359.9 72.4 L360.5 73.0 L361.1 73.6 L361.7 74.2 L362.3 74.8 L362.9 75.4 L363.5 76.0 L364.1 76.6 L364.7 77.2 L365.3 77.8 L365.9 78.4 L366.5 78.9 L367.1 79.5 L367.7 80.1 L368.3 80.7 L368.9 81.3 L369.5 81.9 L370.1 82.4 L370.7 83.0 L371.3 83.6 L371.8 16.6 L372.4 17.3 L373.0 18.0 L373.6 18.6 L374.2 19.3 L374.8 20.0 L375.4 20.6 L376.0 21.3 L376.6 21.9 L377.2 22.6 L377.8 23.3 L378.4 23.9 L379.0 24.6 L379.6 25.2 L380.2 25.9 L380.8 26.6 L381.4 27.3 L382.0 27.9 L382.6 28.6 L383.2 29.3 L383.8 30.0 L384.4 30.7 L385.0 31.4 L385.6 32.1 L386.2 32.8 L386.8 33.5 L387.4 34.2 L388.0 34.9 L388.6 35.7 L389.2 36.5 L389.8 37.2 L390.4 38.0 L391.0 38.8 L391.6 39.7 L392.2 40.5 L392.8 41.4 L393.4 42.2 L394.0 43.1 L394.6 44.1 L395.2 45.0 L395.8 45.9 L396.4 46.9 L397.0 47.9 L397.6 48.9 L398.2 49.9 L398.8 50.9 L399.3 52.0 L399.9 53.0 L400.5 54.1 L401.1 55.1 L401.7 56.2 L402.3 57.2 L402.9 58.3 L403.5 59.4 L404.1 60.4 L404.7 61.5 L405.3 62.6" fill="none" stroke="#080808" stroke-width="1.6" stroke-linejoin="bevel"/>
<path d="M405.3 62.6 L405.9 63.7 L406.5 64.8 L407.1 66.0 L407.7 67.1 L408.3 68.2 L408.9 69.4 L409.5 70.5 L410.1 71.6 L410.7 72.8 L411.3 73.9 L411.9 75.1 L412.5 76.2 L413.1 77.4 L413.7 78.6 L414.3 79.7 L414.9 80.9 L415.5 82.0 L416.1 83.2 L416.7 16.7 L417.3 17.9 L417.9 19.1 L418.5 20.3 L419.1 21.5 L419.7 22.7 L420.3 23.9 L420.9 25.1 L421.5 26.4 L422.1 27.6 L422.7 28.9 L423.3 30.1 L423.9 31.4 L424.5 32.7 L425.1 34.0 L425.7 35.3 L426.3 36.6 L426.8 37.9 L427.4 39.2 L428.0 40.5 L428.6 41.9 L429.2 43.2 L429.8 44.6 L430.4 45.9 L431.0 47.3 L431.6 48.7 L432.2 50.1 L432.8 51.5 L433.4 52.9 L434.0 54.3 L434.6 55.8 L435.2 57.2 L435.8 58.7 L436.4 60.1 L437.0 61.6 L437.6 63.1 L438.2 64.6 L438.8 66.1 L439.4 67.6 L440.0 69.1 L440.6 70.6 L441.2 72.2 L441.8 73.7 L442.4 75.3 L443.0 76.9 L443.6 78.5 L444.2 80.1 L444.8 81.7 L445.4 83.3 L446.0 17.4 L446.6 19.1 L447.2 20.7 L447.8 22.4 L448.4 24.0 L449.0 25.7 L449.6 27.4 L450.2 29.1 L450.8 30.8 L451.4 32.6 L452.0 34.3 L452.6 36.1 L453.2 37.8 L453.8 39.6 L454.4 41.4 L454.9 43.2 L455.5 45.0 L456.1 46.8 L456.7 48.7 L457.3 50.5 L457.9 52.4 L458.5 54.3 L459.1 56.2 L459.7 58.1 L460.3 60.0 L460.9 61.9 L461.5 63.8 L462.1 65.8 L462.7 67.8 L463.3 69.7 L463.9 71.7 L464.5 73.7 L465.1 75.8 L465.7 77.8 L466.3 79.8 L466.9 81.9 L467.5 16.5 L468.1 18.6 L468.7 20.7 L469.3 22.8 L469.9 24.9 L470.5 27.1 L471.1 29.2 L471.7 31.4 L472.3 33.6 L472.9 35.8 L473.5 38.0 L474.1 40.3 L474.7 42.5 L475.3 44.8 L475.9 47.1 L476.5 49.3 L477.1 51.7 L477.7 54.0 L478.3 56.3 L478.9 58.7 L479.5 61.1 L480.1 63.5 L480.7 65.9 L481.3 68.3 L481.9 70.7 L482.4 73.2 L483.0 75.6 L483.6 78.1 L484.2 80.6 L484.8 83.2 L485.4 18.2 L486.0 20.8 L486.6 23.3 L487.2 25.9 L487.8 28.5 L488.4 31.2 L489.0 33.8 L489.6 36.5 L490.2 39.1 L490.8 41.8 L491.4 44.6 L492.0 47.3 L492.6 50.0 L493.2 52.8 L493.8 55.6 L494.4 58.4 L495.0 61.2 L495.6 64.1 L496.2 67.0 L496.8 69.8 L497.4 72.8 L498.0 75.7 L498.6 78.6 L499.2 81.6 L499.8 17.1 L500.4 20.1 L501.0 23.1 L501.6 26.2 L502.2 29.2 L502.8 32.3 L503.4 35.4 L504.0 38.5 L504.6 41.7 L505.2 44.9 L505.8 48.1 L506.4 51.3 L507.0 54.5 L507.6 57.8 L508.2 61.0 L508.8 64.3 L509.4 67.7 L509.9 71.0 L510.5 74.4 L511.1 77.8 L511.7 81.2 L512.3 17.1 L512.9 20.6 L513.5 24.1 L514.1 27.6 L514.7 31.1 L515.3 34.7 L515.9 38.3 L516.5 41.9 L517.1 45.5 L517.7 49.1 L518.3 52.8 L518.9 56.5 L519.5 60.2 L520.1 64.0 L520.7 67.8 L521.3 71.6 L521.9 75.4 L522.5 79.3 L523.1 83.1 L523.7 19.5 L524.3 23.5 L524.9 27.4 L525.5 31.4 L526.1 35.4 L526.7 39.5 L527.3 43.6 L527.9 47.6 L528.5 51.8 L529.1 55.9 L529.7 60.1 L530.3 64.3 L530.9 68.5 L531.5 72.8 L532.1 77.1 L532.7 81.4 L533.3 18.3 L533.9 22.7 L534.5 27.1 L535.1 31.5 L535.7 36.0 L536.3 40.5 L536.9 45.0 L537.5 49.6 L538.0 54.2 L538.6 58.8 L539.2 63.4 L539.8 68.1 L540.4 72.8 L541.0 77.6 L541.6 82.4 L542.2 19.7 L542.8 24.5 L543.4 29.4 L544.0 34.3 L544.6 39.3 L545.2 44.2 L545.8 49.3 L546.4 54.3 L547.0 59.4 L547.6 64.5 L548.2 69.4 L548.8 74.1 L549.4 78.9 L550.0 83.7 L550.6 21.1 L551.2 26.0 L551.8 30.9 L552.4 35.8 L553.0 40.8 L553.6 45.8 L554.2 50.8 L554.8 55.9 L555.4 61.0 L556.0 66.2 L556.6 71.3 L557.2 76.5 L557.8 81.8 L558.4 19.6 L559.0 24.9 L559.6 30.3 L560.2 35.7 L560.8 41.1 L561.4 46.5 L562.0 52.0 L562.6 57.6 L563.2 63.2 L563.8 68.8 L564.4 74.4 L565.0 80.1 L565.3 80.2 L565.3 18.3 L565.5 18.4 L566.1 24.1 L566.7 29.9 L567.3 35.8 L567.9 41.7 L568.5 47.6 L569.1 53.5 L569.7 59.6 L570.3 65.6 L570.9 71.7 L571.5 77.8 L572.1 78.6 L572.1 16.5 L572.1 16.5 L572.7 22.7 L573.3 29.0" fill="none" stroke="#080808" stroke-width="1.8" stroke-linejoin="bevel"/>
<path d="M572.7 22.7 L573.3 29.0 L573.9 35.2 L574.5 41.6 L575.1 48.0 L575.7 54.4 L576.3 60.9 L576.9 67.4 L577.5 73.9 L578.1 80.5 L578.4 81.3 L578.4 18.8 L578.7 19.7 L579.3 26.4 L579.9 33.1 L580.5 39.9 L581.1 46.7 L581.7 53.6 L582.3 60.5 L582.9 67.4 L583.5 74.5 L584.1 81.5 L584.3 82.3 L584.3 19.4 L584.7 21.1 L585.3 28.3 L585.9 35.5 L586.5 42.7 L587.1 50.0 L587.7 57.4 L588.3 64.8 L588.9 72.2 L589.5 79.7 L589.8 81.6 L589.8 18.1 L590.1 19.8 L590.7 27.4 L591.3 35.0 L591.9 42.7 L592.5 50.5 L593.0 58.3 L593.6 66.2 L594.2 74.1 L594.8 82.0 L595.0 83.0 L595.0 19.1 L595.4 22.6 L596.0 30.6 L596.6 38.8 L597.2 47.0 L597.8 55.2 L598.4 63.5 L599.0 71.9 L599.6 80.3 L599.9 82.2 L599.9 18.5 L600.2 21.2 L600.8 29.7 L601.4 38.3 L602.0 47.0 L602.6 55.7 L603.2 64.4 L603.8 73.2 L604.4 82.1 L604.5 83.0 L604.5 19.5 L605.0 23.5 L605.6 32.5 L606.2 41.6 L606.8 50.7 L607.4 59.9 L608.0 69.1 L608.6 78.4 L608.9 81.4 L608.9 18.1 L609.2 20.3 L609.8 30.2" fill="none" stroke="#080808" stroke-width="1.6" stroke-linejoin="bevel"/>
<path d="M609.8 30.2 L610.4 40.6 L611.0 51.0 L611.6 61.6 L612.2 72.1 L612.8 82.8 L612.8 83.3 L612.8 20.6 L613.4 26.0 L614.0 36.8 L614.6 47.7 L615.2 58.6 L615.8 69.6 L616.4 80.7 L616.5 82.4 L616.5 19.9 L617.0 24.4 L617.6 35.6 L618.2 47.0 L618.8 58.3 L619.4 69.8 L620.0 81.4 L620.1 82.7 L620.1 20.4 L620.5 25.5 L621.1 37.2 L621.7 49.0 L622.3 60.8 L622.9 72.8 L623.5 78.8 L623.5 16.7 L623.5 17.3 L624.1 29.4 L624.7 41.6 L625.3 53.9 L625.9 66.2 L626.5 78.7 L626.8 81.5 L626.8 19.6 L627.1 23.7 L627.7 36.3 L628.3 49.0 L628.9 61.8 L629.5 74.6 L629.9 79.6 L629.9 18.0 L630.1 20.1 L630.7 33.1 L631.3 46.2 L631.9 59.4 L632.5 72.7 L633.0 78.8 L633.0 17.3 L633.1 18.6 L633.7 32.1 L634.3 45.7 L634.9 59.4 L635.5 73.1 L636.0 79.0 L636.0 17.7 L636.1 19.5 L636.7 33.4 L637.3 47.4 L637.9 61.6 L638.5 75.8 L638.8 80.2 L638.8 19.1 L639.1 22.6 L639.7 37.0 L640.3 51.6 L640.9 66.2 L641.5 80.9 L641.6 82.5 L641.6 21.6 L642.1 28.2 L642.7 43.1 L643.3 58.1 L643.9 73.3 L644.3 77.9 L644.3 18.9 L644.5 21.0 L645.1 36.3 L645.7 51.7 L646.3 67.3 L646.9 82.9 L646.9 83.1 L646.9 28.0 L647.5 31.1" fill="none" stroke="#080808" stroke-width="0.5" stroke-opacity="0.45" stroke-linejoin="bevel"/>
<path d="M612.8 83.3 L612.8 20.6 M616.5 82.4 L616.5 19.9 M620.1 82.7 L620.1 20.4 M623.5 78.8 L623.5 16.7 M626.8 81.5 L626.8 19.6 M629.9 79.6 L629.9 18.0 M633.0 78.8 L633.0 17.3 M636.0 79.0 L636.0 17.7 M638.8 80.2 L638.8 19.1 M641.6 82.5 L641.6 21.6 M644.3 77.9 L644.3 18.9 M646.9 83.1 L646.9 28.0" fill="none" stroke="#080808" stroke-width="1.85" stroke-linecap="butt"/>
<path d="M630.1 20.1 L630.7 33.1 L631.3 46.2 L631.9 59.4 L632.5 72.7 L633.0 78.8 L633.0 17.3 L633.1 18.6 L633.7 32.1 L634.3 45.7 L634.9 59.4 L635.5 73.1 L636.0 79.0 L636.0 17.7 L636.1 19.5 L636.7 33.4 L637.3 47.4 L637.9 61.6 L638.5 75.8 L638.8 80.2 L638.8 19.1 L639.1 22.6" fill="none" stroke="#080808" stroke-width="0.6" stroke-linejoin="bevel"/>
<path d="M639.1 22.6 L639.7 37.0 L640.3 51.6 L640.9 66.2 L641.5 80.9 L641.6 82.5 L641.6 21.6 L642.1 28.2 L642.7 43.1 L643.3 58.1 L643.9 73.3 L644.3 77.9 L644.3 18.9 L644.5 21.0 L645.1 36.3 L645.7 51.7 L646.3 67.3 L646.9 82.9 L646.9 83.1 L646.9 28.0 L647.5 31.1" fill="none" stroke="#080808" stroke-width="1.0" stroke-linejoin="bevel"/>
<path d="M646.9 82.9 L646.9 83.1 L646.9 28.0 L647.5 31.1 L648.1 47.0 L648.6 62.9 L649.2 79.0 L649.4 79.1 L649.4 27.5 L649.8 27.7 L650.4 43.9 L651.0 60.3 L651.6 76.8 L652.2 25.9 L652.8 42.8 L653.4 59.7 L654.0 76.8 L654.6 26.5 L655.2 43.7 L655.8 61.1 L656.4 78.7 L657.0 28.8 L657.6 46.6 L658.2 64.4 L658.8 82.4 L659.4 33.1 L660.0 51.3 L660.6 69.7 L661.2 20.6 L661.8 39.3 L662.4 58.0 L663.0 76.8 L663.6 28.3 L664.2 47.5 L664.8 66.7 L665.4 18.6 L666.0 38.1 L666.6 57.7 L667.2 77.5 L667.8 29.9 L668.4 49.9 L669.0 70.1 L669.6 22.9 L670.2 43.3 L670.8 63.9 L671.4 17.1 L672.0 37.9 L672.6 58.9 L673.2 80.1 L673.8 33.8 L674.4 55.3 L675.0 76.8 L675.6 31.0 L676.1 52.9 L676.7 74.9 L677.3 29.5 L677.9 51.8 L678.5 74.1 L679.1 29.1 L679.7 51.7 L680.3 74.5 L680.9 30.0 L681.5 53.1 L682.1 76.3 L682.7 32.3 L683.3 55.8 L683.9 79.6 L684.5 36.0 L685.1 60.0 L685.7 16.7 L686.3 41.1 L686.9 65.7 L687.5 22.9 L688.1 47.7 L688.7 72.8 L689.3 30.5 L689.9 55.9 L690.5 81.4 L691.1 39.7 L691.7 65.6 L692.3 24.1 L692.9 50.4 L693.5 76.8 L694.1 35.9 L694.7 62.7 L695.3 22.2 L695.9 49.3 L696.5 76.7 L697.1 36.7 L697.7 64.4 L698.3 24.8 L698.9 52.9 L699.5 81.2 L700.1 42.1 L700.7 70.8 L701.3 32.1 L701.9 61.2 L702.5 22.9 L703.1 52.3 L703.6 82.0 L704.2 44.3 L704.8 74.3 L705.4 37.1 L706.0 67.5 L706.6 30.7 L707.2 61.5 L707.8 25.1 L708.4 56.4 L709.0 20.4 L709.6 52.0 L710.2 16.5 L710.8 48.6 L711.4 80.9 L712.0 46.0 L712.6 78.8 L713.2 44.3 L713.8 77.5 L714.4 43.5 L715.0 77.1 L715.6 43.6 L716.2 77.7 L716.8 44.6 L717.4 79.1 L718.0 46.5 L718.6 81.5 L719.2 49.3 L719.8 17.4 L720.4 53.2 L721.0 21.7 L721.6 58.0 L722.2 27.0 L722.8 63.7 L723.4 33.2 L724.0 70.5 L724.6 40.5 L725.2 78.3 L725.8 48.8 L726.4 19.6 L727.0 58.1 L727.6 29.4 L728.2 68.4 L728.8 40.2 L729.4 79.8 L730.0 52.2 L730.6 24.8 L731.2 65.2 L731.7 38.4 L732.3 79.3 L732.9 53.0 L733.5 27.0 L734.1 68.8 L734.7 43.3 L735.3 18.2 L735.9 60.8 L736.5 36.2 L737.1 79.4 L737.7 55.4 L738.3 31.7 L738.9 75.8 L739.5 52.7 L740.1 29.8 L740.7 74.8 L741.3 52.6 L741.9 30.7 L742.5 76.6 L743.1 55.3 L743.7 34.3 L744.3 81.2 L744.9 60.8 L745.5 40.8 L746.1 21.1 L746.7 69.2 L747.3 50.2 L747.9 31.4 L748.5 80.5 L749.1 62.4 L749.7 44.7 L750.3 27.3 L750.9 77.7 L751.5 61.0 L752.1 44.6 L752.7 28.6 L753.3 80.4 L753.9 65.1 L754.5 50.1 L755.1 35.5 L755.7 21.2 L756.3 74.8 L756.9 61.2 L757.5 48.1 L758.1 35.2 L758.7 22.8 L759.2 78.2 L759.8 66.5 L760.4 55.2 L761.0 44.2 L761.6 33.7 L762.2 23.5 L762.8 81.2 L763.4 71.8 L764.0 62.8 L764.6 54.2 L765.2 45.9 L765.8 38.1 L766.4 30.7 L767.0 23.7 L767.6 17.1 L768.2 78.4 L768.8 72.6 L769.4 67.3 L770.0 62.3 L770.6 57.8 L771.2 53.7 L771.8 50.1" fill="none" stroke="#080808" stroke-width="1.5" stroke-linejoin="bevel"/>
<path d="M754.5 26.6 L755.1 79.2 L755.7 64.6 L756.3 50.4 L756.9 36.5 L757.5 23.0 L758.1 77.4 L758.7 64.6 L759.2 52.3 L759.8 40.2 L760.4 28.6 L761.0 17.3 L761.6 74.0 L762.2 63.5 L762.8 53.4 L763.4 43.7 L764.0 34.3 L764.6 25.4 L765.2 16.9 L765.8 76.3 L766.4 68.5 L767.0 61.2 L767.6 54.3 L768.2 47.8 L768.8 41.7 L769.4 36.1 L770.0 30.8 L770.6 26.0 L771.2 21.6 L771.8 17.6" fill="none" stroke="#1010f0" stroke-width="1.5" stroke-dasharray="1.6 1.0" stroke-linejoin="bevel"/>
<line x1="613.0" y1="18.0" x2="613.0" y2="30.0" stroke="#ff1493" stroke-width="1.6" />
<line x1="624.3" y1="17.0" x2="624.3" y2="29.0" stroke="#ff1493" stroke-width="1.6" />
<line x1="639.8" y1="17.0" x2="639.8" y2="44.0" stroke="#ff1493" stroke-width="1.6" />
<line x1="644.6" y1="21.0" x2="644.6" y2="44.0" stroke="#ff1493" stroke-width="1.6" />
<line x1="664.8" y1="17.0" x2="664.8" y2="40.0" stroke="#ff1493" stroke-width="1.6" />
<line x1="671.0" y1="17.0" x2="671.0" y2="44.0" stroke="#ff1493" stroke-width="1.6" />
<path d="M709.3 25.0 Q714.6 15.0 719.9 25.0" fill="none" stroke="#2828ff" stroke-width="1.1" stroke-dasharray="1.3 1"/>
<path d="M709.3 29.6 Q714.6 19.6 719.9 29.6" fill="none" stroke="#2828ff" stroke-width="1.1" stroke-dasharray="1.3 1"/>
<path d="M709.3 34.2 Q714.6 24.2 719.9 34.2" fill="none" stroke="#2828ff" stroke-width="1.1" stroke-dasharray="1.3 1"/>
<path d="M709.3 38.8 Q714.6 28.8 719.9 38.8" fill="none" stroke="#2828ff" stroke-width="1.1" stroke-dasharray="1.3 1"/>
<path d="M709.3 43.4 Q714.6 33.4 719.9 43.4" fill="none" stroke="#2828ff" stroke-width="1.1" stroke-dasharray="1.3 1"/>
<path d="M365.0 48.8 L366.2 48.8 L367.7 48.7 L369.4 48.7 L371.3 48.7 L373.4 48.6 L375.6 48.5 L378.0 48.5 L380.4 48.4 L382.8 48.4 L385.3 48.4 L387.7 48.3 L390.0 48.3 L392.4 48.3 L394.8 48.3 L397.4 48.3 L400.0 48.3 L402.7 48.3 L405.3 48.3 L408.0 48.3 L410.6 48.3 L413.1 48.3 L415.5 48.3 L417.8 48.3 L420.0 48.3 L422.1 48.3 L424.1 48.3 L426.2 48.3 L428.1 48.3 L430.1 48.3 L431.9 48.3 L433.6 48.4 L435.2 48.4 L436.6 48.4 L437.9 48.4 L439.1 48.4 L440.0 48.4" fill="none" stroke="#7cc07c" stroke-width="2.2" stroke-linejoin="round" />
<path d="M436.0 48.8 L437.6 48.8 L439.5 48.8 L441.7 48.8 L444.2 48.8 L446.9 48.8 L449.9 48.8 L453.0 48.8 L456.2 48.8 L459.6 48.9 L463.0 48.9 L466.5 48.9 L470.0 48.9 L473.5 48.9 L477.1 48.9 L480.7 49.0 L484.4 49.0 L488.2 49.0 L492.1 49.0 L496.2 49.1 L500.5 49.1 L505.0 49.1 L509.7 49.1 L514.7 49.2 L520.0 49.2 L525.6 49.2 L531.6 49.3 L537.9 49.3 L544.4 49.4 L551.2 49.4 L558.1 49.4 L565.1 49.5 L572.2 49.5 L579.3 49.6 L586.3 49.6 L593.2 49.7 L600.0 49.7 L606.8 49.7 L613.8 49.8 L620.9 49.8 L628.1 49.9 L635.4 49.9 L642.5 50.0 L649.5 50.0 L656.3 50.0 L662.8 50.1 L669.0 50.1 L674.7 50.1 L680.0 50.1 L684.7 50.1 L688.8 50.1 L692.5 50.1 L695.9 50.1 L698.9 50.1 L701.8 50.0 L704.5 50.0 L707.3 50.0 L710.1 49.9 L713.1 49.9 L716.4 49.9 L720.0 49.8 L724.1 49.7 L728.6 49.7 L733.4 49.6 L738.4 49.5 L743.4 49.4 L748.5 49.3 L753.4 49.2 L758.1 49.1 L762.4 49.0 L766.2 48.9 L769.4 48.9 L772.0 48.8" fill="none" stroke="#0a6a0a" stroke-width="0.8" stroke-linejoin="round" />
</g>
<line x1="51.5" y1="83.8" x2="772.0" y2="83.8" stroke="#1a1a1a" stroke-width="1.6" />
<g style="will-change:transform">
<text transform="translate(57.5 12.1) scale(0.75 1)" text-anchor="middle" font-size="8.7" fill="#222" stroke="#222" stroke-width="0.22" >10</text>
<text transform="translate(57.5 436.3) scale(0.75 1)" text-anchor="middle" font-size="8.7" fill="#222" stroke="#222" stroke-width="0.22" >10</text>
<text transform="translate(119.1 12.1) scale(0.75 1)" text-anchor="middle" font-size="8.7" fill="#222" stroke="#222" stroke-width="0.22" >20</text>
<text transform="translate(119.1 436.3) scale(0.75 1)" text-anchor="middle" font-size="8.7" fill="#222" stroke="#222" stroke-width="0.22" >20</text>
<text transform="translate(155.1 12.1) scale(0.75 1)" text-anchor="middle" font-size="8.7" fill="#222" stroke="#222" stroke-width="0.22" >30</text>
<text transform="translate(155.1 436.3) scale(0.75 1)" text-anchor="middle" font-size="8.7" fill="#222" stroke="#222" stroke-width="0.22" >30</text>
<text transform="translate(180.6 12.1) scale(0.75 1)" text-anchor="middle" font-size="8.7" fill="#222" stroke="#222" stroke-width="0.22" >40</text>
<text transform="translate(180.6 436.3) scale(0.75 1)" text-anchor="middle" font-size="8.7" fill="#222" stroke="#222" stroke-width="0.22" >40</text>
<text transform="translate(200.4 12.1) scale(0.75 1)" text-anchor="middle" font-size="8.7" fill="#222" stroke="#222" stroke-width="0.22" >50</text>
<text transform="translate(200.4 436.3) scale(0.75 1)" text-anchor="middle" font-size="8.7" fill="#222" stroke="#222" stroke-width="0.22" >50</text>
<text transform="translate(216.6 12.1) scale(0.75 1)" text-anchor="middle" font-size="8.7" fill="#222" stroke="#222" stroke-width="0.22" >60</text>
<text transform="translate(216.6 436.3) scale(0.75 1)" text-anchor="middle" font-size="8.7" fill="#222" stroke="#222" stroke-width="0.22" >60</text>
<text transform="translate(230.3 12.1) scale(0.75 1)" text-anchor="middle" font-size="8.7" fill="#222" stroke="#222" stroke-width="0.22" >70</text>
<text transform="translate(230.3 436.3) scale(0.75 1)" text-anchor="middle" font-size="8.7" fill="#222" stroke="#222" stroke-width="0.22" >70</text>
<text transform="translate(242.2 12.1) scale(0.75 1)" text-anchor="middle" font-size="8.7" fill="#222" stroke="#222" stroke-width="0.22" >80</text>
<text transform="translate(242.2 436.3) scale(0.75 1)" text-anchor="middle" font-size="8.7" fill="#222" stroke="#222" stroke-width="0.22" >80</text>
<text transform="translate(262.0 12.1) scale(0.75 1)" text-anchor="middle" font-size="8.7" fill="#222" stroke="#222" stroke-width="0.22" >100</text>
<text transform="translate(262.0 436.3) scale(0.75 1)" text-anchor="middle" font-size="8.7" fill="#222" stroke="#222" stroke-width="0.22" >100</text>
<text transform="translate(323.6 12.1) scale(0.75 1)" text-anchor="middle" font-size="8.7" fill="#222" stroke="#222" stroke-width="0.22" >200</text>
<text transform="translate(323.6 436.3) scale(0.75 1)" text-anchor="middle" font-size="8.7" fill="#222" stroke="#222" stroke-width="0.22" >200</text>
<text transform="translate(359.6 12.1) scale(0.75 1)" text-anchor="middle" font-size="8.7" fill="#222" stroke="#222" stroke-width="0.22" >300</text>
<text transform="translate(359.6 436.3) scale(0.75 1)" text-anchor="middle" font-size="8.7" fill="#222" stroke="#222" stroke-width="0.22" >300</text>
<text transform="translate(385.1 12.1) scale(0.75 1)" text-anchor="middle" font-size="8.7" fill="#222" stroke="#222" stroke-width="0.22" >400</text>
<text transform="translate(385.1 436.3) scale(0.75 1)" text-anchor="middle" font-size="8.7" fill="#222" stroke="#222" stroke-width="0.22" >400</text>
<text transform="translate(404.9 12.1) scale(0.75 1)" text-anchor="middle" font-size="8.7" fill="#222" stroke="#222" stroke-width="0.22" >500</text>
<text transform="translate(404.9 436.3) scale(0.75 1)" text-anchor="middle" font-size="8.7" fill="#222" stroke="#222" stroke-width="0.22" >500</text>
<text transform="translate(421.1 12.1) scale(0.75 1)" text-anchor="middle" font-size="8.7" fill="#222" stroke="#222" stroke-width="0.22" >600</text>
<text transform="translate(421.1 436.3) scale(0.75 1)" text-anchor="middle" font-size="8.7" fill="#222" stroke="#222" stroke-width="0.22" >600</text>
<text transform="translate(446.7 12.1) scale(0.75 1)" text-anchor="middle" font-size="8.7" fill="#222" stroke="#222" stroke-width="0.22" >800</text>
<text transform="translate(446.7 436.3) scale(0.75 1)" text-anchor="middle" font-size="8.7" fill="#222" stroke="#222" stroke-width="0.22" >800</text>
<text transform="translate(466.5 12.1) scale(0.75 1)" text-anchor="middle" font-size="8.7" fill="#222" stroke="#222" stroke-width="0.22" >1000</text>
<text transform="translate(466.5 436.3) scale(0.75 1)" text-anchor="middle" font-size="8.7" fill="#222" stroke="#222" stroke-width="0.22" >1000</text>
<text transform="translate(528.1 12.1) scale(0.75 1)" text-anchor="middle" font-size="8.7" fill="#222" stroke="#222" stroke-width="0.22" >2000</text>
<text transform="translate(528.1 436.3) scale(0.75 1)" text-anchor="middle" font-size="8.7" fill="#222" stroke="#222" stroke-width="0.22" >2000</text>
<text transform="translate(564.1 12.1) scale(0.75 1)" text-anchor="middle" font-size="8.7" fill="#222" stroke="#222" stroke-width="0.22" >3000</text>
<text transform="translate(564.1 436.3) scale(0.75 1)" text-anchor="middle" font-size="8.7" fill="#222" stroke="#222" stroke-width="0.22" >3000</text>
<text transform="translate(589.6 12.1) scale(0.75 1)" text-anchor="middle" font-size="8.7" fill="#222" stroke="#222" stroke-width="0.22" >4000</text>
<text transform="translate(589.6 436.3) scale(0.75 1)" text-anchor="middle" font-size="8.7" fill="#222" stroke="#222" stroke-width="0.22" >4000</text>
<text transform="translate(609.4 12.1) scale(0.75 1)" text-anchor="middle" font-size="8.7" fill="#222" stroke="#222" stroke-width="0.22" >5000</text>
<text transform="translate(609.4 436.3) scale(0.75 1)" text-anchor="middle" font-size="8.7" fill="#222" stroke="#222" stroke-width="0.22" >5000</text>
<text transform="translate(625.6 12.1) scale(0.75 1)" text-anchor="middle" font-size="8.7" fill="#222" stroke="#222" stroke-width="0.22" >6000</text>
<text transform="translate(625.6 436.3) scale(0.75 1)" text-anchor="middle" font-size="8.7" fill="#222" stroke="#222" stroke-width="0.22" >6000</text>
<text transform="translate(651.2 12.1) scale(0.75 1)" text-anchor="middle" font-size="8.7" fill="#222" stroke="#222" stroke-width="0.22" >8000</text>
<text transform="translate(651.2 436.3) scale(0.75 1)" text-anchor="middle" font-size="8.7" fill="#222" stroke="#222" stroke-width="0.22" >8000</text>
<text transform="translate(671.0 12.1) scale(0.75 1)" text-anchor="middle" font-size="8.7" fill="#222" stroke="#222" stroke-width="0.22" >10000</text>
<text transform="translate(671.0 436.3) scale(0.75 1)" text-anchor="middle" font-size="8.7" fill="#222" stroke="#222" stroke-width="0.22" >10000</text>
<text transform="translate(732.6 12.1) scale(0.75 1)" text-anchor="middle" font-size="8.7" fill="#222" stroke="#222" stroke-width="0.22" >20000</text>
<text transform="translate(732.6 436.3) scale(0.75 1)" text-anchor="middle" font-size="8.7" fill="#222" stroke="#222" stroke-width="0.22" >20000</text>
<text transform="translate(769.3 436.3) scale(0.75 1)" text-anchor="middle" font-size="8.7" fill="#222" stroke="#222" stroke-width="0.22" >Hz</text>
<text transform="translate(45.2 34.5) scale(0.75 1)" text-anchor="end" font-size="8.7" fill="#222" stroke="#222" stroke-width="0.22" >100</text>
<text transform="translate(45.2 53.2) scale(0.75 1)" text-anchor="end" font-size="8.7" fill="#222" stroke="#222" stroke-width="0.22" >0</text>
<text transform="translate(45.2 72.0) scale(0.75 1)" text-anchor="end" font-size="8.7" fill="#222" stroke="#222" stroke-width="0.22" >-100</text>
<text transform="translate(30.0 22.5) scale(0.75 1)" text-anchor="middle" font-size="8.7" fill="#222" stroke="#222" stroke-width="0.22" >[°]</text>
<text transform="translate(167.7 108.1) scale(0.75 1)" text-anchor="middle" font-size="8.7" fill="#222" stroke="#222" stroke-width="0.22" >10</text>
<text transform="translate(106.2 108.1) scale(0.75 1)" text-anchor="middle" font-size="8.7" fill="#222" stroke="#222" stroke-width="0.22" >20</text>
<text transform="translate(70.2 108.1) scale(0.75 1)" text-anchor="middle" font-size="8.7" fill="#222" stroke="#222" stroke-width="0.22" >30</text>
<text transform="translate(372.2 108.1) scale(0.75 1)" text-anchor="middle" font-size="8.7" fill="#222" stroke="#222" stroke-width="0.22" >1</text>
<text transform="translate(310.7 108.1) scale(0.75 1)" text-anchor="middle" font-size="8.7" fill="#222" stroke="#222" stroke-width="0.22" >2</text>
<text transform="translate(274.7 108.1) scale(0.75 1)" text-anchor="middle" font-size="8.7" fill="#222" stroke="#222" stroke-width="0.22" >3</text>
<text transform="translate(249.1 108.1) scale(0.75 1)" text-anchor="middle" font-size="8.7" fill="#222" stroke="#222" stroke-width="0.22" >4</text>
<text transform="translate(229.3 108.1) scale(0.75 1)" text-anchor="middle" font-size="8.7" fill="#222" stroke="#222" stroke-width="0.22" >5</text>
<text transform="translate(213.1 108.1) scale(0.75 1)" text-anchor="middle" font-size="8.7" fill="#222" stroke="#222" stroke-width="0.22" >6</text>
<text transform="translate(199.4 108.1) scale(0.75 1)" text-anchor="middle" font-size="8.7" fill="#222" stroke="#222" stroke-width="0.22" >7</text>
<text transform="translate(187.5 108.1) scale(0.75 1)" text-anchor="middle" font-size="8.7" fill="#222" stroke="#222" stroke-width="0.22" >8</text>
<text transform="translate(177.1 108.1) scale(0.75 1)" text-anchor="middle" font-size="8.7" fill="#222" stroke="#222" stroke-width="0.22" >9</text>
<text transform="translate(576.7 108.1) scale(0.75 1)" text-anchor="middle" font-size="8.7" fill="#222" stroke="#222" stroke-width="0.22" >0,1</text>
<text transform="translate(515.2 108.1) scale(0.75 1)" text-anchor="middle" font-size="8.7" fill="#222" stroke="#222" stroke-width="0.22" >0,2</text>
<text transform="translate(479.2 108.1) scale(0.75 1)" text-anchor="middle" font-size="8.7" fill="#222" stroke="#222" stroke-width="0.22" >0,3</text>
<text transform="translate(453.6 108.1) scale(0.75 1)" text-anchor="middle" font-size="8.7" fill="#222" stroke="#222" stroke-width="0.22" >0,4</text>
<text transform="translate(433.8 108.1) scale(0.75 1)" text-anchor="middle" font-size="8.7" fill="#222" stroke="#222" stroke-width="0.22" >0,5</text>
<text transform="translate(417.6 108.1) scale(0.75 1)" text-anchor="middle" font-size="8.7" fill="#222" stroke="#222" stroke-width="0.22" >0,6</text>
<text transform="translate(403.9 108.1) scale(0.75 1)" text-anchor="middle" font-size="8.7" fill="#222" stroke="#222" stroke-width="0.22" >0,7</text>
<text transform="translate(392.0 108.1) scale(0.75 1)" text-anchor="middle" font-size="8.7" fill="#222" stroke="#222" stroke-width="0.22" >0,8</text>
<text transform="translate(381.6 108.1) scale(0.75 1)" text-anchor="middle" font-size="8.7" fill="#222" stroke="#222" stroke-width="0.22" >0,9</text>
<text transform="translate(719.7 108.1) scale(0.75 1)" text-anchor="middle" font-size="8.7" fill="#222" stroke="#222" stroke-width="0.22" >0,02</text>
<text transform="translate(683.7 108.1) scale(0.75 1)" text-anchor="middle" font-size="8.7" fill="#222" stroke="#222" stroke-width="0.22" >0,03</text>
<text transform="translate(658.1 108.1) scale(0.75 1)" text-anchor="middle" font-size="8.7" fill="#222" stroke="#222" stroke-width="0.22" >0,04</text>
<text transform="translate(638.3 108.1) scale(0.75 1)" text-anchor="middle" font-size="8.7" fill="#222" stroke="#222" stroke-width="0.22" >0,05</text>
<text transform="translate(622.1 108.1) scale(0.75 1)" text-anchor="middle" font-size="8.7" fill="#222" stroke="#222" stroke-width="0.22" >0,06</text>
<text transform="translate(596.5 108.1) scale(0.75 1)" text-anchor="middle" font-size="8.7" fill="#222" stroke="#222" stroke-width="0.22" >0,08</text>
<text transform="translate(768.0 108.3) scale(0.75 1)" text-anchor="middle" font-size="8.7" fill="#222" stroke="#222" stroke-width="0.22" >[m]</text>
<text transform="translate(44.8 420.9) scale(0.75 1)" text-anchor="end" font-size="8.7" fill="#222" stroke="#222" stroke-width="0.22" >52</text>
<text transform="translate(44.8 409.9) scale(0.75 1)" text-anchor="end" font-size="8.7" fill="#222" stroke="#222" stroke-width="0.22" >54</text>
<text transform="translate(44.8 398.9) scale(0.75 1)" text-anchor="end" font-size="8.7" fill="#222" stroke="#222" stroke-width="0.22" >56</text>
<text transform="translate(44.8 387.9) scale(0.75 1)" text-anchor="end" font-size="8.7" fill="#222" stroke="#222" stroke-width="0.22" >58</text>
<text transform="translate(44.8 376.9) scale(0.75 1)" text-anchor="end" font-size="8.7" fill="#222" stroke="#222" stroke-width="0.22" >60</text>
<text transform="translate(44.8 365.9) scale(0.75 1)" text-anchor="end" font-size="8.7" fill="#222" stroke="#222" stroke-width="0.22" >62</text>
<text transform="translate(44.8 354.9) scale(0.75 1)" text-anchor="end" font-size="8.7" fill="#222" stroke="#222" stroke-width="0.22" >64</text>
<text transform="translate(44.8 343.9) scale(0.75 1)" text-anchor="end" font-size="8.7" fill="#222" stroke="#222" stroke-width="0.22" >66</text>
<text transform="translate(44.8 332.9) scale(0.75 1)" text-anchor="end" font-size="8.7" fill="#222" stroke="#222" stroke-width="0.22" >68</text>
<text transform="translate(44.8 321.9) scale(0.75 1)" text-anchor="end" font-size="8.7" fill="#222" stroke="#222" stroke-width="0.22" >70</text>
<text transform="translate(44.8 310.9) scale(0.75 1)" text-anchor="end" font-size="8.7" fill="#222" stroke="#222" stroke-width="0.22" >72</text>
<text transform="translate(44.8 299.9) scale(0.75 1)" text-anchor="end" font-size="8.7" fill="#222" stroke="#222" stroke-width="0.22" >74</text>
<text transform="translate(44.8 288.9) scale(0.75 1)" text-anchor="end" font-size="8.7" fill="#222" stroke="#222" stroke-width="0.22" >76</text>
<text transform="translate(44.8 277.9) scale(0.75 1)" text-anchor="end" font-size="8.7" fill="#222" stroke="#222" stroke-width="0.22" >78</text>
<text transform="translate(44.8 266.9) scale(0.75 1)" text-anchor="end" font-size="8.7" fill="#222" stroke="#222" stroke-width="0.22" >80</text>
<text transform="translate(44.8 255.9) scale(0.75 1)" text-anchor="end" font-size="8.7" fill="#222" stroke="#222" stroke-width="0.22" >82</text>
<text transform="translate(44.8 244.9) scale(0.75 1)" text-anchor="end" font-size="8.7" fill="#222" stroke="#222" stroke-width="0.22" >84</text>
<text transform="translate(44.8 233.9) scale(0.75 1)" text-anchor="end" font-size="8.7" fill="#222" stroke="#222" stroke-width="0.22" >86</text>
<text transform="translate(44.8 222.9) scale(0.75 1)" text-anchor="end" font-size="8.7" fill="#222" stroke="#222" stroke-width="0.22" >88</text>
<text transform="translate(44.8 211.9) scale(0.75 1)" text-anchor="end" font-size="8.7" fill="#222" stroke="#222" stroke-width="0.22" >90</text>
<text transform="translate(44.8 200.9) scale(0.75 1)" text-anchor="end" font-size="8.7" fill="#222" stroke="#222" stroke-width="0.22" >92</text>
<text transform="translate(44.8 189.9) scale(0.75 1)" text-anchor="end" font-size="8.7" fill="#222" stroke="#222" stroke-width="0.22" >94</text>
<text transform="translate(44.8 178.9) scale(0.75 1)" text-anchor="end" font-size="8.7" fill="#222" stroke="#222" stroke-width="0.22" >96</text>
<text transform="translate(44.8 167.9) scale(0.75 1)" text-anchor="end" font-size="8.7" fill="#222" stroke="#222" stroke-width="0.22" >98</text>
<text transform="translate(44.8 156.9) scale(0.75 1)" text-anchor="end" font-size="8.7" fill="#222" stroke="#222" stroke-width="0.22" >100</text>
<text transform="translate(44.8 145.9) scale(0.75 1)" text-anchor="end" font-size="8.7" fill="#222" stroke="#222" stroke-width="0.22" >102</text>
<text transform="translate(44.8 134.9) scale(0.75 1)" text-anchor="end" font-size="8.7" fill="#222" stroke="#222" stroke-width="0.22" >104</text>
<text transform="translate(27.2 118.8) scale(0.75 1)" text-anchor="start" font-size="8.7" fill="#222" stroke="#222" stroke-width="0.22" >[dB]</text>
<text transform="translate(20.0 193.3) scale(0.75 1)" text-anchor="end" font-size="8.7" fill="#222" stroke="#222" stroke-width="0.22" >10</text>
<text transform="translate(20.0 169.7) scale(0.75 1)" text-anchor="end" font-size="8.7" fill="#222" stroke="#222" stroke-width="0.22" >20</text>
<text transform="translate(20.0 155.8) scale(0.75 1)" text-anchor="end" font-size="8.7" fill="#222" stroke="#222" stroke-width="0.22" >30</text>
<text transform="translate(20.0 138.4) scale(0.75 1)" text-anchor="end" font-size="8.7" fill="#222" stroke="#222" stroke-width="0.22" >50</text>
<text transform="translate(20.0 272.0) scale(0.75 1)" text-anchor="end" font-size="8.7" fill="#222" stroke="#222" stroke-width="0.22" >1</text>
<text transform="translate(20.0 248.3) scale(0.75 1)" text-anchor="end" font-size="8.7" fill="#222" stroke="#222" stroke-width="0.22" >2</text>
<text transform="translate(20.0 234.5) scale(0.75 1)" text-anchor="end" font-size="8.7" fill="#222" stroke="#222" stroke-width="0.22" >3</text>
<text transform="translate(20.0 224.6) scale(0.75 1)" text-anchor="end" font-size="8.7" fill="#222" stroke="#222" stroke-width="0.22" >4</text>
<text transform="translate(20.0 217.0) scale(0.75 1)" text-anchor="end" font-size="8.7" fill="#222" stroke="#222" stroke-width="0.22" >5</text>
<text transform="translate(20.0 205.5) scale(0.75 1)" text-anchor="end" font-size="8.7" fill="#222" stroke="#222" stroke-width="0.22" >7</text>
<text transform="translate(20.0 350.7) scale(0.75 1)" text-anchor="end" font-size="8.7" fill="#222" stroke="#222" stroke-width="0.22" >0,1</text>
<text transform="translate(20.0 327.0) scale(0.75 1)" text-anchor="end" font-size="8.7" fill="#222" stroke="#222" stroke-width="0.22" >0,2</text>
<text transform="translate(20.0 313.1) scale(0.75 1)" text-anchor="end" font-size="8.7" fill="#222" stroke="#222" stroke-width="0.22" >0,3</text>
<text transform="translate(20.0 295.7) scale(0.75 1)" text-anchor="end" font-size="8.7" fill="#222" stroke="#222" stroke-width="0.22" >0,5</text>
<text transform="translate(20.0 279.6) scale(0.75 1)" text-anchor="end" font-size="8.7" fill="#222" stroke="#222" stroke-width="0.22" >0,8</text>
<text transform="translate(20.0 405.6) scale(0.75 1)" text-anchor="end" font-size="8.7" fill="#222" stroke="#222" stroke-width="0.22" >0,02</text>
<text transform="translate(20.0 391.8) scale(0.75 1)" text-anchor="end" font-size="8.7" fill="#222" stroke="#222" stroke-width="0.22" >0,03</text>
<text transform="translate(20.0 374.3) scale(0.75 1)" text-anchor="end" font-size="8.7" fill="#222" stroke="#222" stroke-width="0.22" >0,05</text>
<text transform="translate(2.2 118.8) scale(0.75 1)" text-anchor="start" font-size="8.7" fill="#222" stroke="#222" stroke-width="0.22" >[mm]</text>
<text transform="translate(777.2 382.0) scale(0.75 1)" text-anchor="start" font-size="8.7" fill="#222" stroke="#222" stroke-width="0.22" >2</text>
<text transform="translate(777.2 354.3) scale(0.75 1)" text-anchor="start" font-size="8.7" fill="#222" stroke="#222" stroke-width="0.22" >3</text>
<text transform="translate(777.2 334.7) scale(0.75 1)" text-anchor="start" font-size="8.7" fill="#222" stroke="#222" stroke-width="0.22" >4</text>
<text transform="translate(777.2 319.5) scale(0.75 1)" text-anchor="start" font-size="8.7" fill="#222" stroke="#222" stroke-width="0.22" >5</text>
<text transform="translate(777.2 307.0) scale(0.75 1)" text-anchor="start" font-size="8.7" fill="#222" stroke="#222" stroke-width="0.22" >6</text>
<text transform="translate(777.2 296.5) scale(0.75 1)" text-anchor="start" font-size="8.7" fill="#222" stroke="#222" stroke-width="0.22" >7</text>
<text transform="translate(777.2 287.3) scale(0.75 1)" text-anchor="start" font-size="8.7" fill="#222" stroke="#222" stroke-width="0.22" >8</text>
<text transform="translate(777.2 272.1) scale(0.75 1)" text-anchor="start" font-size="8.7" fill="#222" stroke="#222" stroke-width="0.22" >10</text>
<text transform="translate(777.2 224.7) scale(0.75 1)" text-anchor="start" font-size="8.7" fill="#222" stroke="#222" stroke-width="0.22" >20</text>
<text transform="translate(777.2 197.0) scale(0.75 1)" text-anchor="start" font-size="8.7" fill="#222" stroke="#222" stroke-width="0.22" >30</text>
<text transform="translate(777.2 177.4) scale(0.75 1)" text-anchor="start" font-size="8.7" fill="#222" stroke="#222" stroke-width="0.22" >40</text>
<text transform="translate(777.2 162.2) scale(0.75 1)" text-anchor="start" font-size="8.7" fill="#222" stroke="#222" stroke-width="0.22" >50</text>
<text transform="translate(777.2 149.7) scale(0.75 1)" text-anchor="start" font-size="8.7" fill="#222" stroke="#222" stroke-width="0.22" >60</text>
<text transform="translate(777.2 139.2) scale(0.75 1)" text-anchor="start" font-size="8.7" fill="#222" stroke="#222" stroke-width="0.22" >70</text>
<text transform="translate(777.2 130.0) scale(0.75 1)" text-anchor="start" font-size="8.7" fill="#222" stroke="#222" stroke-width="0.22" >80</text>
<text transform="translate(780.0 118.8) scale(0.75 1)" text-anchor="start" font-size="8.7" fill="#222" stroke="#222" stroke-width="0.22" >[Ohm]</text>
<text transform="translate(743.5 120.3) scale(0.93 1)" text-anchor="start" font-size="8.5" fill="#c4c4c4" stroke="#c4c4c4" stroke-width="0.22" >Basta!</text>
<text transform="translate(143.3 414.8) scale(1 1)" text-anchor="start" font-size="8.65" fill="#2a2aff" stroke="#2a2aff" stroke-width="0.22" >Mikavstånd 1,5m</text>
</g>
</svg></body></html>
